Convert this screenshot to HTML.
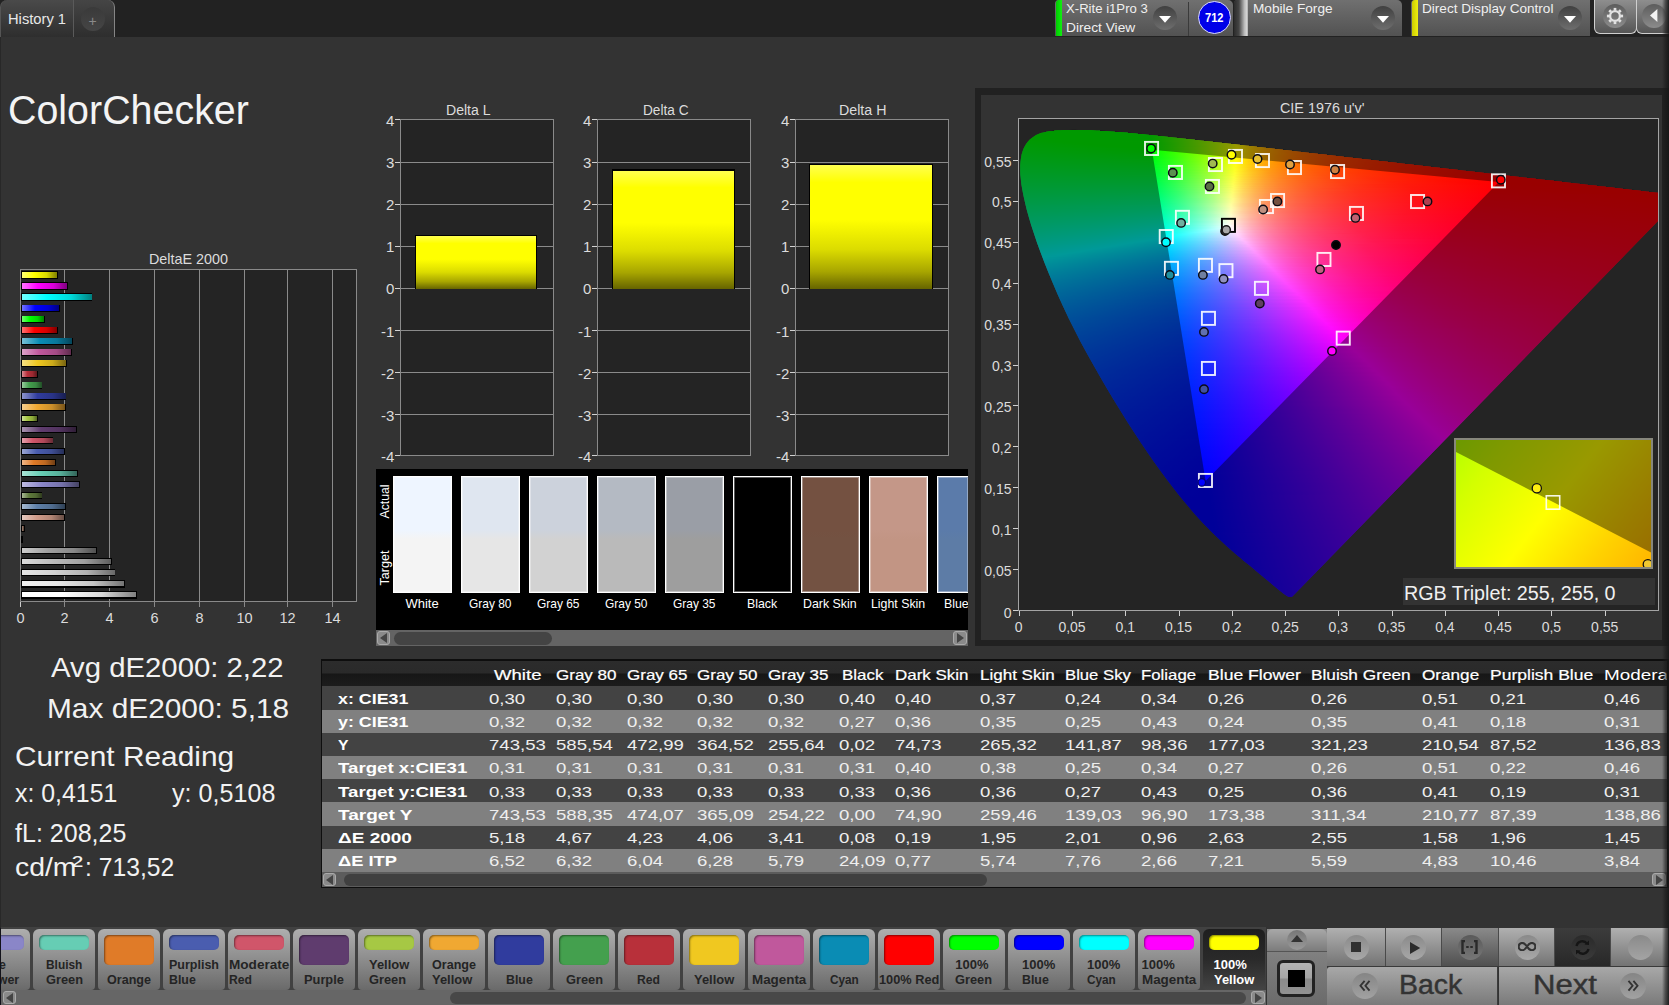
<!DOCTYPE html><html><head><meta charset="utf-8"><title>ColorChecker</title><style>
*{margin:0;padding:0;box-sizing:border-box}
html,body{width:1669px;height:1005px;overflow:hidden;background:#333;font-family:"Liberation Sans",sans-serif}
#r{position:absolute;left:0;top:0;width:1669px;height:1005px;overflow:hidden;background:#333}
.a,.t,i{position:absolute;display:block}
.t{white-space:nowrap;line-height:1;transform-origin:0 50%}
.ciebg{position:absolute;left:0;top:0;width:639px;height:491px}
.ciebg i{position:absolute}
.cieov{position:absolute;left:0;top:0}
</style></head><body><div id="r"><div class="a" style="left:0px;top:0px;width:1669px;height:37px;background:#222"></div>
<div class="a" style="left:0px;top:0px;width:74px;height:37px;background:linear-gradient(#4a4a4a,#2e2e2e);border-radius:7px 0 0 0;border-left:1px solid #555;border-right:1px solid #5a5a5a"></div>
<div class="a" style="left:74px;top:0px;width:41px;height:37px;background:linear-gradient(#454545,#2e2e2e);border-radius:0 7px 0 0;border-right:1.5px solid #858585"></div>
<div class="a" style="left:81px;top:7px;width:24px;height:24px;border-radius:50%;background:linear-gradient(#3a3a3a,#454545)"></div>
<span class="t" style="left:8.0px;top:10.5px;font-size:15px;color:#e8e8e8;transform:scaleX(0.980);">History 1</span>
<span class="t" style="left:88.5px;top:14.1px;font-size:14px;color:#8a8a8a;">+</span>
<div class="a" style="left:1055px;top:0px;width:178px;height:36px;background:linear-gradient(#707070,#525252);border-radius:4px 5px 0 0"></div>
<div class="a" style="left:1056px;top:0px;width:6px;height:36px;background:linear-gradient(90deg,#0c0,#1e1);border-radius:3px 0 0 0"></div>
<span class="t" style="left:1066.0px;top:2.2px;font-size:13.5px;color:#f0f0f0;transform:scaleX(0.973);">X-Rite i1Pro 3</span>
<span class="t" style="left:1066.0px;top:21.4px;font-size:13.5px;color:#f0f0f0;transform:scaleX(1.017);">Direct View</span>
<div class="a" style="left:1152.5px;top:5.5px;width:24px;height:24px;border-radius:50%;background:linear-gradient(#404040,#6e6e6e)"></div>
<svg class="a" style="left:1158.5px;top:15.5px" width="12" height="8"><path d="M0 0H12L6 6.8Z" fill="#fff"/></svg>
<div class="a" style="left:1188px;top:2px;width:1px;height:34px;background:#3a3a3a"></div>
<div class="a" style="left:1197.5px;top:1px;width:33px;height:33px;border-radius:50%;background:#0000e8;border:1.3px solid #dcdcff"></div>
<span class="t" style="left:1204.8px;top:11.7px;font-size:12.5px;color:#fff;font-weight:bold;transform:scaleX(0.887);">712</span>
<div class="a" style="left:1234px;top:0px;width:168.2px;height:36px;background:linear-gradient(#707070,#525252);border-radius:4px 5px 0 0"></div>
<div class="a" style="left:1234px;top:0px;width:14px;height:36px;background:linear-gradient(90deg,#2c2c2c,#444 35%,#bbb 75%,#d4d4d4 90%,#aaa);border-radius:3px 0 0 0"></div>
<span class="t" style="left:1252.5px;top:2.2px;font-size:13.5px;color:#f0f0f0;transform:scaleX(1.010);">Mobile Forge</span>
<div class="a" style="left:1371.4px;top:5.5px;width:24px;height:24px;border-radius:50%;background:linear-gradient(#404040,#6e6e6e)"></div>
<svg class="a" style="left:1377.4px;top:15.5px" width="12" height="8"><path d="M0 0H12L6 6.8Z" fill="#fff"/></svg>
<div class="a" style="left:1411px;top:0px;width:179px;height:36px;background:linear-gradient(#707070,#525252);border-radius:4px 0 0 0"></div>
<div class="a" style="left:1412px;top:0px;width:6px;height:36px;background:linear-gradient(90deg,#cc0,#ee1);border-radius:3px 0 0 0"></div>
<span class="t" style="left:1422.0px;top:2.2px;font-size:13.5px;color:#f0f0f0;transform:scaleX(1.007);">Direct Display Control</span>
<div class="a" style="left:1557.6px;top:5.5px;width:24px;height:24px;border-radius:50%;background:linear-gradient(#404040,#6e6e6e)"></div>
<svg class="a" style="left:1563.6px;top:15.5px" width="12" height="8"><path d="M0 0H12L6 6.8Z" fill="#fff"/></svg>
<div class="a" style="left:1594px;top:0px;width:42.6px;height:34px;background:linear-gradient(#8e8e8e,#555);border:1.3px solid #cfcfcf;border-top:none;border-radius:0 0 6px 6px"></div>
<div class="a" style="left:1636.4px;top:0px;width:42px;height:34px;background:linear-gradient(#8e8e8e,#555);border:1.3px solid #cfcfcf;border-top:none;border-radius:0 0 6px 6px"></div>
<div class="a" style="left:1603px;top:4.4px;width:24px;height:24px;border-radius:50%;background:linear-gradient(#5c5c5c,#8c8c8c)"></div>
<div class="a" style="left:1641.7px;top:4.4px;width:24px;height:24px;border-radius:50%;background:linear-gradient(#5c5c5c,#8c8c8c)"></div>
<svg class="a" style="left:1605px;top:6.4px" width="20" height="20" viewBox="-10 -10 20 20"><g fill="none" stroke="#e2e2e2"><circle r="4.9" stroke-width="2.3"/><g stroke-width="2.7"><path d="M0 -5.6V-8.1" transform="rotate(0)"/><path d="M0 -5.6V-8.1" transform="rotate(45)"/><path d="M0 -5.6V-8.1" transform="rotate(90)"/><path d="M0 -5.6V-8.1" transform="rotate(135)"/><path d="M0 -5.6V-8.1" transform="rotate(180)"/><path d="M0 -5.6V-8.1" transform="rotate(225)"/><path d="M0 -5.6V-8.1" transform="rotate(270)"/><path d="M0 -5.6V-8.1" transform="rotate(315)"/></g></g></svg>
<svg class="a" style="left:1650px;top:9px" width="8" height="13"><path d="M7.4 0V13L0 6.5Z" fill="#f4f4f4"/></svg>
<span class="t" style="left:8.3px;top:89.8px;font-size:41px;color:#f4f4f4;transform:scaleX(0.961);">ColorChecker</span>
<div class="a" style="left:20px;top:269px;width:337px;height:333px;background:#242424;border:1px solid #8a8a8a"></div>
<div class="a" style="left:64px;top:270px;width:1px;height:337px;background:#8a8a8a"></div>
<div class="a" style="left:109px;top:270px;width:1px;height:337px;background:#8a8a8a"></div>
<div class="a" style="left:154px;top:270px;width:1px;height:337px;background:#8a8a8a"></div>
<div class="a" style="left:199px;top:270px;width:1px;height:337px;background:#8a8a8a"></div>
<div class="a" style="left:244px;top:270px;width:1px;height:337px;background:#8a8a8a"></div>
<div class="a" style="left:287px;top:270px;width:1px;height:337px;background:#8a8a8a"></div>
<div class="a" style="left:332px;top:270px;width:1px;height:337px;background:#8a8a8a"></div>
<div class="a" style="left:20px;top:602px;width:1px;height:5px;background:#ccc"></div>
<span class="t" style="left:149.0px;top:251.9px;font-size:14.5px;color:#dcdcdc;transform:scaleX(0.990);">DeltaE 2000</span>
<span class="t" style="left:16.5px;top:611.2px;font-size:14.5px;color:#dcdcdc;">0</span>
<span class="t" style="left:60.5px;top:611.2px;font-size:14.5px;color:#dcdcdc;">2</span>
<span class="t" style="left:105.5px;top:611.2px;font-size:14.5px;color:#dcdcdc;">4</span>
<span class="t" style="left:150.5px;top:611.2px;font-size:14.5px;color:#dcdcdc;">6</span>
<span class="t" style="left:195.5px;top:611.2px;font-size:14.5px;color:#dcdcdc;">8</span>
<span class="t" style="left:236.4px;top:611.2px;font-size:14.5px;color:#dcdcdc;">10</span>
<span class="t" style="left:279.4px;top:611.2px;font-size:14.5px;color:#dcdcdc;">12</span>
<span class="t" style="left:324.4px;top:611.2px;font-size:14.5px;color:#dcdcdc;">14</span>
<div class="a" style="left:21px;top:271.4px;width:36.8px;height:7.5px;background:#000"><div class="a" style="left:1px;right:0.8px;top:0.9px;bottom:1.2px;background:linear-gradient(90deg,#ffff73,#ffff00 35%,#d9d900 70%,#808000)"></div></div>
<div class="a" style="left:21px;top:282.4px;width:47.1px;height:7.5px;background:#000"><div class="a" style="left:1px;right:0.8px;top:0.9px;bottom:1.2px;background:linear-gradient(90deg,#ff73ff,#ff00ff 35%,#d900d9 70%,#800080)"></div></div>
<div class="a" style="left:21px;top:293.4px;width:71.4px;height:7.5px;background:#000"><div class="a" style="left:1px;right:0.8px;top:0.9px;bottom:1.2px;background:linear-gradient(90deg,#73ffff,#00ffff 35%,#00d9d9 70%,#008080)"></div></div>
<div class="a" style="left:21px;top:304.5px;width:39.0px;height:7.5px;background:#000"><div class="a" style="left:1px;right:0.8px;top:0.9px;bottom:1.2px;background:linear-gradient(90deg,#7373ff,#0000ff 35%,#0000d9 70%,#000080)"></div></div>
<div class="a" style="left:21px;top:315.5px;width:23.9px;height:7.5px;background:#000"><div class="a" style="left:1px;right:0.8px;top:0.9px;bottom:1.2px;background:linear-gradient(90deg,#73ff73,#00ff00 35%,#00d900 70%,#008000)"></div></div>
<div class="a" style="left:21px;top:326.5px;width:37.0px;height:7.5px;background:#000"><div class="a" style="left:1px;right:0.8px;top:0.9px;bottom:1.2px;background:linear-gradient(90deg,#ff7373,#ff0000 35%,#d90000 70%,#800000)"></div></div>
<div class="a" style="left:21px;top:337.5px;width:52.2px;height:7.5px;background:#000"><div class="a" style="left:1px;right:0.8px;top:0.9px;bottom:1.2px;background:linear-gradient(90deg,#78c0d6,#0a8cb4 35%,#087799 70%,#05465a)"></div></div>
<div class="a" style="left:21px;top:348.5px;width:51.1px;height:7.5px;background:#000"><div class="a" style="left:1px;right:0.8px;top:0.9px;bottom:1.2px;background:linear-gradient(90deg,#dca3c9,#c0589c 35%,#a34b85 70%,#602c4e)"></div></div>
<div class="a" style="left:21px;top:359.6px;width:45.9px;height:7.5px;background:#000"><div class="a" style="left:1px;right:0.8px;top:0.9px;bottom:1.2px;background:linear-gradient(90deg,#f7e184,#f0c820 35%,#ccaa1b 70%,#786410)"></div></div>
<div class="a" style="left:21px;top:370.6px;width:16.7px;height:7.5px;background:#000"><div class="a" style="left:1px;right:0.8px;top:0.9px;bottom:1.2px;background:linear-gradient(90deg,#d88d93,#b8303a 35%,#9c2931 70%,#5c181d)"></div></div>
<div class="a" style="left:21px;top:381.6px;width:21.4px;height:7.5px;background:#000"><div class="a" style="left:1px;right:0.8px;top:0.9px;bottom:1.2px;background:linear-gradient(90deg,#98cb9e,#44a04e 35%,#3a8842 70%,#225027)"></div></div>
<div class="a" style="left:21px;top:392.6px;width:45.3px;height:7.5px;background:#000"><div class="a" style="left:1px;right:0.8px;top:0.9px;bottom:1.2px;background:linear-gradient(90deg,#8d94ca,#303c9e 35%,#293386 70%,#181e4f)"></div></div>
<div class="a" style="left:21px;top:403.6px;width:45.0px;height:7.5px;background:#000"><div class="a" style="left:1px;right:0.8px;top:0.9px;bottom:1.2px;background:linear-gradient(90deg,#f7cf8e,#f0a832 35%,#cc8f2a 70%,#785419)"></div></div>
<div class="a" style="left:21px;top:414.7px;width:17.2px;height:7.5px;background:#000"><div class="a" style="left:1px;right:0.8px;top:0.9px;bottom:1.2px;background:linear-gradient(90deg,#cee198,#a6c844 35%,#8daa3a 70%,#536422)"></div></div>
<div class="a" style="left:21px;top:425.7px;width:55.5px;height:7.5px;background:#000"><div class="a" style="left:1px;right:0.8px;top:0.9px;bottom:1.2px;background:linear-gradient(90deg,#a794af,#5f3c6e 35%,#51335e 70%,#301e37)"></div></div>
<div class="a" style="left:21px;top:436.7px;width:32.3px;height:7.5px;background:#000"><div class="a" style="left:1px;right:0.8px;top:0.9px;bottom:1.2px;background:linear-gradient(90deg,#e5a2ad,#d0566a 35%,#b1495a 70%,#682b35)"></div></div>
<div class="a" style="left:21px;top:447.7px;width:43.7px;height:7.5px;background:#000"><div class="a" style="left:1px;right:0.8px;top:0.9px;bottom:1.2px;background:linear-gradient(90deg,#9ba6d3,#4a5daf 35%,#3f4f95 70%,#252e58)"></div></div>
<div class="a" style="left:21px;top:458.7px;width:35.2px;height:7.5px;background:#000"><div class="a" style="left:1px;right:0.8px;top:0.9px;bottom:1.2px;background:linear-gradient(90deg,#eeb689,#e07b28 35%,#be6922 70%,#703e14)"></div></div>
<div class="a" style="left:21px;top:469.8px;width:56.9px;height:7.5px;background:#000"><div class="a" style="left:1px;right:0.8px;top:0.9px;bottom:1.2px;background:linear-gradient(90deg,#abe4d6,#66cdb4 35%,#57ae99 70%,#33665a)"></div></div>
<div class="a" style="left:21px;top:480.8px;width:58.6px;height:7.5px;background:#000"><div class="a" style="left:1px;right:0.8px;top:0.9px;bottom:1.2px;background:linear-gradient(90deg,#bfbce1,#8a86c8 35%,#7572aa 70%,#454364)"></div></div>
<div class="a" style="left:21px;top:491.8px;width:21.4px;height:7.5px;background:#000"><div class="a" style="left:1px;right:0.8px;top:0.9px;bottom:1.2px;background:linear-gradient(90deg,#a7b694,#5f7a3c 35%,#516833 70%,#303d1e)"></div></div>
<div class="a" style="left:21px;top:502.8px;width:44.8px;height:7.5px;background:#000"><div class="a" style="left:1px;right:0.8px;top:0.9px;bottom:1.2px;background:linear-gradient(90deg,#a6b9cf,#5e7fa8 35%,#506c8f 70%,#2f4054)"></div></div>
<div class="a" style="left:21px;top:513.8px;width:43.5px;height:7.5px;background:#000"><div class="a" style="left:1px;right:0.8px;top:0.9px;bottom:1.2px;background:linear-gradient(90deg,#e5c9bf,#d09c8a 35%,#b18575 70%,#684e45)"></div></div>
<div class="a" style="left:21px;top:524.9px;width:4.2px;height:7.5px;background:#000"><div class="a" style="left:1px;right:0.8px;top:0.9px;bottom:1.2px;background:linear-gradient(90deg,#b9a89f,#806050 35%,#6d5244 70%,#403028)"></div></div>
<div class="a" style="left:21px;top:535.9px;width:2.0px;height:7.5px;background:#000"><div class="a" style="left:1px;right:0.8px;top:0.9px;bottom:1.2px;background:linear-gradient(90deg,#737373,#000000 35%,#000000 70%,#000000)"></div></div>
<div class="a" style="left:21px;top:546.9px;width:76.0px;height:7.5px;background:#000"><div class="a" style="left:1px;right:0.8px;top:0.9px;bottom:1.2px;background:linear-gradient(90deg,#cbcbcb,#a0a0a0 35%,#888888 70%,#505050)"></div></div>
<div class="a" style="left:21px;top:557.9px;width:90.5px;height:7.5px;background:#000"><div class="a" style="left:1px;right:0.8px;top:0.9px;bottom:1.2px;background:linear-gradient(90deg,#dadada,#bcbcbc 35%,#a0a0a0 70%,#5e5e5e)"></div></div>
<div class="a" style="left:21px;top:568.9px;width:94.3px;height:7.5px;background:#000"><div class="a" style="left:1px;right:0.8px;top:0.9px;bottom:1.2px;background:linear-gradient(90deg,#e6e6e6,#d2d2d2 35%,#b2b2b2 70%,#696969)"></div></div>
<div class="a" style="left:21px;top:580.0px;width:104.1px;height:7.5px;background:#000"><div class="a" style="left:1px;right:0.8px;top:0.9px;bottom:1.2px;background:linear-gradient(90deg,#f1f1f1,#e6e6e6 35%,#c4c4c4 70%,#737373)"></div></div>
<div class="a" style="left:21px;top:591.0px;width:115.5px;height:7.5px;background:#000"><div class="a" style="left:1px;right:0.8px;top:0.9px;bottom:1.2px;background:linear-gradient(90deg,#ffffff,#ffffff 35%,#d9d9d9 70%,#808080)"></div></div>
<div class="a" style="left:400.6px;top:119.6px;width:152.8px;height:336px;background:#242424"></div>
<div class="a" style="left:399.975px;top:118.975px;width:154.05px;height:1.25px;background:#8a8a8a"></div>
<div class="a" style="left:395.2px;top:118.9px;width:5.4px;height:1.4px;background:#d2d2d2"></div>
<span class="t" style="left:385.9px;top:112.5px;font-size:15px;color:#dcdcdc;">4</span>
<div class="a" style="left:399.975px;top:161.775px;width:154.05px;height:1.25px;background:#8a8a8a"></div>
<div class="a" style="left:395.2px;top:161.7px;width:5.4px;height:1.4px;background:#d2d2d2"></div>
<span class="t" style="left:385.9px;top:155.3px;font-size:15px;color:#dcdcdc;">3</span>
<div class="a" style="left:399.975px;top:203.775px;width:154.05px;height:1.25px;background:#8a8a8a"></div>
<div class="a" style="left:395.2px;top:203.7px;width:5.4px;height:1.4px;background:#d2d2d2"></div>
<span class="t" style="left:385.9px;top:197.3px;font-size:15px;color:#dcdcdc;">2</span>
<div class="a" style="left:399.975px;top:245.775px;width:154.05px;height:1.25px;background:#8a8a8a"></div>
<div class="a" style="left:395.2px;top:245.7px;width:5.4px;height:1.4px;background:#d2d2d2"></div>
<span class="t" style="left:385.9px;top:239.3px;font-size:15px;color:#dcdcdc;">1</span>
<div class="a" style="left:399.975px;top:287.875px;width:154.05px;height:1.25px;background:#8a8a8a"></div>
<div class="a" style="left:395.2px;top:287.8px;width:5.4px;height:1.4px;background:#d2d2d2"></div>
<span class="t" style="left:385.9px;top:281.4px;font-size:15px;color:#dcdcdc;">0</span>
<div class="a" style="left:399.975px;top:329.975px;width:154.05px;height:1.25px;background:#8a8a8a"></div>
<div class="a" style="left:395.2px;top:329.9px;width:5.4px;height:1.4px;background:#d2d2d2"></div>
<span class="t" style="left:380.9px;top:323.5px;font-size:15px;color:#dcdcdc;">-1</span>
<div class="a" style="left:399.975px;top:371.975px;width:154.05px;height:1.25px;background:#8a8a8a"></div>
<div class="a" style="left:395.2px;top:371.9px;width:5.4px;height:1.4px;background:#d2d2d2"></div>
<span class="t" style="left:380.9px;top:365.5px;font-size:15px;color:#dcdcdc;">-2</span>
<div class="a" style="left:399.975px;top:413.975px;width:154.05px;height:1.25px;background:#8a8a8a"></div>
<div class="a" style="left:395.2px;top:413.9px;width:5.4px;height:1.4px;background:#d2d2d2"></div>
<span class="t" style="left:380.9px;top:407.5px;font-size:15px;color:#dcdcdc;">-3</span>
<div class="a" style="left:399.975px;top:454.975px;width:154.05px;height:1.25px;background:#8a8a8a"></div>
<div class="a" style="left:395.2px;top:454.9px;width:5.4px;height:1.4px;background:#d2d2d2"></div>
<span class="t" style="left:380.9px;top:448.5px;font-size:15px;color:#dcdcdc;">-4</span>
<div class="a" style="left:399.975px;top:118.975px;width:1.25px;height:337.25px;background:#8a8a8a"></div>
<div class="a" style="left:552.775px;top:118.975px;width:1.25px;height:337.25px;background:#8a8a8a"></div>
<span class="t" style="left:445.7px;top:103.0px;font-size:14px;color:#dcdcdc;transform:scaleX(1.005);">Delta L</span>
<div class="a" style="left:415px;top:234.8px;width:122px;height:54.4px;background:#000"><div class="a" style="left:1px;right:1px;top:1.5px;bottom:0.6px;background:linear-gradient(#ffff50,#ffff00 14%,#ffff00 44%,#dcdc00 68%,#a8a600 86%,#666400)"></div></div>
<div class="a" style="left:597.8px;top:119.6px;width:152.8px;height:336px;background:#242424"></div>
<div class="a" style="left:597.175px;top:118.975px;width:154.05px;height:1.25px;background:#8a8a8a"></div>
<div class="a" style="left:592.4px;top:118.9px;width:5.4px;height:1.4px;background:#d2d2d2"></div>
<span class="t" style="left:583.1px;top:112.5px;font-size:15px;color:#dcdcdc;">4</span>
<div class="a" style="left:597.175px;top:161.775px;width:154.05px;height:1.25px;background:#8a8a8a"></div>
<div class="a" style="left:592.4px;top:161.7px;width:5.4px;height:1.4px;background:#d2d2d2"></div>
<span class="t" style="left:583.1px;top:155.3px;font-size:15px;color:#dcdcdc;">3</span>
<div class="a" style="left:597.175px;top:203.775px;width:154.05px;height:1.25px;background:#8a8a8a"></div>
<div class="a" style="left:592.4px;top:203.7px;width:5.4px;height:1.4px;background:#d2d2d2"></div>
<span class="t" style="left:583.1px;top:197.3px;font-size:15px;color:#dcdcdc;">2</span>
<div class="a" style="left:597.175px;top:245.775px;width:154.05px;height:1.25px;background:#8a8a8a"></div>
<div class="a" style="left:592.4px;top:245.7px;width:5.4px;height:1.4px;background:#d2d2d2"></div>
<span class="t" style="left:583.1px;top:239.3px;font-size:15px;color:#dcdcdc;">1</span>
<div class="a" style="left:597.175px;top:287.875px;width:154.05px;height:1.25px;background:#8a8a8a"></div>
<div class="a" style="left:592.4px;top:287.8px;width:5.4px;height:1.4px;background:#d2d2d2"></div>
<span class="t" style="left:583.1px;top:281.4px;font-size:15px;color:#dcdcdc;">0</span>
<div class="a" style="left:597.175px;top:329.975px;width:154.05px;height:1.25px;background:#8a8a8a"></div>
<div class="a" style="left:592.4px;top:329.9px;width:5.4px;height:1.4px;background:#d2d2d2"></div>
<span class="t" style="left:578.1px;top:323.5px;font-size:15px;color:#dcdcdc;">-1</span>
<div class="a" style="left:597.175px;top:371.975px;width:154.05px;height:1.25px;background:#8a8a8a"></div>
<div class="a" style="left:592.4px;top:371.9px;width:5.4px;height:1.4px;background:#d2d2d2"></div>
<span class="t" style="left:578.1px;top:365.5px;font-size:15px;color:#dcdcdc;">-2</span>
<div class="a" style="left:597.175px;top:413.975px;width:154.05px;height:1.25px;background:#8a8a8a"></div>
<div class="a" style="left:592.4px;top:413.9px;width:5.4px;height:1.4px;background:#d2d2d2"></div>
<span class="t" style="left:578.1px;top:407.5px;font-size:15px;color:#dcdcdc;">-3</span>
<div class="a" style="left:597.175px;top:454.975px;width:154.05px;height:1.25px;background:#8a8a8a"></div>
<div class="a" style="left:592.4px;top:454.9px;width:5.4px;height:1.4px;background:#d2d2d2"></div>
<span class="t" style="left:578.1px;top:448.5px;font-size:15px;color:#dcdcdc;">-4</span>
<div class="a" style="left:597.175px;top:118.975px;width:1.25px;height:337.25px;background:#8a8a8a"></div>
<div class="a" style="left:749.975px;top:118.975px;width:1.25px;height:337.25px;background:#8a8a8a"></div>
<span class="t" style="left:642.5px;top:103.0px;font-size:14px;color:#dcdcdc;transform:scaleX(0.975);">Delta C</span>
<div class="a" style="left:612px;top:169.0px;width:123px;height:120.2px;background:#000"><div class="a" style="left:1px;right:1px;top:1.5px;bottom:0.6px;background:linear-gradient(#ffff50,#ffff00 14%,#ffff00 44%,#dcdc00 68%,#a8a600 86%,#666400)"></div></div>
<div class="a" style="left:795.8px;top:119.6px;width:152.7px;height:336px;background:#242424"></div>
<div class="a" style="left:795.175px;top:118.975px;width:153.95px;height:1.25px;background:#8a8a8a"></div>
<div class="a" style="left:790.4px;top:118.9px;width:5.4px;height:1.4px;background:#d2d2d2"></div>
<span class="t" style="left:781.1px;top:112.5px;font-size:15px;color:#dcdcdc;">4</span>
<div class="a" style="left:795.175px;top:161.775px;width:153.95px;height:1.25px;background:#8a8a8a"></div>
<div class="a" style="left:790.4px;top:161.7px;width:5.4px;height:1.4px;background:#d2d2d2"></div>
<span class="t" style="left:781.1px;top:155.3px;font-size:15px;color:#dcdcdc;">3</span>
<div class="a" style="left:795.175px;top:203.775px;width:153.95px;height:1.25px;background:#8a8a8a"></div>
<div class="a" style="left:790.4px;top:203.7px;width:5.4px;height:1.4px;background:#d2d2d2"></div>
<span class="t" style="left:781.1px;top:197.3px;font-size:15px;color:#dcdcdc;">2</span>
<div class="a" style="left:795.175px;top:245.775px;width:153.95px;height:1.25px;background:#8a8a8a"></div>
<div class="a" style="left:790.4px;top:245.7px;width:5.4px;height:1.4px;background:#d2d2d2"></div>
<span class="t" style="left:781.1px;top:239.3px;font-size:15px;color:#dcdcdc;">1</span>
<div class="a" style="left:795.175px;top:287.875px;width:153.95px;height:1.25px;background:#8a8a8a"></div>
<div class="a" style="left:790.4px;top:287.8px;width:5.4px;height:1.4px;background:#d2d2d2"></div>
<span class="t" style="left:781.1px;top:281.4px;font-size:15px;color:#dcdcdc;">0</span>
<div class="a" style="left:795.175px;top:329.975px;width:153.95px;height:1.25px;background:#8a8a8a"></div>
<div class="a" style="left:790.4px;top:329.9px;width:5.4px;height:1.4px;background:#d2d2d2"></div>
<span class="t" style="left:776.1px;top:323.5px;font-size:15px;color:#dcdcdc;">-1</span>
<div class="a" style="left:795.175px;top:371.975px;width:153.95px;height:1.25px;background:#8a8a8a"></div>
<div class="a" style="left:790.4px;top:371.9px;width:5.4px;height:1.4px;background:#d2d2d2"></div>
<span class="t" style="left:776.1px;top:365.5px;font-size:15px;color:#dcdcdc;">-2</span>
<div class="a" style="left:795.175px;top:413.975px;width:153.95px;height:1.25px;background:#8a8a8a"></div>
<div class="a" style="left:790.4px;top:413.9px;width:5.4px;height:1.4px;background:#d2d2d2"></div>
<span class="t" style="left:776.1px;top:407.5px;font-size:15px;color:#dcdcdc;">-3</span>
<div class="a" style="left:795.175px;top:454.975px;width:153.95px;height:1.25px;background:#8a8a8a"></div>
<div class="a" style="left:790.4px;top:454.9px;width:5.4px;height:1.4px;background:#d2d2d2"></div>
<span class="t" style="left:776.1px;top:448.5px;font-size:15px;color:#dcdcdc;">-4</span>
<div class="a" style="left:795.175px;top:118.975px;width:1.25px;height:337.25px;background:#8a8a8a"></div>
<div class="a" style="left:947.875px;top:118.975px;width:1.25px;height:337.25px;background:#8a8a8a"></div>
<span class="t" style="left:839.4px;top:103.0px;font-size:14px;color:#dcdcdc;transform:scaleX(1.017);">Delta H</span>
<div class="a" style="left:809px;top:163.5px;width:123.5px;height:125.7px;background:#000"><div class="a" style="left:1px;right:1px;top:1.5px;bottom:0.6px;background:linear-gradient(#ffff50,#ffff00 14%,#ffff00 44%,#dcdc00 68%,#a8a600 86%,#666400)"></div></div>
<div class="a" style="left:376px;top:469px;width:592px;height:161px;background:#000;overflow:hidden"></div>
<div class="a" style="left:393px;top:476px;width:58.7px;height:117px;border:1.2px solid #fff;background:linear-gradient(#eef5ff 46%,#f4f4f4 54%);box-shadow:inset 0 0 0 1px rgba(255,255,255,.35)"></div>
<span class="t" style="left:405.4px;top:596.6px;font-size:13px;color:#fff;">White</span>
<div class="a" style="left:461px;top:476px;width:58.7px;height:117px;border:1.2px solid #fff;background:linear-gradient(#dfe6f0 46%,#e6e6e6 54%);box-shadow:inset 0 0 0 1px rgba(255,255,255,.35)"></div>
<span class="t" style="left:468.8px;top:596.6px;font-size:13px;color:#fff;transform:scaleX(0.919);">Gray 80</span>
<div class="a" style="left:529px;top:476px;width:58.7px;height:117px;border:1.2px solid #fff;background:linear-gradient(#ccd2dc 46%,#d2d2d2 54%);box-shadow:inset 0 0 0 1px rgba(255,255,255,.35)"></div>
<span class="t" style="left:536.8px;top:596.6px;font-size:13px;color:#fff;transform:scaleX(0.919);">Gray 65</span>
<div class="a" style="left:597px;top:476px;width:58.7px;height:117px;border:1.2px solid #fff;background:linear-gradient(#b4bac3 46%,#bababa 54%);box-shadow:inset 0 0 0 1px rgba(255,255,255,.35)"></div>
<span class="t" style="left:604.8px;top:596.6px;font-size:13px;color:#fff;transform:scaleX(0.919);">Gray 50</span>
<div class="a" style="left:665px;top:476px;width:58.7px;height:117px;border:1.2px solid #fff;background:linear-gradient(#9a9ea6 46%,#9e9e9e 54%);box-shadow:inset 0 0 0 1px rgba(255,255,255,.35)"></div>
<span class="t" style="left:672.8px;top:596.6px;font-size:13px;color:#fff;transform:scaleX(0.919);">Gray 35</span>
<div class="a" style="left:733px;top:476px;width:58.7px;height:117px;border:1.2px solid #fff;background:linear-gradient(#000 46%,#000 54%);box-shadow:inset 0 0 0 1px rgba(255,255,255,.35)"></div>
<span class="t" style="left:746.9px;top:596.6px;font-size:13px;color:#fff;transform:scaleX(0.950);">Black</span>
<div class="a" style="left:801px;top:476px;width:58.7px;height:117px;border:1.2px solid #fff;background:linear-gradient(#745141 46%,#735242 54%);box-shadow:inset 0 0 0 1px rgba(255,255,255,.35)"></div>
<span class="t" style="left:803.2px;top:596.6px;font-size:13px;color:#fff;transform:scaleX(0.950);">Dark Skin</span>
<div class="a" style="left:869px;top:476px;width:58.7px;height:117px;border:1.2px solid #fff;background:linear-gradient(#c49788 46%,#c29584 54%);box-shadow:inset 0 0 0 1px rgba(255,255,255,.35)"></div>
<span class="t" style="left:870.9px;top:596.6px;font-size:13px;color:#fff;transform:scaleX(0.950);">Light Skin</span>
<div class="a" style="left:937px;top:476px;width:31px;height:117px;border:1.2px solid #fff;border-right:none;background:linear-gradient(#5b7baa 46%,#5d7ca6 54%);box-shadow:inset 0 0 0 1px rgba(255,255,255,.35)"></div>
<div class="a" style="left:937px;top:590px;width:31px;height:30px;overflow:hidden">
<span class="t" style="left:7.0px;top:6.6px;font-size:13px;color:#fff;transform:scaleX(0.950);">Blue Sky</span>
</div>
<span class="t" style="left:388.8px;top:507.1px;font-size:13.5px;color:#fff;transform-origin:0 84.67%;transform:rotate(-90deg) scaleX(0.906)">Actual</span>
<span class="t" style="left:388.8px;top:573.8px;font-size:13.5px;color:#fff;transform-origin:0 84.67%;transform:rotate(-90deg) scaleX(0.933)">Target</span>
<div class="a" style="left:376px;top:630px;width:592px;height:16px;background:#646464"></div>
<div class="a" style="left:393.5px;top:631.5px;width:158px;height:13px;background:#444;border-radius:6.5px"></div>
<div class="a" style="left:377px;top:631px;width:13px;height:14px;background:#8a8a8a;border:1px solid #aaa;border-radius:3px"></div>
<svg class="a" style="left:380px;top:633px" width="7" height="10"><path d="M7 0V10L0 5Z" fill="#444"/></svg>
<div class="a" style="left:953px;top:631px;width:14px;height:14px;background:#8a8a8a;border:1px solid #aaa;border-radius:3px"></div>
<svg class="a" style="left:957px;top:633px" width="7" height="10"><path d="M0 0V10L7 5Z" fill="#444"/></svg>
<div class="a" style="left:975px;top:88px;width:694px;height:558px;background:#212121"></div>
<div class="a" style="left:981px;top:95px;width:681px;height:545px;background:#333"></div>
<div class="a" style="left:1018px;top:118px;width:641px;height:493px;background:#242424;border:1px solid #a4a4a4"></div>
<div class="a" style="left:1019px;top:119px;width:639px;height:491px;overflow:hidden">
<div class="ciebg" style="clip-path:polygon(273.4px 477.6px, 273.3px 477.6px, 273.3px 477.6px, 273.3px 477.6px, 273.2px 477.6px, 273.2px 477.6px, 273.1px 477.6px, 273.1px 477.7px, 273.0px 477.7px, 273.0px 477.7px, 272.9px 477.7px, 272.8px 477.7px, 272.7px 477.7px, 272.6px 477.7px, 272.5px 477.7px, 272.5px 477.7px, 272.4px 477.8px, 272.4px 477.9px, 272.3px 478.0px, 272.3px 478.0px, 272.2px 478.1px, 272.1px 478.1px, 272.1px 478.1px, 272.0px 478.1px, 271.8px 478.1px, 271.7px 478.1px, 271.5px 478.1px, 271.3px 478.1px, 271.2px 478.1px, 271.0px 478.1px, 270.9px 478.1px, 270.7px 478.1px, 270.5px 478.1px, 270.4px 478.1px, 270.2px 478.0px, 270.0px 478.0px, 269.7px 477.9px, 269.5px 477.8px, 269.2px 477.7px, 268.9px 477.5px, 268.4px 477.3px, 268.0px 477.0px, 267.4px 476.7px, 266.9px 476.3px, 266.3px 475.9px, 265.7px 475.5px, 265.0px 475.0px, 264.3px 474.5px, 263.6px 473.9px, 262.8px 473.3px, 261.9px 472.6px, 261.0px 471.9px, 260.0px 471.1px, 258.9px 470.2px, 257.8px 469.3px, 256.6px 468.3px, 255.4px 467.3px, 254.1px 466.2px, 252.7px 465.0px, 251.3px 463.8px, 249.8px 462.5px, 248.3px 461.2px, 246.6px 459.9px, 244.9px 458.5px, 243.1px 457.0px, 241.2px 455.4px, 239.2px 453.7px, 237.0px 451.9px, 234.8px 450.1px, 232.4px 448.1px, 230.0px 446.1px, 227.4px 444.0px, 224.8px 441.9px, 222.1px 439.6px, 219.3px 437.2px, 216.3px 434.7px, 213.2px 432.1px, 210.0px 429.2px, 206.7px 426.3px, 203.2px 423.1px, 199.7px 419.8px, 196.0px 416.3px, 192.2px 412.6px, 188.3px 408.6px, 184.1px 404.3px, 179.7px 399.5px, 175.0px 394.2px, 170.0px 388.3px, 164.7px 381.9px, 159.0px 374.9px, 153.2px 367.5px, 147.3px 359.7px, 141.2px 351.4px, 134.9px 342.7px, 128.5px 333.4px, 121.9px 323.8px, 115.2px 313.6px, 108.4px 303.0px, 101.6px 292.1px, 94.8px 280.9px, 87.9px 269.4px, 81.1px 257.8px, 74.4px 246.1px, 67.8px 234.3px, 61.4px 222.4px, 55.3px 210.6px, 49.5px 198.9px, 44.0px 187.3px, 38.9px 176.0px, 34.2px 164.9px, 29.7px 154.2px, 25.5px 143.7px, 21.7px 133.7px, 18.2px 124.2px, 15.1px 115.1px, 12.3px 106.5px, 9.9px 98.5px, 7.8px 91.0px, 6.1px 83.9px, 4.6px 77.3px, 3.4px 71.2px, 2.4px 65.4px, 1.8px 60.1px, 1.3px 55.2px, 1.2px 50.7px, 1.2px 46.5px, 1.5px 42.6px, 2.0px 39.0px, 2.6px 35.6px, 3.5px 32.5px, 4.6px 29.6px, 5.9px 27.0px, 7.4px 24.6px, 9.0px 22.4px, 10.8px 20.5px, 12.8px 18.9px, 14.9px 17.4px, 17.1px 16.1px, 19.4px 15.0px, 21.8px 14.1px, 24.3px 13.4px, 26.9px 12.8px, 29.6px 12.3px, 32.4px 11.9px, 35.2px 11.6px, 38.1px 11.3px, 41.0px 11.2px, 44.0px 11.0px, 47.0px 10.9px, 50.0px 10.9px, 53.0px 10.8px, 56.1px 10.8px, 59.1px 10.9px, 62.1px 10.9px, 65.2px 10.9px, 68.2px 11.0px, 71.3px 11.1px, 74.5px 11.3px, 77.6px 11.4px, 80.9px 11.6px, 84.1px 11.8px, 87.4px 12.0px, 90.8px 12.2px, 94.2px 12.5px, 97.7px 12.7px, 101.2px 13.0px, 104.8px 13.3px, 108.4px 13.6px, 112.1px 14.0px, 115.9px 14.3px, 119.8px 14.7px, 123.7px 15.1px, 127.7px 15.5px, 131.8px 15.9px, 136.0px 16.3px, 140.2px 16.7px, 144.6px 17.2px, 149.0px 17.7px, 153.5px 18.2px, 158.1px 18.7px, 162.8px 19.2px, 167.6px 19.7px, 172.5px 20.2px, 177.6px 20.8px, 182.7px 21.4px, 187.9px 21.9px, 193.2px 22.5px, 198.6px 23.2px, 204.1px 23.8px, 209.8px 24.4px, 215.5px 25.1px, 221.4px 25.7px, 227.4px 26.4px, 233.5px 27.1px, 239.7px 27.8px, 246.0px 28.6px, 252.4px 29.3px, 259.0px 30.1px, 265.6px 30.8px, 272.4px 31.6px, 279.2px 32.4px, 286.2px 33.2px, 293.2px 34.0px, 300.4px 34.8px, 307.7px 35.6px, 315.0px 36.5px, 322.4px 37.3px, 329.9px 38.2px, 337.5px 39.1px, 345.2px 39.9px, 352.9px 40.8px, 360.7px 41.7px, 368.5px 42.6px, 376.3px 43.5px, 384.1px 44.4px, 391.9px 45.3px, 399.6px 46.2px, 407.1px 47.1px, 414.7px 47.9px, 422.2px 48.8px, 429.6px 49.7px, 437.1px 50.5px, 444.6px 51.4px, 452.0px 52.2px, 459.2px 53.0px, 466.4px 53.9px, 473.3px 54.7px, 480.1px 55.4px, 486.7px 56.2px, 493.2px 56.9px, 499.6px 57.7px, 505.8px 58.4px, 511.8px 59.1px, 517.7px 59.7px, 523.4px 60.4px, 528.9px 61.0px, 534.3px 61.6px, 539.5px 62.2px, 544.5px 62.8px, 549.3px 63.4px, 554.0px 63.9px, 558.5px 64.4px, 562.8px 64.9px, 567.0px 65.4px, 571.1px 65.9px, 575.0px 66.3px, 578.8px 66.7px, 582.4px 67.2px, 585.9px 67.6px, 589.3px 68.0px, 592.6px 68.3px, 595.9px 68.7px, 599.0px 69.1px, 602.1px 69.4px, 605.1px 69.8px, 608.0px 70.1px, 610.7px 70.4px, 613.4px 70.7px, 616.0px 71.0px, 618.5px 71.3px, 620.9px 71.6px, 623.2px 71.9px, 625.4px 72.1px, 627.6px 72.4px, 629.6px 72.6px, 631.5px 72.8px, 633.3px 73.0px, 635.0px 73.2px, 636.6px 73.4px, 638.1px 73.6px, 639.5px 73.7px, 640.9px 73.9px, 642.2px 74.0px, 643.5px 74.2px, 644.7px 74.3px, 645.8px 74.4px, 646.8px 74.6px, 647.9px 74.7px, 648.8px 74.8px, 649.7px 74.9px, 650.5px 75.0px, 651.2px 75.1px, 651.9px 75.2px, 652.5px 75.2px, 653.1px 75.3px, 653.6px 75.4px, 654.2px 75.4px, 654.7px 75.5px, 655.2px 75.5px, 655.7px 75.6px, 656.2px 75.6px, 656.6px 75.7px, 657.1px 75.7px, 657.5px 75.8px, 657.9px 75.8px, 658.3px 75.9px, 658.7px 75.9px, 659.1px 76.0px, 659.5px 76.0px, 659.9px 76.1px, 660.2px 76.1px, 660.6px 76.2px, 661.0px 76.2px, 661.4px 76.2px, 661.7px 76.3px, 662.1px 76.3px, 662.3px 76.4px, 662.6px 76.4px, 662.7px 76.4px, 662.9px 76.4px, 663.0px 76.4px, 663.2px 76.5px, 663.3px 76.5px, 663.4px 76.5px, 663.5px 76.5px, 663.6px 76.5px, 663.7px 76.5px, 663.8px 76.5px, 663.8px 76.5px, 663.9px 76.5px, 663.9px 76.5px)"><i style="top:11px;left:35px;width:46px;height:1px;background:linear-gradient(90deg,#00ff00 0px,#00ff00 46px)"></i><i style="top:12px;left:27px;width:69px;height:1px;background:linear-gradient(90deg,#00ff00 0px,#00ff00 69px)"></i><i style="top:13px;left:22px;width:87px;height:1px;background:linear-gradient(90deg,#00ff00 0px,#00ff00 87px)"></i><i style="top:14px;left:19px;width:100px;height:1px;background:linear-gradient(90deg,#00ff00 0px,#00ff00 100px)"></i><i style="top:15px;left:17px;width:113px;height:1px;background:linear-gradient(90deg,#00ff00 0px,#00ff00 113px)"></i><i style="top:16px;left:15px;width:124px;height:1px;background:linear-gradient(90deg,#00ff00 0px,#00ff00 114px,#01ff00 116px,#13ff00 124px)"></i><i style="top:17px;left:13px;width:136px;height:1px;background:linear-gradient(90deg,#00ff00 0px,#00ff00 116px,#01ff00 118px,#2bff00 136px)"></i><i style="top:18px;left:12px;width:146px;height:1px;background:linear-gradient(90deg,#00ff00 0px,#00ff00 118px,#41ff00 146px)"></i><i style="top:19px;left:11px;width:156px;height:1px;background:linear-gradient(90deg,#00ff00 0px,#01ff00 120px,#2bff00 138px,#59ff00 156px)"></i><i style="top:20px;left:9px;width:167px;height:1px;background:linear-gradient(90deg,#00ff02 0px,#00ff00 121px,#02ff00 123px,#2dff00 141px,#72ff00 167px)"></i><i style="top:21px;left:8px;width:177px;height:1px;background:linear-gradient(90deg,#00ff04 0px,#00ff00 28px,#00ff00 123px,#44ff00 151px,#8dff00 177px)"></i><i style="top:22px;left:7px;width:187px;height:1px;background:linear-gradient(90deg,#00ff06 0px,#00ff00 38px,#02ff00 125px,#51ff00 157px,#a9ff00 187px)"></i><i style="top:23px;left:7px;width:196px;height:1px;background:linear-gradient(90deg,#00ff07 0px,#00ff00 49px,#00ff00 125px,#30ff00 145px,#5fff00 162px,#94ff00 180px,#c7ff00 196px)"></i><i style="top:24px;left:6px;width:206px;height:1px;background:linear-gradient(90deg,#00ff09 0px,#00ff00 61px,#02ff00 127px,#37ff00 149px,#6dff00 168px,#aaff00 188px,#e7ff00 206px)"></i><i style="top:25px;left:5px;width:216px;height:1px;background:linear-gradient(90deg,#00ff0b 0px,#00ff00 71px,#00ff00 127px,#2fff00 147px,#65ff00 166px,#aeff00 190px,#faff00 212px,#fffc00 214px,#fff500 216px)"></i><i style="top:26px;left:5px;width:225px;height:1px;background:linear-gradient(90deg,#00ff0d 0px,#00ff00 84px,#01ff00 127px,#3bff00 151px,#78ff00 173px,#b7ff00 193px,#ffff00 213px,#ffd700 225px)"></i><i style="top:27px;left:4px;width:234px;height:1px;background:linear-gradient(90deg,#00ff0e 0px,#00ff00 95px,#01ff00 129px,#3cff00 153px,#79ff00 175px,#b8ff00 194px,#fffe00 214px,#ffdd00 224px,#ffc100 234px)"></i><i style="top:28px;left:4px;width:243px;height:1px;background:linear-gradient(90deg,#00ff10 0px,#00ff00 106px,#00ff00 127px,#02ff00 129px,#29ff00 145px,#70ff00 171px,#b4ff00 193px,#fcff00 213px,#fffb00 215px,#ffce00 229px,#ffac00 243px)"></i><i style="top:29px;left:3px;width:253px;height:1px;background:linear-gradient(90deg,#00ff12 0px,#00ff00 129px,#35ff00 151px,#73ff00 173px,#b1ff00 193px,#fffe00 215px,#ffe200 223px,#ffc500 233px,#ff9900 253px)"></i><i style="top:30px;left:3px;width:261px;height:1px;background:linear-gradient(90deg,#00ff13 0px,#00ff00 130px,#35ff00 151px,#72ff00 173px,#b1ff00 193px,#fffd00 215px,#ffdb00 225px,#ffbf00 235px,#ffa400 247px,#ff8b00 261px)"></i><i style="top:31px;left:2px;width:271px;height:1px;background:linear-gradient(90deg,#00ff15 0px,#01ff02 132px,#38ff00 153px,#75ff00 175px,#b5ff00 195px,#fdff00 215px,#ffd200 229px,#ffb300 241px,#ff9700 255px,#ff7d00 271px)"></i><i style="top:32px;left:2px;width:280px;height:1px;background:linear-gradient(90deg,#00ff17 0px,#00ff04 131px,#36ff00 153px,#74ff00 175px,#b3ff00 195px,#fbff00 214px,#fffc00 216px,#ffce00 230px,#ffac00 244px,#ff8d00 260px,#ff7100 280px)"></i><i style="top:33px;left:2px;width:288px;height:1px;background:linear-gradient(90deg,#00ff18 0px,#00ff06 131px,#31ff02 151px,#6eff00 173px,#b3ff00 195px,#fbff00 215px,#fffb00 216px,#ffcd00 230px,#ffa700 246px,#ff8300 266px,#ff6700 288px)"></i><i style="top:34px;left:1px;width:298px;height:1px;background:linear-gradient(90deg,#00ff1a 0px,#01ff08 133px,#38ff04 155px,#77ff00 177px,#b7ff00 197px,#fffe00 217px,#ffe200 224px,#ffca00 232px,#ffa000 250px,#ff7c00 272px,#ff5d00 298px)"></i><i style="top:35px;left:1px;width:307px;height:1px;background:linear-gradient(90deg,#00ff1c 0px,#00ff0b 132px,#02ff0a 134px,#3aff06 155px,#78ff01 177px,#b9ff00 197px,#fbff00 215px,#fffb00 217px,#ffdf00 225px,#ffc200 235px,#ff9a00 253px,#ff7500 277px,#ff5400 307px)"></i><i style="top:36px;left:1px;width:316px;height:1px;background:linear-gradient(90deg,#00ff1e 0px,#01ff0d 133px,#38ff09 155px,#77ff04 177px,#b7ff00 197px,#f9ff00 215px,#fffd00 217px,#ffdb00 227px,#ffbf00 237px,#ff9400 256px,#ff7e00 270px,#ff6b00 284px,#ff4c00 316px)"></i><i style="top:37px;left:1px;width:324px;height:1px;background:linear-gradient(90deg,#00ff1f 0px,#00ff0f 133px,#38ff0b 155px,#77ff07 177px,#b7ff02 197px,#f9ff00 215px,#fffd00 217px,#ffda00 227px,#ffb900 239px,#ffa300 248px,#ff8d00 260px,#ff6600 288px,#ff4500 324px)"></i><i style="top:38px;left:1px;width:333px;height:1px;background:linear-gradient(90deg,#00ff21 0px,#01ff11 134px,#39ff0d 156px,#78ff09 177px,#baff05 197px,#fcff00 215px,#fffa00 217px,#ffd800 227px,#ffbc00 237px,#ffa100 249px,#ff8b00 261px,#ff7300 277px,#ff6100 293px,#ff3f00 333px)"></i><i style="top:39px;left:0px;width:343px;height:1px;background:linear-gradient(90deg,#00ff23 0px,#00ff13 134px,#2bff11 152px,#6fff0c 175px,#b0ff08 195px,#f9ff03 215px,#fffd03 217px,#ffd400 229px,#ffb400 241px,#ff9b00 253px,#ff8300 267px,#ff6d00 283px,#ff5900 301px,#ff3800 343px)"></i><i style="top:40px;left:0px;width:352px;height:1px;background:linear-gradient(90deg,#00ff24 0px,#02ff16 135px,#3aff12 157px,#7aff0e 179px,#bcff0a 199px,#ffff06 217px,#ffdc03 227px,#ffba00 239px,#ff9c00 253px,#ff8000 268px,#ff6b00 284px,#ff5600 304px,#ff4400 326px,#ff3300 352px)"></i><i style="top:41px;left:0px;width:360px;height:1px;background:linear-gradient(90deg,#00ff26 0px,#01ff18 135px,#3aff14 157px,#7aff11 179px,#bcff0d 199px,#ffff09 217px,#ffd505 229px,#ffb502 241px,#ff9700 255px,#ff7d00 270px,#ff6600 288px,#ff5000 310px,#ff3e00 334px,#ff2e00 360px)"></i><i style="top:42px;left:0px;width:369px;height:1px;background:linear-gradient(90deg,#00ff28 0px,#02ff1a 136px,#3bff17 158px,#75ff13 178px,#b7ff10 197px,#faff0c 215px,#fffc0b 217px,#ffd307 229px,#ffae03 243px,#ff9200 257px,#ff7900 273px,#ff6000 293px,#ff4b00 315px,#ff3900 341px,#ff2900 369px)"></i><i style="top:43px;left:0px;width:378px;height:1px;background:linear-gradient(90deg,#00ff2a 0px,#01ff1c 135px,#39ff19 157px,#73ff16 177px,#b5ff13 197px,#f8ff0f 215px,#fffe0e 217px,#ffd40a 229px,#ffab05 245px,#ff8f02 259px,#ff7400 277px,#ff5c00 296px,#ff4700 320px,#ff3400 348px,#ff2500 378px)"></i><i style="top:44px;left:0px;width:386px;height:1px;background:linear-gradient(90deg,#00ff2b 0px,#00ff1f 135px,#39ff1c 157px,#73ff19 177px,#b5ff15 197px,#f9ff12 215px,#fffd11 217px,#ffd40c 229px,#ffaa07 245px,#ff8b04 261px,#ff7100 279px,#ff5800 300px,#ff4400 324px,#ff3200 352px,#ff2100 386px)"></i><i style="top:45px;left:0px;width:395px;height:1px;background:linear-gradient(90deg,#00ff2d 0px,#01ff21 136px,#3aff1e 158px,#75ff1b 178px,#b7ff18 198px,#fbff15 215px,#fffb14 217px,#ffcb0e 231px,#ffa809 245px,#ff8a05 261px,#ff6d02 281px,#ff5500 303px,#ff4000 329px,#ff2d00 359px,#ff1d00 395px)"></i><i style="top:46px;left:0px;width:404px;height:1px;background:linear-gradient(90deg,#00ff2f 0px,#00ff24 135px,#39ff21 157px,#73ff1e 177px,#b6ff1b 197px,#faff18 215px,#fffc17 217px,#ffd311 229px,#ffa90c 245px,#ff8707 263px,#ff6b03 283px,#ff5200 306px,#ff3c00 334px,#ff2900 366px,#ff1900 404px)"></i><i style="top:47px;left:0px;width:412px;height:1px;background:linear-gradient(90deg,#00ff31 0px,#00ff26 135px,#33ff24 155px,#73ff21 177px,#b6ff1e 197px,#faff1b 215px,#fffc1a 217px,#ffdf16 225px,#ffc712 233px,#ffa40d 247px,#ff8308 265px,#ff6804 285px,#ff4f01 309px,#ff3900 338px,#ff2600 372px,#ff1600 412px)"></i><i style="top:48px;left:0px;width:421px;height:1px;background:linear-gradient(90deg,#00ff32 0px,#00ff28 136px,#34ff26 156px,#6eff24 176px,#b1ff21 196px,#fdff1e 215px,#fff91d 217px,#ffca15 231px,#ffa30f 247px,#ff7f09 267px,#ff6205 289px,#ff4901 315px,#ff3400 345px,#ff2200 381px,#ff1300 421px)"></i><i style="top:49px;left:0px;width:430px;height:1px;background:linear-gradient(90deg,#00ff34 0px,#00ff2b 135px,#2dff29 153px,#6dff26 175px,#afff24 195px,#fbff21 215px,#fffb20 217px,#ffcb18 231px,#ff9f11 249px,#ff7c0b 269px,#ff6006 291px,#ff4802 317px,#ff3200 348px,#ff1f00 386px,#ff1000 430px)"></i><i style="top:50px;left:0px;width:439px;height:1px;background:linear-gradient(90deg,#00ff36 0px,#00ff2d 136px,#2eff2b 154px,#68ff29 174px,#b1ff27 196px,#fdff24 216px,#fff823 218px,#ffc91a 231px,#ff9e13 249px,#ff7b0d 269px,#ff5d07 293px,#ff4403 321px,#ff2e00 355px,#ff1c00 393px,#ff0d00 439px)"></i><i style="top:51px;left:0px;width:447px;height:1px;background:linear-gradient(90deg,#00ff38 0px,#00ff30 136px,#33ff2e 156px,#74ff2c 178px,#b8ff29 198px,#feff27 216px,#ffc91d 231px,#ffa116 247px,#ff7b0e 269px,#ff5d09 293px,#ff4204 323px,#ff2d00 357px,#ff1a00 399px,#ff0a00 447px)"></i><i style="top:52px;left:0px;width:456px;height:1px;background:linear-gradient(90deg,#00ff39 0px,#00ff32 135px,#02ff32 137px,#27ff31 151px,#67ff2f 173px,#b0ff2d 195px,#fcff2a 215px,#fff929 217px,#ffdc23 225px,#ffc41f 233px,#ff9a16 251px,#ff750f 273px,#ff590a 297px,#ff3f05 327px,#ff2a00 362px,#ff1800 404px,#ff0800 456px)"></i><i style="top:53px;left:0px;width:465px;height:1px;background:linear-gradient(90deg,#00ff3b 0px,#00ff35 136px,#03ff34 138px,#2dff33 154px,#74ff31 178px,#b9ff2f 198px,#ffff2d 216px,#ffe127 224px,#ffc822 232px,#ff9c19 249px,#ff7711 271px,#ff580b 297px,#ff3d05 329px,#ff2701 367px,#ff1500 411px,#ff0500 465px)"></i><i style="top:54px;left:0px;width:473px;height:1px;background:linear-gradient(90deg,#00ff3d 0px,#00ff37 136px,#02ff37 138px,#27ff36 152px,#6eff34 176px,#b2ff33 196px,#ffff31 216px,#ffe12a 224px,#ffc725 232px,#ff9c1b 249px,#ff7713 271px,#ff560c 299px,#ff3b06 331px,#ff2502 371px,#ff1300 417px,#ff0300 473px)"></i><i style="top:55px;left:0px;width:482px;height:1px;background:linear-gradient(90deg,#00ff3f 0px,#01ff39 137px,#37ff38 157px,#6dff37 175px,#b0ff36 195px,#feff34 215px,#fff832 217px,#ffdb2c 225px,#ffc326 233px,#ffaa21 243px,#ff951c 253px,#ff7114 275px,#ff520d 303px,#ff3807 337px,#ff2202 376px,#ff1000 424px,#ff0100 482px)"></i><i style="top:56px;left:0px;width:491px;height:1px;background:linear-gradient(90deg,#00ff41 0px,#02ff3c 138px,#37ff3b 158px,#74ff3a 178px,#b2ff39 196px,#fffe37 216px,#ffe030 224px,#ffc72a 232px,#ffad24 242px,#ff971f 251px,#ff7015 275px,#ff510e 303px,#ff3608 339px,#ff2003 381px,#ff0d00 435px,#ff0000 491px)"></i><i style="top:57px;left:0px;width:500px;height:1px;background:linear-gradient(90deg,#00ff43 0px,#01ff3e 137px,#3cff3d 159px,#79ff3c 179px,#b8ff3b 197px,#ffff3a 215px,#ffe133 223px,#ffc22b 233px,#ffa925 243px,#ff9420 253px,#ff6e17 277px,#ff4e0f 307px,#ff3208 345px,#ff1c03 390px,#ff0700 456px,#ff0000 484px,#ff0000 500px)"></i><i style="top:58px;left:0px;width:508px;height:1px;background:linear-gradient(90deg,#00ff44 0px,#00ff41 137px,#3cff40 159px,#79ff3f 179px,#b8ff3f 197px,#ffff3e 215px,#ffe036 223px,#ffc12e 233px,#ffa827 243px,#ff9322 253px,#ff7f1d 265px,#ff6b18 279px,#ff4b10 309px,#ff2f09 349px,#ff1903 396px,#ff0200 474px,#ff0000 508px)"></i><i style="top:59px;left:0px;width:517px;height:1px;background:linear-gradient(90deg,#00ff46 0px,#00ff44 138px,#37ff43 158px,#74ff42 178px,#b2ff42 196px,#f9ff41 214px,#fffd40 216px,#ffde38 224px,#ffc030 234px,#ffa729 244px,#ff9224 254px,#ff7d1f 265px,#ff6a19 279px,#ff4911 311px,#ff2c09 353px,#ff1603 405px,#ff0000 483px,#ff0000 517px)"></i><i style="top:60px;left:0px;width:526px;height:1px;background:linear-gradient(90deg,#00ff48 0px,#00ff46 137px,#35ff46 157px,#73ff45 177px,#b1ff45 195px,#fffe44 215px,#ffdf3b 223px,#ffc033 233px,#ffa72c 243px,#ff8f25 255px,#ff681b 281px,#ff4611 315px,#ff2909 359px,#ff1203 414px,#ff0000 482px,#ff0000 526px)"></i><i style="top:61px;left:0px;width:535px;height:1px;background:linear-gradient(90deg,#00ff4a 0px,#00ff49 138px,#36ff48 158px,#74ff48 178px,#abff48 194px,#faff48 214px,#fffc47 216px,#ffdd3e 224px,#ffbf35 234px,#ffa62e 244px,#ff8d27 256px,#ff7721 269px,#ff641b 283px,#ff4312 317px,#ff270a 363px,#ff0f03 423px,#ff0000 481px,#ff0000 535px)"></i><i style="top:62px;left:1px;width:542px;height:1px;background:linear-gradient(90deg,#00ff4c 0px,#01ff4b 137px,#38ff4b 157px,#6fff4b 175px,#b5ff4b 195px,#fdff4b 213px,#fff949 215px,#ffdb40 223px,#ffbd37 233px,#ffa02f 245px,#ff8828 257px,#ff7321 271px,#ff611c 285px,#ff4113 319px,#ff230a 369px,#ff0c03 430px,#ff0000 480px,#ff0000 542px)"></i><i style="top:63px;left:1px;width:551px;height:1px;background:linear-gradient(90deg,#00ff4e 0px,#01ff4e 138px,#38ff4e 158px,#77ff4e 178px,#b7ff4e 196px,#ffff4e 214px,#ffe045 222px,#ffc13b 232px,#ffa332 244px,#ff8b2b 256px,#ff7424 270px,#ff621e 283px,#ff4014 319px,#ff220b 371px,#ff0a03 437px,#ff0000 479px,#ff0000 551px)"></i><i style="top:64px;left:1px;width:560px;height:1px;background:linear-gradient(90deg,#00ff50 0px,#00ff51 138px,#37ff51 157px,#6fff51 175px,#b5ff51 195px,#feff52 213px,#fff84f 215px,#ffd344 225px,#ffb63b 235px,#ff9b32 247px,#ff842b 259px,#ff6f24 273px,#ff5c1e 289px,#ff3c14 325px,#ff1e0b 379px,#ff0603 450px,#ff0001 478px,#ff0000 560px)"></i><i style="top:65px;left:1px;width:568px;height:1px;background:linear-gradient(90deg,#00ff51 0px,#00ff53 138px,#37ff54 157px,#6fff54 175px,#b6ff55 195px,#feff55 213px,#fff853 215px,#ffd347 225px,#ffb63d 235px,#ff9a34 247px,#ff842d 259px,#ff6f26 273px,#ff5b20 289px,#ff3a15 327px,#ff290f 355px,#ff1b0b 385px,#ff0403 458px,#ff0002 476px,#ff0000 568px)"></i><i style="top:66px;left:1px;width:577px;height:1px;background:linear-gradient(90deg,#00ff53 0px,#00ff56 138px,#38ff57 158px,#77ff57 178px,#b7ff58 196px,#fffe58 214px,#ffd84b 224px,#ffba41 234px,#ff9d38 246px,#ff8630 258px,#ff7028 272px,#ff5c22 288px,#ff3b16 325px,#ff2a11 353px,#ff1b0c 385px,#ff0304 463px,#ff0002 477px,#ff0000 577px)"></i><i style="top:67px;left:1px;width:586px;height:1px;background:linear-gradient(90deg,#00ff55 0px,#00ff59 138px,#37ff59 157px,#76ff5a 177px,#b6ff5b 195px,#ffff5c 213px,#ffd94f 223px,#ffba44 233px,#ff9d3a 245px,#ff8632 257px,#ff6e2a 273px,#ff5a23 289px,#ff3817 329px,#ff2811 357px,#ff180c 391px,#ff0003 474px,#ff0000 586px)"></i><i style="top:68px;left:1px;width:595px;height:1px;background:linear-gradient(90deg,#00ff57 0px,#00ff5b 138px,#31ff5c 156px,#70ff5d 176px,#b0ff5e 194px,#fffd5f 214px,#ffd751 224px,#ffb946 234px,#ff9c3c 246px,#ff8233 260px,#ff6a2a 276px,#ff5723 292px,#ff3618 331px,#ff2612 359px,#ff170c 393px,#ff0004 473px,#ff0000 595px)"></i><i style="top:69px;left:2px;width:602px;height:1px;background:linear-gradient(90deg,#00ff59 0px,#01ff5e 138px,#39ff5f 157px,#72ff60 175px,#b2ff62 193px,#fcff63 211px,#fffa61 213px,#ffd453 223px,#ffb748 233px,#ff9a3e 245px,#ff8034 259px,#ff692c 275px,#ff5625 291px,#ff441e 311px,#ff3418 333px,#ff170d 393px,#ff0005 470px,#ff0000 546px,#ff0000 602px)"></i><i style="top:70px;left:2px;width:611px;height:1px;background:linear-gradient(90deg,#00ff5b 0px,#01ff61 138px,#34ff62 156px,#6cff63 174px,#b4ff65 194px,#fdff67 212px,#fff864 214px,#ffd356 224px,#ffb54b 234px,#ff9940 246px,#ff7f36 260px,#ff682d 276px,#ff5325 294px,#ff3219 335px,#ff160e 393px,#ff0006 469px,#ff0000 557px,#ff0000 611px)"></i><i style="top:71px;left:2px;width:620px;height:1px;background:linear-gradient(90deg,#00ff5d 0px,#00ff64 138px,#33ff65 155px,#6bff66 173px,#b3ff68 193px,#fcff6a 211px,#fff968 213px,#ffd359 223px,#ffb14c 235px,#ff9541 247px,#ff7c37 261px,#ff662e 277px,#ff5226 295px,#ff311a 337px,#ff150f 395px,#ff0007 468px,#ff0000 566px,#ff0000 620px)"></i><i style="top:72px;left:2px;width:628px;height:1px;background:linear-gradient(90deg,#00ff5f 0px,#00ff66 138px,#32ff68 156px,#6bff6a 173px,#b3ff6c 193px,#fdff6e 211px,#fff86b 213px,#ffd35c 223px,#ffb04e 235px,#ff9543 247px,#ff7c39 261px,#ff6530 277px,#ff5128 295px,#ff4021 315px,#ff2f1a 339px,#ff1510 395px,#ff0007 469px,#ff0000 578px,#ff0000 628px)"></i><i style="top:73px;left:2px;width:637px;height:1px;background:linear-gradient(90deg,#00ff61 0px,#00ff69 138px,#39ff6b 158px,#7aff6d 178px,#bcff6f 196px,#ffff71 212px,#ffd861 222px,#ffb452 234px,#ff9847 246px,#ff7e3c 260px,#ff6733 276px,#ff522a 294px,#ff3f22 316px,#ff2f1b 339px,#ff1511 395px,#ff0008 467px,#ff0000 589px,#ff0000 637px)"></i><i style="top:74px;left:3px;width:636px;height:1px;background:linear-gradient(90deg,#00ff63 0px,#02ff6c 138px,#3bff6e 158px,#75ff70 175px,#afff72 191px,#f9ff75 209px,#fffc74 211px,#ffd563 221px,#ffb254 233px,#ff9649 245px,#ff7c3e 259px,#ff6634 275px,#ff4f2b 295px,#ff3e23 315px,#ff2e1d 339px,#ff1412 395px,#ff0009 465px,#ff0001 576px,#ff0000 636px)"></i><i style="top:75px;left:3px;width:636px;height:1px;background:linear-gradient(90deg,#00ff65 0px,#01ff6f 138px,#3bff71 158px,#75ff73 175px,#b7ff76 193px,#faff79 209px,#fffb77 211px,#ffd566 221px,#ffb157 233px,#ff954b 245px,#ff7c40 259px,#ff6536 275px,#ff4f2c 295px,#ff3e25 315px,#ff2e1e 339px,#ff1413 395px,#ff000a 465px,#ff0000 636px)"></i><i style="top:76px;left:3px;width:636px;height:1px;background:linear-gradient(90deg,#00ff67 0px,#01ff72 138px,#3aff74 158px,#75ff77 175px,#b7ff79 193px,#faff7c 209px,#fffb7b 211px,#ffd46a 221px,#ffb15a 233px,#ff954d 245px,#ff7c42 259px,#ff6538 275px,#ff512f 293px,#ff3e26 315px,#ff2e1f 339px,#ff1414 393px,#ff000b 463px,#ff0000 636px)"></i><i style="top:77px;left:3px;width:636px;height:1px;background:linear-gradient(90deg,#00ff69 0px,#00ff75 138px,#34ff77 156px,#6eff7a 173px,#b0ff7d 191px,#fbff80 209px,#fffb7e 211px,#ffd46d 221px,#ffb05c 233px,#ff9550 245px,#ff7b44 259px,#ff6439 275px,#ff5030 293px,#ff3d28 315px,#ff2d20 339px,#ff1415 393px,#ff000c 463px,#ff0000 636px)"></i><i style="top:78px;left:3px;width:636px;height:1px;background:linear-gradient(90deg,#00ff6b 0px,#00ff78 138px,#34ff7a 156px,#6eff7d 173px,#b0ff80 191px,#fbff84 209px,#fffa82 211px,#ffd470 221px,#ffb05f 233px,#ff9452 245px,#ff7b46 259px,#ff643b 275px,#ff5032 293px,#ff3d29 315px,#ff2d21 339px,#ff1416 393px,#ff000c 461px,#ff0000 636px)"></i><i style="top:79px;left:4px;width:635px;height:1px;background:linear-gradient(90deg,#00ff6d 0px,#00ff7a 136px,#03ff7b 138px,#25ff7c 150px,#6bff80 172px,#adff84 190px,#f8ff87 208px,#fffd87 210px,#ffd574 220px,#ffb665 230px,#ff9555 244px,#ff7b48 258px,#ff643d 274px,#ff5034 292px,#ff3d2a 314px,#ff2d23 337px,#ff1417 391px,#ff000d 459px,#ff0001 635px)"></i><i style="top:80px;left:4px;width:635px;height:1px;background:linear-gradient(90deg,#00ff6f 0px,#00ff7d 136px,#02ff7e 138px,#37ff81 156px,#72ff84 174px,#adff87 190px,#f9ff8b 208px,#fffc8a 210px,#ffd577 220px,#ffb668 230px,#ff9557 244px,#ff7b4a 258px,#ff643f 274px,#ff5035 292px,#ff3d2c 314px,#ff2d24 337px,#ff1418 391px,#ff000e 459px,#ff0001 635px)"></i><i style="top:81px;left:4px;width:635px;height:1px;background:linear-gradient(90deg,#00ff71 0px,#02ff81 138px,#36ff84 156px,#72ff87 174px,#adff8b 190px,#f9ff8f 208px,#fffc8e 210px,#ffd47a 220px,#ffb66a 230px,#ff945a 244px,#ff7a4d 258px,#ff6341 274px,#ff4f37 292px,#ff3c2d 314px,#ff2c25 337px,#ff1319 391px,#ff000f 457px,#ff0002 635px)"></i><i style="top:82px;left:4px;width:635px;height:1px;background:linear-gradient(90deg,#00ff73 0px,#01ff84 138px,#36ff87 156px,#72ff8b 174px,#b5ff8f 192px,#faff93 208px,#fffb91 210px,#ffd47d 220px,#ffb56d 230px,#ff945c 244px,#ff7a4f 258px,#ff6343 274px,#ff4f38 292px,#ff3c2f 314px,#ff2c26 337px,#ff131a 391px,#ff0010 457px,#ff0002 635px)"></i><i style="top:83px;left:4px;width:635px;height:1px;background:linear-gradient(90deg,#00ff75 0px,#01ff87 138px,#36ff8a 156px,#72ff8e 174px,#b5ff92 192px,#faff97 208px,#fffb95 210px,#ffd480 220px,#ffb570 230px,#ff935e 244px,#ff7951 258px,#ff6345 274px,#ff4f3a 292px,#ff3c30 314px,#ff2c28 337px,#ff131b 389px,#ff0011 455px,#ff0003 635px)"></i><i style="top:84px;left:5px;width:634px;height:1px;background:linear-gradient(90deg,#00ff77 0px,#00ff89 136px,#03ff8a 138px,#25ff8c 150px,#66ff91 169px,#b0ff96 189px,#fdff9b 207px,#fff897 209px,#ffd182 219px,#ffb272 229px,#ff9160 243px,#ff7852 257px,#ff6146 273px,#ff4e3b 291px,#ff3b31 313px,#ff2b29 337px,#ff131c 389px,#ff0011 455px,#ff0003 634px)"></i><i style="top:85px;left:5px;width:634px;height:1px;background:linear-gradient(90deg,#00ff79 0px,#00ff8c 136px,#02ff8d 138px,#38ff91 156px,#6dff94 171px,#b0ff99 189px,#feff9f 207px,#fff79b 209px,#ffd085 219px,#ffb275 229px,#ff9162 243px,#ff7854 257px,#ff6148 273px,#ff4d3d 291px,#ff3a33 313px,#ff2b2a 337px,#ff131d 389px,#ff0012 453px,#ff0004 634px)"></i><i style="top:86px;left:5px;width:634px;height:1px;background:linear-gradient(90deg,#00ff7c 0px,#02ff90 138px,#3eff94 158px,#7bff99 175px,#b9ff9e 191px,#feffa3 207px,#ffd78c 217px,#ffb177 229px,#ff9567 241px,#ff7a58 255px,#ff634b 271px,#ff4f40 289px,#ff3d36 309px,#ff2d2c 333px,#ff131e 387px,#ff0013 453px,#ff0004 634px)"></i><i style="top:87px;left:5px;width:634px;height:1px;background:linear-gradient(90deg,#00ff7e 0px,#01ff93 138px,#3dff98 158px,#7bff9d 175px,#b9ffa1 191px,#ffffa7 207px,#ffd690 217px,#ffb77d 227px,#ff946a 241px,#ff7a5a 255px,#ff634d 271px,#ff4e41 289px,#ff3d37 309px,#ff2c2e 333px,#ff141f 385px,#ff0014 451px,#ff0005 634px)"></i><i style="top:88px;left:6px;width:633px;height:1px;background:linear-gradient(90deg,#00ff80 0px,#00ff96 136px,#2eff9a 152px,#6aff9f 170px,#aeffa4 188px,#fcffab 206px,#fff9a7 208px,#ffd190 218px,#ffb27e 228px,#ff916a 242px,#ff775b 256px,#ff614e 272px,#ff4d42 290px,#ff3a37 312px,#ff2a2e 335px,#ff1320 385px,#ff0015 449px,#ff0005 633px)"></i><i style="top:89px;left:6px;width:633px;height:1px;background:linear-gradient(90deg,#00ff82 0px,#00ff8c 74px,#00ff99 136px,#27ff9d 150px,#6affa2 170px,#aeffa8 188px,#fcffaf 206px,#fff8ab 208px,#ffd193 218px,#ffb281 228px,#ff906d 242px,#ff775d 256px,#ff6050 272px,#ff4c44 290px,#ff3938 312px,#ff2a2f 335px,#ff1321 385px,#ff0016 447px,#ff0006 633px)"></i><i style="top:90px;left:6px;width:633px;height:1px;background:linear-gradient(90deg,#00ff84 0px,#00ff8f 74px,#00ff9c 136px,#03ff9d 138px,#27ffa0 150px,#6affa6 170px,#aeffac 188px,#fdffb3 206px,#fff8af 208px,#ffd097 218px,#ffb184 228px,#ff906f 242px,#ff765f 256px,#ff6052 272px,#ff4c45 290px,#ff393a 312px,#ff2930 335px,#ff1222 385px,#ff0017 447px,#ff0006 633px)"></i><i style="top:91px;left:6px;width:633px;height:1px;background:linear-gradient(90deg,#00ff86 0px,#00ff92 74px,#00ff9f 136px,#03ffa0 138px,#21ffa3 148px,#62ffa9 168px,#aeffb0 188px,#fdffb7 206px,#fff7b3 208px,#ffd09a 218px,#ffb186 228px,#ff8f72 242px,#ff7662 256px,#ff5f53 272px,#ff4b47 290px,#ff393b 312px,#ff2931 335px,#ff1324 383px,#ff0018 445px,#ff000e 527px,#ff0006 633px)"></i><i style="top:92px;left:7px;width:632px;height:1px;background:linear-gradient(90deg,#00ff88 0px,#00ff94 74px,#00ffa3 136px,#36ffa8 154px,#73ffae 171px,#b1ffb4 187px,#fffdba 205px,#ffd4a0 215px,#ffb48c 225px,#ff9276 239px,#ff7865 253px,#ff6156 269px,#ff4c4a 287px,#ff3b3e 307px,#ff2b34 331px,#ff1325 381px,#ff0019 445px,#ff000f 526px,#ff0007 632px)"></i><i style="top:93px;left:7px;width:632px;height:1px;background:linear-gradient(90deg,#00ff8b 0px,#00ff97 74px,#00ffa6 136px,#2fffab 152px,#73ffb2 171px,#b1ffb8 187px,#f8ffbf 203px,#fffdbe 205px,#ffd4a3 215px,#ffb48f 225px,#ff9178 239px,#ff7767 253px,#ff6058 269px,#ff4c4b 287px,#ff3b40 307px,#ff2a35 331px,#ff1326 381px,#ff001a 443px,#ff000f 526px,#ff0007 632px)"></i><i style="top:94px;left:7px;width:632px;height:1px;background:linear-gradient(90deg,#00ff8d 0px,#00ff9a 74px,#00ffa9 136px,#28ffad 150px,#6cffb5 169px,#a9ffbb 185px,#f8ffc3 203px,#fffcc2 205px,#ffd3a7 215px,#ffb392 225px,#ff917b 239px,#ff776a 253px,#ff605a 269px,#ff4c4d 287px,#ff3a41 307px,#ff2a37 331px,#ff1227 381px,#ff001b 443px,#ff0010 526px,#ff0008 632px)"></i><i style="top:95px;left:8px;width:631px;height:1px;background:linear-gradient(90deg,#00ff8f 0px,#00ff9d 74px,#01ffad 136px,#39ffb3 154px,#78ffb9 172px,#b7ffc0 188px,#ffffc8 204px,#ffd5ac 214px,#ffb596 224px,#ff9681 236px,#ff7b6f 250px,#ff635e 266px,#ff4e50 284px,#ff3a43 306px,#ff2a38 329px,#ff1328 377px,#ff001c 439px,#ff0011 523px,#ff0008 631px)"></i><i style="top:96px;left:8px;width:631px;height:1px;background:linear-gradient(90deg,#00ff91 0px,#00ff9f 74px,#01ffb0 136px,#38ffb6 154px,#77ffbd 172px,#b7ffc4 188px,#fffecc 204px,#ffd4af 214px,#ffb499 224px,#ff9684 236px,#ff7a71 250px,#ff6260 266px,#ff4d52 284px,#ff3a44 306px,#ff2a39 329px,#ff132a 377px,#ff001d 439px,#ff0012 523px,#ff0009 631px)"></i><i style="top:97px;left:8px;width:631px;height:1px;background:linear-gradient(90deg,#00ff94 0px,#00ffa2 74px,#00ffb3 136px,#38ffba 154px,#77ffc1 172px,#b7ffc8 188px,#fffed0 204px,#ffd4b3 214px,#ffb49c 224px,#ff9586 236px,#ff7a73 250px,#ff6262 266px,#ff4d54 284px,#ff3946 306px,#ff293b 329px,#ff132b 377px,#ff001e 437px,#ff0012 523px,#ff0009 631px)"></i><i style="top:98px;left:8px;width:631px;height:1px;background:linear-gradient(90deg,#00ff96 0px,#00ffa5 74px,#00ffb7 136px,#38ffbd 154px,#77ffc5 172px,#b8ffcd 188px,#fffed4 204px,#ffd4b6 214px,#ffb39f 224px,#ff9589 236px,#ff7975 250px,#ff6164 266px,#ff4d55 284px,#ff3947 306px,#ff293c 329px,#ff122c 377px,#ff001e 437px,#ff0013 523px,#ff000a 631px)"></i><i style="top:99px;left:9px;width:630px;height:1px;background:linear-gradient(90deg,#00ff98 0px,#00ffa8 74px,#02ffba 136px,#3affc1 154px,#72ffc8 169px,#b2ffd0 185px,#fbffd9 201px,#fffad6 203px,#ffd1b8 213px,#ffb1a0 223px,#ff938b 235px,#ff7877 249px,#ff6066 265px,#ff4c57 283px,#ff3849 305px,#ff283d 329px,#ff122c 377px,#ff0020 435px,#ff0014 520px,#ff000a 630px)"></i><i style="top:100px;left:9px;width:630px;height:1px;background:linear-gradient(90deg,#00ff9a 0px,#00ffaa 74px,#01ffbe 136px,#3affc5 154px,#72ffcc 169px,#b2ffd4 185px,#fbffdd 201px,#fff9da 203px,#ffd0bb 213px,#ffb0a3 223px,#ff928d 235px,#ff7779 249px,#ff6068 265px,#ff4b58 283px,#ff384a 305px,#ff283e 329px,#ff112d 377px,#ff0020 435px,#ff0014 520px,#ff000b 630px)"></i><i style="top:101px;left:9px;width:630px;height:1px;background:linear-gradient(90deg,#00ff9d 0px,#00ffad 74px,#01ffc1 136px,#33ffc8 152px,#6bffcf 167px,#b2ffd8 185px,#fbffe2 201px,#fff9de 203px,#ffd0bf 213px,#ffb0a6 223px,#ff9290 235px,#ff777b 249px,#ff5f6a 265px,#ff4b5a 283px,#ff384c 305px,#ff283f 329px,#ff122f 375px,#ff0022 433px,#ff0015 518px,#ff000b 630px)"></i><i style="top:102px;left:10px;width:629px;height:1px;background:linear-gradient(90deg,#00ff9f 0px,#00ffb0 74px,#00ffc4 134px,#04ffc5 136px,#29ffca 148px,#6fffd3 168px,#a7ffdb 182px,#f9ffe6 200px,#fffce4 202px,#ffd2c4 212px,#ffb1ab 222px,#ff9393 234px,#ff787e 248px,#ff606c 264px,#ff4b5c 282px,#ff384d 304px,#ff2841 327px,#ff1230 373px,#ff0022 431px,#ff0016 517px,#ff000c 629px)"></i><i style="top:103px;left:10px;width:629px;height:1px;background:linear-gradient(90deg,#00ffa1 0px,#00ffb3 74px,#00ffc7 134px,#03ffc8 136px,#22ffcd 146px,#68ffd6 166px,#a7ffdf 182px,#f9ffea 200px,#fffbe8 202px,#ffd1c7 212px,#ffb1ae 222px,#ff9296 234px,#ff7781 248px,#ff5f6e 264px,#ff4b5e 282px,#ff374f 304px,#ff2742 327px,#ff1231 373px,#ff0024 429px,#ff0016 517px,#ff000c 629px)"></i><i style="top:104px;left:10px;width:628px;height:1px;background:linear-gradient(90deg,#00ffa4 0px,#00ffb6 74px,#00ffcb 134px,#02ffcc 136px,#3cffd4 154px,#76ffdc 169px,#aeffe4 183px,#f8ffef 199px,#fffcee 201px,#ffd2cc 211px,#ffb1b2 221px,#ff9399 233px,#ff7784 247px,#ff5f70 263px,#ff4b60 281px,#ff3751 303px,#ff2744 327px,#ff1132 373px,#ff0025 429px,#ff0017 516px,#ff000d 628px)"></i><i style="top:105px;left:11px;width:626px;height:1px;background:linear-gradient(90deg,#00ffa6 0px,#00ffb9 74px,#00ffcf 134px,#2bffd5 148px,#6affdf 165px,#b3ffe9 183px,#fdfff4 199px,#fff7ee 201px,#ffcecc 211px,#ffaeb3 221px,#ff909a 233px,#ff7585 247px,#ff5e71 263px,#ff4961 281px,#ff3651 303px,#ff2645 327px,#ff1234 371px,#ff0026 427px,#ff0018 514px,#ff000d 626px)"></i><i style="top:106px;left:11px;width:625px;height:1px;background:linear-gradient(90deg,#00ffa9 0px,#00ffbc 74px,#00ffd2 134px,#32ffda 150px,#73ffe4 168px,#b4ffee 184px,#fffff9 200px,#ffd3d5 210px,#ffb2b9 220px,#ff93a0 232px,#ff7789 246px,#ff5f75 262px,#ff4a64 280px,#ff3855 300px,#ff2848 323px,#ff1235 369px,#ff0027 425px,#ff0019 513px,#ff000e 625px)"></i><i style="top:107px;left:11px;width:624px;height:1px;background:linear-gradient(90deg,#00ffab 0px,#00ffbf 74px,#00ffd6 134px,#04ffd7 136px,#23ffdc 146px,#62ffe5 163px,#aafff1 181px,#fefffe 199px,#fff6f6 201px,#ffcdd3 211px,#ffadb9 221px,#ff8fa0 233px,#ff7489 247px,#ff5d75 263px,#ff4864 281px,#ff3554 303px,#ff2647 327px,#ff1136 371px,#ff0028 425px,#ff0019 512px,#ff000f 624px)"></i><i style="top:108px;left:11px;width:623px;height:1px;background:linear-gradient(90deg,#00ffad 0px,#00ffc1 74px,#00ffd9 134px,#04ffda 136px,#24ffdf 146px,#63ffea 164px,#a3fff4 180px,#ecffff 196px,#fdfbff 200px,#fff4f9 202px,#ffcbd6 212px,#ffabbb 222px,#ff8ea2 234px,#ff738b 248px,#ff5c77 264px,#ff4766 282px,#ff3657 302px,#ff2649 325px,#ff1037 371px,#ff0028 425px,#ff001a 511px,#ff000f 623px)"></i><i style="top:109px;left:12px;width:621px;height:1px;background:linear-gradient(90deg,#00ffb0 0px,#00ffc5 74px,#00ffde 134px,#2dffe5 148px,#5fffed 162px,#97fff6 176px,#cbffff 188px,#fdf6ff 200px,#ffeff9 202px,#ffc7d6 212px,#ffa8bc 222px,#ff8ba2 234px,#ff718c 248px,#ff5a78 264px,#ff4667 282px,#ff3456 304px,#ff2449 327px,#ff1037 371px,#ff0029 423px,#ff001b 509px,#ff0010 621px)"></i><i style="top:110px;left:12px;width:620px;height:1px;background:linear-gradient(90deg,#00ffb2 0px,#00ffc8 74px,#00ffe1 134px,#2cffe9 148px,#5efff1 161px,#afffff 181px,#fff0ff 201px,#ffc8db 211px,#ffa8bf 221px,#ff8ba6 233px,#ff718f 247px,#ff5a7a 263px,#ff4669 281px,#ff3358 303px,#ff244b 327px,#ff1039 369px,#ff002b 421px,#ff001c 506px,#ff0010 620px)"></i><i style="top:111px;left:12px;width:619px;height:1px;background:linear-gradient(90deg,#00ffb4 0px,#00ffcb 74px,#00ffe5 134px,#49fff1 156px,#97ffff 176px,#fdecff 202px,#ffe5f9 204px,#ffbfd7 214px,#ffa2bd 224px,#ff82a0 238px,#ff6a8b 252px,#ff5477 268px,#ff4267 286px,#ff224b 329px,#ff0f39 371px,#ff002c 421px,#ff001c 507px,#ff0011 619px)"></i><i style="top:112px;left:13px;width:617px;height:1px;background:linear-gradient(90deg,#00ffb7 0px,#00ffce 74px,#02ffe9 134px,#3efff4 152px,#82feff 170px,#fde7ff 202px,#ffe0f9 204px,#ffbbd8 214px,#ff9ebe 224px,#ff7fa1 238px,#ff688c 252px,#ff5378 268px,#ff4068 286px,#ff214b 329px,#ff0f3a 371px,#ff002d 419px,#ff001d 505px,#ff0011 617px)"></i><i style="top:113px;left:13px;width:616px;height:1px;background:linear-gradient(90deg,#00ffba 0px,#00ffd1 74px,#01ffed 134px,#35fff6 150px,#69ffff 163px,#ffe1ff 203px,#ffbcdc 213px,#ff9fc1 223px,#ff80a4 237px,#ff688e 251px,#ff537b 267px,#ff406a 285px,#ff214d 329px,#ff0f3c 369px,#ff002e 417px,#ff001e 502px,#ff0012 616px)"></i><i style="top:114px;left:13px;width:615px;height:1px;background:linear-gradient(90deg,#00ffbc 0px,#00ffd4 74px,#01fff0 134px,#53feff 158px,#a9edff 182px,#fdddff 204px,#ffd7fa 206px,#ffb4d9 216px,#ff98bf 226px,#ff7ba3 240px,#ff648d 254px,#ff4f7a 270px,#ff3e69 288px,#ff2d59 309px,#ff1f4c 333px,#ff0d3c 373px,#ff002f 417px,#ff001f 503px,#ff0013 615px)"></i><i style="top:115px;left:14px;width:613px;height:1px;background:linear-gradient(90deg,#00ffbf 0px,#00ffd6 72px,#00fff4 132px,#04fff5 134px,#39ffff 150px,#9becff 178px,#fdd8ff 204px,#ffd2fa 206px,#ffb0d9 216px,#ff95bf 226px,#ff78a3 240px,#ff628e 254px,#ff4e7b 270px,#ff3c6a 288px,#ff1e4d 333px,#ff0d3d 371px,#ff0030 415px,#ff0020 501px,#ff0013 613px)"></i><i style="top:116px;left:14px;width:612px;height:1px;background:linear-gradient(90deg,#00ffc1 0px,#00ffda 74px,#00fff7 132px,#02fff8 134px,#2afeff 146px,#91e9ff 175px,#ffd3ff 205px,#ffb1dd 215px,#ff96c3 225px,#ff79a7 239px,#ff6291 253px,#ff4e7d 269px,#ff3c6c 287px,#ff1e4e 333px,#ff0d3e 371px,#ff0031 415px,#ff0020 500px,#ff0014 612px)"></i><i style="top:117px;left:14px;width:612px;height:1px;background:linear-gradient(90deg,#00ffc4 0px,#00ffdd 74px,#02fffc 134px,#15feff 140px,#87e7ff 173px,#fbd0ff 205px,#ffcbfb 207px,#ffaadb 217px,#ff8cbd 229px,#ff74a6 241px,#ff5f90 255px,#ff4b7d 271px,#ff396a 291px,#ff1c4e 335px,#ff0d3f 371px,#ff0032 413px,#ff0021 498px,#ff0014 612px)"></i><i style="top:118px;left:15px;width:610px;height:1px;background:linear-gradient(90deg,#00ffc6 0px,#00ffdf 70px,#00feff 132px,#60ebff 161px,#fbcbff 205px,#ffc7fb 207px,#ffa7db 217px,#ff89be 229px,#ff72a6 241px,#ff5d91 255px,#ff4a7e 271px,#ff376b 291px,#ff1b4f 335px,#ff0c40 371px,#ff0034 411px,#ff0022 496px,#ff0015 610px)"></i><i style="top:119px;left:15px;width:609px;height:1px;background:linear-gradient(90deg,#00ffc9 0px,#00ffe1 68px,#00fffe 124px,#00fbff 132px,#6ce4ff 166px,#ffc5fe 208px,#ffa5dd 218px,#ff88bf 230px,#ff71a8 242px,#ff5c92 256px,#ff497f 272px,#ff376c 292px,#ff1b50 335px,#ff0c41 369px,#ff0035 409px,#ff0023 495px,#ff0015 609px)"></i><i style="top:120px;left:15px;width:608px;height:1px;background:linear-gradient(90deg,#00ffcb 0px,#00ffe3 64px,#00fffe 118px,#00f7ff 132px,#03f6ff 134px,#56e5ff 159px,#a6d4ff 183px,#fbc3ff 207px,#ffbffb 209px,#ffa0dc 219px,#ff84bf 231px,#ff6ba4 245px,#ff5790 259px,#ff457d 275px,#ff336b 295px,#ff1950 339px,#ff0036 409px,#ff0024 494px,#ff0016 608px)"></i><i style="top:121px;left:16px;width:606px;height:1px;background:linear-gradient(90deg,#00ffce 0px,#00ffe4 60px,#00ffff 112px,#00f3ff 132px,#6bddff 165px,#fbbfff 207px,#ffbbfb 209px,#ff9ddc 219px,#ff82bf 231px,#ff69a5 245px,#ff5591 259px,#ff437e 275px,#ff326c 295px,#ff1850 339px,#ff0037 407px,#ff0025 492px,#ff0017 606px)"></i><i style="top:122px;left:16px;width:605px;height:1px;background:linear-gradient(90deg,#00ffd1 0px,#00ffe6 56px,#00ffff 106px,#00efff 132px,#77d6ff 170px,#ffb9fe 210px,#ff9cde 220px,#ff80c1 232px,#ff67a7 246px,#ff5492 260px,#ff437f 276px,#ff316d 296px,#ff1751 339px,#ff0038 405px,#ff0026 491px,#ff0017 605px)"></i><i style="top:123px;left:17px;width:603px;height:1px;background:linear-gradient(90deg,#00ffd4 0px,#00ffe7 52px,#00ffff 98px,#00ecff 130px,#02ebff 132px,#5fd8ff 162px,#ffb5fe 210px,#ff99df 220px,#ff7ec2 232px,#ff65a7 246px,#ff5293 260px,#ff4180 276px,#ff306e 296px,#ff1752 339px,#ff003a 403px,#ff0026 489px,#ff0018 603px)"></i><i style="top:124px;left:17px;width:602px;height:1px;background:linear-gradient(90deg,#00ffd6 0px,#00ffe9 48px,#00ffff 92px,#01e8ff 132px,#69d2ff 165px,#fbb3ff 209px,#ffb0fc 211px,#ff94dd 221px,#ff7ac1 233px,#ff63a7 247px,#ff5093 261px,#ff3f80 277px,#ff2f6e 297px,#ff1552 343px,#ff003b 403px,#ff0027 488px,#ff0018 602px)"></i><i style="top:125px;left:17px;width:601px;height:1px;background:linear-gradient(90deg,#00ffd9 0px,#00ffeb 46px,#00ffff 86px,#01e4ff 132px,#75ccff 170px,#ffaefe 212px,#ff93df 222px,#ff7dc7 232px,#ff68af 244px,#ff569c 256px,#ff4488 272px,#ff3678 288px,#ff1d5c 325px,#ff0e4b 359px,#ff003c 401px,#ff0028 487px,#ff0019 601px)"></i><i style="top:126px;left:18px;width:599px;height:1px;background:linear-gradient(90deg,#00ffdc 0px,#00ffff 80px,#00e2ff 130px,#1bdbff 140px,#6acbff 166px,#ffaafe 212px,#ff90e0 222px,#ff7ac8 232px,#ff66b0 244px,#ff559d 256px,#ff4389 272px,#ff3579 288px,#ff1c5d 325px,#ff0d4c 359px,#ff003d 399px,#ff0029 485px,#ff001a 599px)"></i><i style="top:127px;left:18px;width:598px;height:1px;background:linear-gradient(90deg,#00ffde 0px,#00ffff 74px,#00dfff 130px,#03ddff 132px,#5bcbff 161px,#acb9ff 187px,#fba8ff 211px,#ffa5fc 213px,#ff8bde 223px,#ff77c7 233px,#ff63b0 245px,#ff529d 257px,#ff4189 273px,#ff3379 289px,#ff1b5d 327px,#ff0c4c 361px,#ff003e 399px,#ff002a 484px,#ff001a 598px)"></i><i style="top:128px;left:18px;width:597px;height:1px;background:linear-gradient(90deg,#00ffe1 0px,#00ffff 68px,#00dbff 130px,#09d9ff 134px,#67c5ff 166px,#ffa3fe 214px,#ff8ae0 224px,#ff75c8 234px,#ff62b1 246px,#ff519e 258px,#ff408a 274px,#ff327a 290px,#ff1a5e 327px,#ff0c4e 359px,#ff0040 397px,#ff002b 483px,#ff001b 597px)"></i><i style="top:129px;left:19px;width:595px;height:1px;background:linear-gradient(90deg,#00ffe4 0px,#00ffff 60px,#00d8ff 130px,#74bfff 170px,#ffa0fe 214px,#ff87e1 224px,#ff73c9 234px,#ff60b2 246px,#ff509f 258px,#ff3f8b 274px,#ff317b 290px,#ff195f 327px,#ff0c4f 359px,#ff0041 395px,#ff002c 481px,#ff001c 595px)"></i><i style="top:130px;left:19px;width:594px;height:1px;background:linear-gradient(90deg,#00ffe7 0px,#00ffff 54px,#00d5ff 130px,#66bfff 165px,#fb9eff 213px,#ff9bfc 215px,#ff83df 225px,#ff70c8 235px,#ff5db1 247px,#ff4b9c 261px,#ff2f7b 291px,#ff185f 329px,#ff0c50 359px,#ff0042 395px,#ff002d 480px,#ff001c 594px)"></i><i style="top:131px;left:19px;width:593px;height:1px;background:linear-gradient(90deg,#00ffe9 0px,#00ffff 48px,#00d2ff 130px,#71b9ff 170px,#ff9afe 216px,#ff82e1 226px,#ff6eca 236px,#ff5cb3 248px,#ff4a9e 262px,#ff2f7c 292px,#ff1860 329px,#ff0044 393px,#ff002d 479px,#ff001d 593px)"></i><i style="top:132px;left:20px;width:591px;height:1px;background:linear-gradient(90deg,#00ffec 0px,#00ffff 42px,#01ceff 130px,#78b4ff 172px,#ff96fe 216px,#ff7fe2 226px,#ff6cca 236px,#ff5ab4 248px,#ff499e 262px,#ff2e7d 292px,#ff1761 329px,#ff0045 391px,#ff002e 477px,#ff001d 591px)"></i><i style="top:133px;left:20px;width:590px;height:1px;background:linear-gradient(90deg,#00ffef 0px,#00ffff 36px,#00ccff 130px,#70b3ff 169px,#fb95ff 215px,#ff92fc 217px,#ff7be0 227px,#ff69c9 237px,#ff57b3 249px,#ff469e 263px,#ff2c7d 293px,#ff1661 331px,#ff0046 391px,#ff002f 476px,#ff001e 590px)"></i><i style="top:134px;left:21px;width:588px;height:1px;background:linear-gradient(90deg,#00fff2 0px,#00ffff 28px,#00c9ff 128px,#02c8ff 130px,#71b0ff 169px,#fb92ff 215px,#ff8ffc 217px,#ff79e1 227px,#ff67ca 237px,#ff55b4 249px,#ff459f 263px,#ff2b7e 293px,#ff1562 331px,#ff0047 389px,#ff0030 474px,#ff001f 588px)"></i><i style="top:135px;left:21px;width:587px;height:1px;background:linear-gradient(90deg,#00fff5 0px,#00ffff 22px,#00c7ff 128px,#08c4ff 132px,#65b0ff 166px,#ff8dfe 218px,#ff77e2 228px,#ff66cc 238px,#ff54b5 250px,#ff44a0 264px,#ff2a7f 294px,#ff1563 331px,#ff0049 387px,#ff0031 473px,#ff001f 587px)"></i><i style="top:136px;left:21px;width:586px;height:1px;background:linear-gradient(90deg,#00fff8 0px,#00feff 18px,#01c3ff 130px,#6eabff 169px,#fb8cff 217px,#ff89fc 219px,#ff74e1 229px,#ff63cb 239px,#ff52b5 251px,#ff42a0 265px,#ff297f 295px,#ff1463 333px,#ff004a 387px,#ff0032 472px,#ff0020 586px)"></i><i style="top:137px;left:22px;width:584px;height:1px;background:linear-gradient(90deg,#00fffb 0px,#00ffff 10px,#00f7ff 26px,#00c1ff 128px,#64aaff 165px,#fb89ff 217px,#ff86fd 219px,#ff71e1 229px,#ff61cb 239px,#ff50b5 251px,#ff40a1 265px,#ff2880 295px,#ff1364 333px,#ff004b 385px,#ff0033 470px,#ff0021 584px)"></i><i style="top:138px;left:22px;width:583px;height:1px;background:linear-gradient(90deg,#00fffe 0px,#00e7ff 52px,#00beff 128px,#6ea5ff 170px,#ff85fe 220px,#ff70e3 230px,#ff60cd 240px,#ff42a5 264px,#ff2883 293px,#ff1366 331px,#ff004c 385px,#ff0034 469px,#ff0021 583px)"></i><i style="top:139px;left:22px;width:582px;height:1px;background:linear-gradient(90deg,#00feff 0px,#00bcff 128px,#08baff 132px,#61a6ff 165px,#fb83ff 219px,#ff80fd 221px,#ff6de2 231px,#ff5dcc 241px,#ff4db6 253px,#ff3ea2 267px,#ff2681 297px,#ff1266 333px,#ff004e 383px,#ff0035 468px,#ff0022 582px)"></i><i style="top:140px;left:23px;width:580px;height:1px;background:linear-gradient(90deg,#00faff 0px,#00b9ff 128px,#6da0ff 169px,#fb80ff 219px,#ff7efd 221px,#ff6ae2 231px,#ff5bcc 241px,#ff4bb7 253px,#ff3ca2 267px,#ff2582 297px,#ff1167 333px,#ff004f 381px,#ff0036 466px,#ff0023 580px)"></i><i style="top:141px;left:23px;width:579px;height:1px;background:linear-gradient(90deg,#00f8ff 0px,#00b6ff 128px,#789bff 174px,#ff7cff 222px,#ff69e4 232px,#ff5ace 242px,#ff4ab8 254px,#ff3ba4 268px,#ff2483 297px,#ff1168 333px,#ff0050 381px,#ff0037 465px,#ff0023 579px)"></i><i style="top:142px;left:24px;width:577px;height:1px;background:linear-gradient(90deg,#00f5ff 0px,#02b3ff 128px,#7e97ff 176px,#ff7aff 222px,#ff67e4 232px,#ff58ce 242px,#ff48b9 254px,#ff3aa4 268px,#ff2383 297px,#ff1069 333px,#ff0052 377px,#ff0040 431px,#ff0031 497px,#ff0024 577px)"></i><i style="top:143px;left:24px;width:576px;height:1px;background:linear-gradient(90deg,#00f2ff 0px,#01b1ff 128px,#7198ff 171px,#fb78ff 221px,#ff76fd 223px,#ff64e3 233px,#ff55ce 243px,#ff46b8 255px,#ff38a4 269px,#ff2184 299px,#ff0f69 335px,#ff0054 377px,#ff0040 432px,#ff0031 498px,#ff0025 576px)"></i><i style="top:144px;left:24px;width:575px;height:1px;background:linear-gradient(90deg,#00efff 0px,#01afff 128px,#7b93ff 176px,#ff75ff 224px,#ff63e5 234px,#ff54cf 244px,#ff45ba 256px,#ff37a5 270px,#ff2185 299px,#ff0e6a 335px,#ff0055 375px,#ff0041 433px,#ff0032 497px,#ff0025 575px)"></i><i style="top:145px;left:25px;width:573px;height:1px;background:linear-gradient(90deg,#00ecff 0px,#00adff 126px,#20a5ff 140px,#7293ff 172px,#ff72ff 224px,#ff61e5 234px,#ff52cf 244px,#ff44ba 256px,#ff36a6 270px,#ff2085 299px,#ff0e6a 335px,#ff0057 373px,#ff0042 431px,#ff0033 495px,#ff0026 573px)"></i><i style="top:146px;left:25px;width:572px;height:1px;background:linear-gradient(90deg,#00eaff 0px,#00abff 126px,#02aaff 128px,#7490ff 173px,#ff6efd 225px,#ff5ee4 235px,#ff4fcf 245px,#ff41ba 257px,#ff34a6 271px,#ff1e85 301px,#ff0d6b 337px,#ff0058 373px,#ff0042 432px,#ff0033 496px,#ff0027 572px)"></i><i style="top:147px;left:26px;width:570px;height:1px;background:linear-gradient(90deg,#00e7ff 0px,#00a8ff 126px,#6b8fff 169px,#ff6cfd 225px,#ff5be4 235px,#ff4ecf 245px,#ff40ba 257px,#ff33a6 271px,#ff1d86 301px,#ff0c6b 337px,#ff0059 371px,#ff0043 432px,#ff0034 494px,#ff0027 570px)"></i><i style="top:148px;left:26px;width:569px;height:1px;background:linear-gradient(90deg,#00e5ff 0px,#00a6ff 126px,#7a8aff 176px,#ff6bff 226px,#ff5ae6 236px,#ff4dd1 246px,#ff34aa 270px,#ff1e89 299px,#ff0c6e 335px,#ff005b 369px,#ff0044 431px,#ff0035 493px,#ff0028 569px)"></i><i style="top:149px;left:26px;width:568px;height:1px;background:linear-gradient(90deg,#00e2ff 0px,#00a4ff 126px,#698cff 169px,#ff67fd 227px,#ff57e4 237px,#ff4ad0 247px,#ff30a7 273px,#ff1c87 303px,#ff0b6e 337px,#ff005c 369px,#ff0045 430px,#ff0036 492px,#ff0029 568px)"></i><i style="top:150px;left:27px;width:566px;height:1px;background:linear-gradient(90deg,#00dfff 0px,#01a2ff 126px,#7487ff 173px,#ff65fd 227px,#ff56e5 237px,#ff49d0 247px,#ff2fa8 273px,#ff1b88 303px,#ff0b6e 337px,#ff005e 367px,#ff0046 430px,#ff0036 492px,#ff0029 566px)"></i><i style="top:151px;left:27px;width:565px;height:1px;background:linear-gradient(90deg,#00ddff 0px,#019fff 126px,#7d82ff 178px,#ff64ff 228px,#ff54e6 238px,#ff47d2 248px,#ff2ea9 274px,#ff1a89 303px,#ff0a6f 337px,#ff005f 367px,#ff0046 431px,#ff0037 491px,#ff002a 565px)"></i><i style="top:152px;left:28px;width:563px;height:1px;background:linear-gradient(90deg,#00daff 0px,#009eff 124px,#1a98ff 136px,#6f83ff 172px,#ff62ff 228px,#ff46d2 248px,#ff2da9 274px,#ff1989 303px,#ff0970 337px,#ff0060 365px,#ff0047 429px,#ff0038 489px,#ff002b 563px)"></i><i style="top:153px;left:28px;width:562px;height:1px;background:linear-gradient(90deg,#00d8ff 0px,#029bff 126px,#7281ff 173px,#ff5efd 229px,#ff44d1 249px,#ff2ba9 275px,#ff1889 305px,#ff0870 339px,#ff0063 363px,#ff0048 430px,#ff0038 490px,#ff002c 562px)"></i><i style="top:154px;left:28px;width:561px;height:1px;background:linear-gradient(90deg,#00d6ff 0px,#0299ff 126px,#7b7cff 178px,#ff5dff 230px,#ff43d3 250px,#ff2aaa 276px,#ff178a 305px,#ff0871 339px,#ff0063 363px,#ff0048 431px,#ff0039 491px,#ff002c 561px)"></i><i style="top:155px;left:29px;width:560px;height:1px;background:linear-gradient(90deg,#00d3ff 0px,#0098ff 124px,#5f81ff 165px,#ac6fff 197px,#fe5bff 229px,#ff59fb 231px,#ff3fd0 251px,#ff28a9 277px,#ff158a 307px,#ff0771 341px,#ff0065 361px,#ff0049 430px,#ff003a 490px,#ff002d 560px)"></i><i style="top:156px;left:29px;width:559px;height:1px;background:linear-gradient(90deg,#00d1ff 0px,#0096ff 124px,#687dff 170px,#fc5aff 230px,#ff58fc 232px,#ff3ed1 252px,#ff29ad 276px,#ff168c 305px,#ff0773 339px,#ff0067 359px,#ff004a 429px,#ff003b 489px,#ff002e 559px)"></i><i style="top:157px;left:30px;width:557px;height:1px;background:linear-gradient(90deg,#00cfff 0px,#0194ff 124px,#6e7aff 172px,#fc58ff 230px,#ff56fc 232px,#ff3dd2 252px,#ff28ad 276px,#ff158d 305px,#ff0673 339px,#ff0069 357px,#ff004b 429px,#ff003b 487px,#ff002e 557px)"></i><i style="top:158px;left:30px;width:556px;height:1px;background:linear-gradient(90deg,#00cdff 0px,#0092ff 124px,#7a75ff 177px,#fe55ff 231px,#ff53fb 233px,#ff3bd1 253px,#ff26ad 277px,#ff148d 307px,#ff0574 341px,#ff006a 357px,#ff005a 391px,#ff004b 430px,#ff003c 488px,#ff002f 556px)"></i><i style="top:159px;left:30px;width:555px;height:1px;background:linear-gradient(90deg,#00cbff 0px,#0090ff 124px,#7075ff 174px,#fc54ff 232px,#ff52fd 234px,#ff3ad2 254px,#ff25ae 278px,#ff138e 307px,#ff0574 341px,#ff006c 355px,#ff005b 389px,#ff004d 429px,#ff003d 487px,#ff0030 555px)"></i><i style="top:160px;left:31px;width:553px;height:1px;background:linear-gradient(90deg,#00c8ff 0px,#028eff 124px,#7173ff 174px,#fc52ff 232px,#ff50fd 234px,#ff38d3 254px,#ff24ae 277px,#ff128f 307px,#ff0475 341px,#ff006e 353px,#ff005c 389px,#ff004d 429px,#ff003e 485px,#ff0030 553px)"></i><i style="top:161px;left:31px;width:552px;height:1px;background:linear-gradient(90deg,#00c6ff 0px,#018cff 124px,#7c6eff 179px,#fe4fff 233px,#ff4dfb 235px,#ff36d2 255px,#ff23ae 279px,#ff118f 309px,#ff0375 343px,#ff006f 353px,#ff0060 383px,#ff004d 430px,#ff003e 486px,#ff0031 552px)"></i><i style="top:162px;left:32px;width:550px;height:1px;background:linear-gradient(90deg,#00c4ff 0px,#008bff 122px,#5e74ff 165px,#ac61ff 199px,#fe4dff 233px,#ff4bfb 235px,#ff33cf 257px,#ff20ac 281px,#ff108f 309px,#ff0376 343px,#ff0071 351px,#ff0060 383px,#ff004f 428px,#ff003f 484px,#ff0032 550px)"></i><i style="top:163px;left:32px;width:549px;height:1px;background:linear-gradient(90deg,#00c2ff 0px,#0089ff 122px,#6670ff 170px,#fc4cff 234px,#ff4afd 236px,#ff34d3 256px,#ff21b0 279px,#ff1192 307px,#ff0378 341px,#ff0073 349px,#ff0062 381px,#ff0050 427px,#ff0040 483px,#ff0033 549px)"></i><i style="top:164px;left:32px;width:548px;height:1px;background:linear-gradient(90deg,#00c0ff 0px,#0287ff 124px,#696eff 171px,#fe4aff 235px,#ff47fb 237px,#ff32d3 257px,#ff1fb0 281px,#ff1092 309px,#ff0278 343px,#ff0062 383px,#ff0050 428px,#ff0040 484px,#ff0033 548px)"></i><i style="top:165px;left:33px;width:546px;height:1px;background:linear-gradient(90deg,#00beff 0px,#0086ff 122px,#656dff 169px,#fe48ff 235px,#ff46fb 237px,#ff31d3 257px,#ff1eb0 281px,#ff0f92 309px,#ff0179 343px,#ff0063 383px,#ff0051 428px,#ff0041 482px,#ff0034 546px)"></i><i style="top:166px;left:33px;width:545px;height:1px;background:linear-gradient(90deg,#00bcff 0px,#0084ff 122px,#6e69ff 174px,#fc46ff 236px,#ff45fd 238px,#ff30d4 258px,#ff1db1 281px,#ff0e93 309px,#ff0179 343px,#ff0064 381px,#ff0052 427px,#ff0042 481px,#ff0035 545px)"></i><i style="top:167px;left:34px;width:543px;height:1px;background:linear-gradient(90deg,#00baff 0px,#0182ff 122px,#7366ff 176px,#fc45ff 236px,#ff43fd 238px,#ff2ed5 258px,#ff1cb2 281px,#ff0d94 309px,#ff007a 343px,#ff0065 381px,#ff0052 427px,#ff0043 481px,#ff0036 543px)"></i><i style="top:168px;left:34px;width:542px;height:1px;background:linear-gradient(90deg,#00b8ff 0px,#0180ff 122px,#6967ff 171px,#fe43ff 237px,#ff41fc 239px,#ff2dd4 259px,#ff1bb1 283px,#ff0c94 311px,#ff007a 345px,#ff0065 383px,#ff0053 428px,#ff0044 480px,#ff0036 542px)"></i><i style="top:169px;left:35px;width:540px;height:1px;background:linear-gradient(90deg,#00b6ff 0px,#007fff 120px,#6167ff 167px,#fe41ff 237px,#ff3ffc 239px,#ff2bd4 259px,#ff1ab2 283px,#ff0b94 311px,#ff007c 343px,#ff0067 381px,#ff0054 426px,#ff0045 478px,#ff0037 540px)"></i><i style="top:170px;left:35px;width:539px;height:1px;background:linear-gradient(90deg,#00b4ff 0px,#007eff 120px,#6964ff 172px,#fc3fff 238px,#ff3efd 240px,#ff2ad5 260px,#ff19b3 283px,#ff0b95 311px,#ff007d 343px,#ff0067 381px,#ff0055 425px,#ff0046 477px,#ff0038 539px)"></i><i style="top:171px;left:35px;width:538px;height:1px;background:linear-gradient(90deg,#00b2ff 0px,#027cff 122px,#6c61ff 173px,#fe3dff 239px,#ff3cfc 241px,#ff29d5 261px,#ff18b3 285px,#ff0a95 313px,#ff007d 345px,#ff0068 383px,#ff0056 426px,#ff0046 478px,#ff0039 538px)"></i><i style="top:172px;left:36px;width:536px;height:1px;background:linear-gradient(90deg,#00b0ff 0px,#007bff 120px,#6861ff 171px,#fe3cff 239px,#ff3afc 241px,#ff27d5 261px,#ff17b3 285px,#ff0996 313px,#ff0083 337px,#ff007d 345px,#ff0068 383px,#ff0056 426px,#ff0047 476px,#ff003a 536px)"></i><i style="top:173px;left:36px;width:535px;height:1px;background:linear-gradient(90deg,#00aeff 0px,#0079ff 120px,#705dff 176px,#ff39fd 242px,#ff27d6 262px,#ff16b4 285px,#ff0897 313px,#ff0085 335px,#ff007e 345px,#ff006a 381px,#ff0057 425px,#ff0048 475px,#ff003a 535px)"></i><i style="top:174px;left:37px;width:533px;height:1px;background:linear-gradient(90deg,#00acff 0px,#0177ff 120px,#715bff 176px,#ff37fd 242px,#ff25d6 262px,#ff15b4 285px,#ff0899 311px,#ff0087 333px,#ff0080 343px,#ff006b 379px,#ff0059 423px,#ff0049 473px,#ff003b 533px)"></i><i style="top:175px;left:37px;width:532px;height:1px;background:linear-gradient(90deg,#00abff 0px,#0076ff 120px,#6b5bff 173px,#fe37ff 241px,#ff35fc 243px,#ff24d6 263px,#ff14b4 287px,#ff0a9f 307px,#ff018a 331px,#ff0080 345px,#ff006c 381px,#ff0059 424px,#ff0049 474px,#ff003c 532px)"></i><i style="top:176px;left:38px;width:530px;height:1px;background:linear-gradient(90deg,#00a9ff 0px,#0274ff 120px,#6c5aff 173px,#fe35ff 241px,#ff34fc 243px,#ff22d6 263px,#ff13b5 287px,#ff099f 307px,#ff018c 329px,#ff0081 345px,#ff006c 381px,#ff0059 424px,#ff004a 474px,#ff003d 530px)"></i><i style="top:177px;left:38px;width:529px;height:1px;background:linear-gradient(90deg,#00a7ff 0px,#0273ff 120px,#7456ff 178px,#ff33fd 244px,#ff22d7 264px,#ff12b6 287px,#ff09a0 307px,#ff008d 329px,#ff0081 345px,#ff006d 381px,#ff005b 423px,#ff004b 473px,#ff003e 529px)"></i><i style="top:178px;left:39px;width:527px;height:1px;background:linear-gradient(90deg,#00a5ff 0px,#0072ff 118px,#7156ff 176px,#ff31fd 244px,#ff20d7 264px,#ff11b6 287px,#ff09a2 305px,#ff008f 327px,#ff0082 345px,#ff006d 381px,#ff005b 423px,#ff004c 471px,#ff003e 527px)"></i><i style="top:179px;left:39px;width:526px;height:1px;background:linear-gradient(90deg,#00a4ff 0px,#0071ff 118px,#6757ff 171px,#fe31ff 243px,#ff2ffc 245px,#ff1fd7 265px,#ff10b6 289px,#ff0091 327px,#ff0082 347px,#ff006e 383px,#ff005c 424px,#ff004c 472px,#ff003f 526px)"></i><i style="top:180px;left:39px;width:525px;height:1px;background:linear-gradient(90deg,#00a2ff 0px,#006fff 118px,#6f53ff 176px,#ff2efd 246px,#ff1ed8 265px,#ff11b9 287px,#ff0093 325px,#ff0084 345px,#ff006f 381px,#ff005e 421px,#ff004e 469px,#ff0040 525px)"></i><i style="top:181px;left:40px;width:523px;height:1px;background:linear-gradient(90deg,#00a0ff 0px,#016dff 118px,#7351ff 178px,#ff2dfd 246px,#ff1dd8 265px,#ff10b9 287px,#ff0095 323px,#ff0085 345px,#ff0070 381px,#ff005e 421px,#ff004e 469px,#ff0041 523px)"></i><i style="top:182px;left:40px;width:522px;height:1px;background:linear-gradient(90deg,#009fff 0px,#006cff 118px,#6e51ff 175px,#fe2dff 245px,#ff2bfc 247px,#ff1bd8 267px,#ff0fb9 289px,#ff0097 323px,#ff0085 347px,#ff0070 383px,#ff005e 422px,#ff004f 468px,#ff0042 522px)"></i><i style="top:183px;left:41px;width:520px;height:1px;background:linear-gradient(90deg,#009dff 0px,#026bff 118px,#6f4fff 175px,#fd2bff 245px,#ff2afc 247px,#ff1ad8 267px,#ff0eba 289px,#ff0099 321px,#ff0085 347px,#ff0071 381px,#ff0060 420px,#ff0050 466px,#ff0043 520px)"></i><i style="top:184px;left:41px;width:519px;height:1px;background:linear-gradient(90deg,#009bff 0px,#0269ff 118px,#764cff 180px,#ff29fd 248px,#ff1ad9 267px,#ff0dba 289px,#ff009c 319px,#ff0087 345px,#ff0073 379px,#ff0061 419px,#ff0051 465px,#ff0043 519px)"></i><i style="top:185px;left:42px;width:517px;height:1px;background:linear-gradient(90deg,#009aff 0px,#0069ff 116px,#734bff 178px,#ff27fd 248px,#ff18d9 267px,#ff0cbb 289px,#ff009e 317px,#ff0088 345px,#ff0073 379px,#ff0061 419px,#ff0052 465px,#ff0044 517px)"></i><i style="top:186px;left:42px;width:516px;height:1px;background:linear-gradient(90deg,#0098ff 0px,#0067ff 116px,#664dff 171px,#fd27ff 247px,#ff26fc 249px,#ff17d9 269px,#ff0bbb 291px,#ff00a0 317px,#ff0088 347px,#ff0074 381px,#ff0062 420px,#ff0045 516px)"></i><i style="top:187px;left:43px;width:514px;height:1px;background:linear-gradient(90deg,#0096ff 0px,#0066ff 116px,#6e4aff 175px,#fd26ff 247px,#ff24fc 249px,#ff16d9 269px,#ff0abb 291px,#ff00a2 315px,#ff0089 347px,#ff0074 381px,#ff0063 418px,#ff0046 514px)"></i><i style="top:188px;left:43px;width:513px;height:1px;background:linear-gradient(90deg,#0095ff 0px,#0065ff 116px,#7547ff 180px,#ff23fe 250px,#ff15da 269px,#ff09bc 291px,#ff00a5 313px,#ff008b 345px,#ff0076 379px,#ff0064 417px,#ff0055 461px,#ff0047 513px)"></i><i style="top:189px;left:44px;width:511px;height:1px;background:linear-gradient(90deg,#0093ff 0px,#0263ff 116px,#7645ff 180px,#ff22fe 250px,#ff14da 269px,#ff09bc 291px,#ff00a7 311px,#ff008b 345px,#ff0076 379px,#ff0065 417px,#ff0048 511px)"></i><i style="top:190px;left:44px;width:510px;height:1px;background:linear-gradient(90deg,#0092ff 0px,#0162ff 116px,#7146ff 177px,#fd22ff 249px,#ff20fd 251px,#ff13d9 271px,#ff07bc 293px,#ff00a9 311px,#ff008b 347px,#ff0077 381px,#ff0065 418px,#ff0048 510px)"></i><i style="top:191px;left:44px;width:509px;height:1px;background:linear-gradient(90deg,#0091ff 0px,#0161ff 116px,#7443ff 180px,#ff1ffe 252px,#ff12da 271px,#ff07bd 293px,#ff00ab 309px,#ff008c 347px,#ff0078 379px,#ff0066 417px,#ff0049 509px)"></i><i style="top:192px;left:45px;width:507px;height:1px;background:linear-gradient(90deg,#008fff 0px,#0060ff 114px,#7143ff 178px,#ff1efe 252px,#ff11db 271px,#ff06bd 293px,#ff00ae 307px,#ff008c 347px,#ff0079 379px,#ff0067 417px,#ff004a 507px)"></i><i style="top:193px;left:45px;width:507px;height:1px;background:linear-gradient(90deg,#008eff 0px,#005fff 114px,#7840ff 182px,#fe1eff 252px,#ff11dc 271px,#ff06bf 293px,#ff00af 307px,#ff008d 347px,#ff007a 379px,#ff0068 417px,#ff004b 507px)"></i><i style="top:194px;left:46px;width:505px;height:1px;background:linear-gradient(90deg,#008cff 0px,#015eff 114px,#7c3eff 184px,#fe1cff 252px,#ff10dd 271px,#ff05bf 293px,#ff00b2 305px,#ff008e 347px,#ff007a 379px,#ff0069 415px,#ff004c 505px)"></i><i style="top:195px;left:46px;width:504px;height:1px;background:linear-gradient(90deg,#008bff 0px,#005dff 114px,#7a3dff 183px,#ff1bff 253px,#ff0fdf 271px,#ff05c1 293px,#ff00b4 305px,#ff008f 347px,#ff007b 378px,#ff006a 414px,#ff004d 504px)"></i><i style="top:196px;left:47px;width:502px;height:1px;background:linear-gradient(90deg,#0089ff 0px,#015bff 114px,#7b3cff 183px,#ff1aff 253px,#ff0ddc 273px,#ff03bf 295px,#ff00a6 319px,#ff0090 347px,#ff007c 378px,#ff006b 414px,#ff004e 502px)"></i><i style="top:197px;left:47px;width:501px;height:1px;background:linear-gradient(90deg,#0088ff 0px,#015aff 114px,#7e3aff 186px,#fe19ff 253px,#ff0ddd 273px,#ff02c0 295px,#ff00a7 319px,#ff0090 347px,#ff007c 379px,#ff006b 415px,#ff004e 501px)"></i><i style="top:198px;left:48px;width:499px;height:1px;background:linear-gradient(90deg,#0086ff 0px,#0059ff 112px,#783aff 182px,#fe18ff 253px,#ff0cdd 273px,#ff01c0 295px,#ff00a7 319px,#ff0091 347px,#ff007e 377px,#ff006c 413px,#ff004f 499px)"></i><i style="top:199px;left:48px;width:498px;height:1px;background:linear-gradient(90deg,#0085ff 0px,#0058ff 112px,#733bff 179px,#ff16ff 255px,#ff0ce0 273px,#ff01c2 295px,#ff00a9 319px,#ff0092 347px,#ff007f 376px,#ff006e 412px,#ff0050 498px)"></i><i style="top:200px;left:49px;width:496px;height:1px;background:linear-gradient(90deg,#0084ff 0px,#0057ff 112px,#7a37ff 183px,#ff15ff 255px,#ff0be0 273px,#ff00c3 295px,#ff00aa 319px,#ff0093 347px,#ff0080 376px,#ff006e 412px,#ff0051 496px)"></i><i style="top:201px;left:49px;width:495px;height:1px;background:linear-gradient(90deg,#0082ff 0px,#0056ff 112px,#7d36ff 186px,#fe14ff 255px,#ff09de 275px,#ff00c1 297px,#ff00a8 321px,#ff0093 347px,#ff0080 377px,#ff006e 413px,#ff0052 495px)"></i><i style="top:202px;left:50px;width:493px;height:1px;background:linear-gradient(90deg,#0081ff 0px,#0255ff 112px,#7e34ff 186px,#fe13ff 255px,#ff08de 275px,#ff00c1 297px,#ff00a9 321px,#ff0094 347px,#ff0081 377px,#ff0070 411px,#ff0053 493px)"></i><i style="top:203px;left:50px;width:492px;height:1px;background:linear-gradient(90deg,#0080ff 0px,#0154ff 112px,#7d34ff 185px,#ff12ff 257px,#ff08e1 275px,#ff00c3 297px,#ff00ab 321px,#ff0095 347px,#ff0082 376px,#ff0071 410px,#ff0054 492px)"></i><i style="top:204px;left:51px;width:490px;height:1px;background:linear-gradient(90deg,#007eff 0px,#0053ff 110px,#7634ff 181px,#ff11ff 257px,#ff07e1 275px,#ff00c4 297px,#ff00ab 321px,#ff0096 347px,#ff0083 376px,#ff0071 410px,#ff0055 490px)"></i><i style="top:205px;left:51px;width:489px;height:1px;background:linear-gradient(90deg,#007dff 0px,#0052ff 110px,#7633ff 182px,#fe10ff 257px,#ff01d1 287px,#ff00c5 297px,#ff00ac 321px,#ff0096 347px,#ff0083 377px,#ff0073 409px,#ff0056 489px)"></i><i style="top:206px;left:52px;width:487px;height:1px;background:linear-gradient(90deg,#007cff 0px,#0151ff 110px,#7e30ff 186px,#fe0fff 257px,#ff01d4 285px,#ff00c5 297px,#ff00ac 321px,#ff0097 347px,#ff0084 377px,#ff0073 409px,#ff0057 487px)"></i><i style="top:207px;left:52px;width:486px;height:1px;background:linear-gradient(90deg,#007bff 0px,#0050ff 110px,#7c30ff 185px,#ff0dff 259px,#ff01d6 285px,#ff00c7 297px,#ff00ae 321px,#ff0098 347px,#ff0085 376px,#ff0074 408px,#ff0058 486px)"></i><i style="top:208px;left:53px;width:484px;height:1px;background:linear-gradient(90deg,#0079ff 0px,#014fff 110px,#7d2fff 185px,#ff0cff 259px,#ff01d9 283px,#ff00c7 297px,#ff00ae 321px,#ff0099 347px,#ff0085 376px,#ff0075 408px,#ff0059 484px)"></i><i style="top:209px;left:53px;width:483px;height:1px;background:linear-gradient(90deg,#0078ff 0px,#014eff 110px,#7c2eff 186px,#fe0cff 259px,#ff00da 283px,#ff00c6 299px,#ff00af 321px,#ff0099 347px,#ff0076 407px,#ff005a 483px)"></i><i style="top:210px;left:54px;width:481px;height:1px;background:linear-gradient(90deg,#0077ff 0px,#004dff 108px,#7a2dff 184px,#fe0bff 259px,#ff00dd 281px,#ff00c6 299px,#ff00af 321px,#ff009a 347px,#ff0077 407px,#ff005b 481px)"></i><i style="top:211px;left:54px;width:480px;height:1px;background:linear-gradient(90deg,#0076ff 0px,#004dff 108px,#752eff 181px,#ff09ff 261px,#ff00df 281px,#ff00c8 299px,#ff00b1 321px,#ff009b 347px,#ff0078 406px,#ff005c 480px)"></i><i style="top:212px;left:55px;width:478px;height:1px;background:linear-gradient(90deg,#0074ff 0px,#004bff 108px,#7c2bff 185px,#ff08ff 261px,#ff00e2 279px,#ff00c8 299px,#ff00b1 321px,#ff009c 347px,#ff0079 404px,#ff005d 478px)"></i><i style="top:213px;left:55px;width:477px;height:1px;background:linear-gradient(90deg,#0073ff 0px,#004aff 108px,#7c2aff 186px,#fe08ff 261px,#ff00e6 277px,#ff00c7 301px,#ff00b0 323px,#ff009c 347px,#ff007a 405px,#ff005e 477px)"></i><i style="top:214px;left:56px;width:475px;height:1px;background:linear-gradient(90deg,#0072ff 0px,#0249ff 108px,#7c29ff 186px,#fe07ff 261px,#ff00e9 275px,#ff00c9 299px,#ff00b2 321px,#ff009e 345px,#ff007b 403px,#ff005f 475px)"></i><i style="top:215px;left:56px;width:474px;height:1px;background:linear-gradient(90deg,#0071ff 0px,#0148ff 108px,#7e27ff 187px,#ff05ff 263px,#ff00eb 275px,#ff00c9 301px,#ff00b2 323px,#ff009e 347px,#ff007b 404px,#ff0060 474px)"></i><i style="top:216px;left:57px;width:472px;height:1px;background:linear-gradient(90deg,#006fff 0px,#0048ff 106px,#7828ff 183px,#ff04ff 263px,#ff00ef 273px,#ff00c9 301px,#ff00b3 323px,#ff009f 347px,#ff007d 402px,#ff0061 472px)"></i><i style="top:217px;left:57px;width:471px;height:1px;background:linear-gradient(90deg,#006eff 0px,#0047ff 106px,#7827ff 184px,#fe04ff 263px,#ff00f3 271px,#ff00ca 301px,#ff00b3 323px,#ff009f 347px,#ff007d 403px,#ff0062 471px)"></i><i style="top:218px;left:58px;width:469px;height:1px;background:linear-gradient(90deg,#006dff 0px,#0146ff 106px,#7c25ff 186px,#fe03ff 263px,#ff00e1 283px,#ff00ca 301px,#ff00b5 321px,#ff00a1 345px,#ff007e 401px,#ff0063 469px)"></i><i style="top:219px;left:58px;width:468px;height:1px;background:linear-gradient(90deg,#006cff 0px,#0045ff 106px,#7d24ff 187px,#ff02ff 265px,#ff00e3 283px,#ff00ca 303px,#ff00b5 323px,#ff00a1 347px,#ff0080 400px,#ff0064 468px)"></i><i style="top:220px;left:59px;width:466px;height:1px;background:linear-gradient(90deg,#006bff 0px,#0144ff 106px,#7e23ff 187px,#ff01ff 265px,#ff00e3 283px,#ff00cd 301px,#ff00b8 321px,#ff00a3 345px,#ff0081 398px,#ff0065 466px)"></i><i style="top:221px;left:59px;width:465px;height:1px;background:linear-gradient(90deg,#006aff 0px,#0143ff 106px,#7e22ff 188px,#fe00ff 265px,#ff00e1 285px,#ff00cb 303px,#ff00a4 345px,#ff0082 399px,#ff0066 465px)"></i><i style="top:222px;left:60px;width:463px;height:1px;background:linear-gradient(90deg,#0069ff 0px,#0043ff 104px,#7b22ff 186px,#fe00ff 265px,#ff00e1 285px,#ff00cb 303px,#ff00a4 345px,#ff0082 399px,#ff0067 463px)"></i><i style="top:223px;left:60px;width:462px;height:1px;background:linear-gradient(90deg,#0068ff 0px,#0042ff 104px,#7622ff 183px,#ff00ff 267px,#ff00e4 285px,#ff00cd 303px,#ff00b8 323px,#ff00a4 346px,#ff0083 398px,#ff0068 462px)"></i><i style="top:224px;left:61px;width:460px;height:1px;background:linear-gradient(90deg,#0067ff 0px,#0041ff 104px,#7d20ff 187px,#f101ff 259px,#ff00ff 267px,#ff00e4 285px,#ff00cd 303px,#ff00a6 345px,#ff0085 396px,#ff0069 460px)"></i><i style="top:225px;left:62px;width:458px;height:1px;background:linear-gradient(90deg,#0065ff 0px,#0140ff 104px,#7e1fff 187px,#ee01ff 257px,#ff00ff 267px,#ff00e4 285px,#ff00ce 303px,#ff00a6 344px,#ff0085 396px,#ff006a 458px)"></i><i style="top:226px;left:62px;width:457px;height:1px;background:linear-gradient(90deg,#0064ff 0px,#023fff 104px,#7e1eff 188px,#ed00ff 257px,#fe00ff 267px,#ff00ce 303px,#ff00a7 345px,#ff0087 395px,#ff006b 457px)"></i><i style="top:227px;left:63px;width:455px;height:1px;background:linear-gradient(90deg,#0063ff 0px,#003fff 102px,#7b1eff 186px,#ea00ff 255px,#fe00ff 267px,#ff00ce 303px,#ff00a7 345px,#ff0087 395px,#ff006c 455px)"></i><i style="top:228px;left:63px;width:454px;height:1px;background:linear-gradient(90deg,#0062ff 0px,#003eff 102px,#7a1dff 185px,#e800ff 255px,#ff00ff 269px,#ff00d1 303px,#ff00a9 344px,#ff0088 394px,#ff006d 454px)"></i><i style="top:229px;left:64px;width:452px;height:1px;background:linear-gradient(90deg,#0061ff 0px,#013dff 102px,#711fff 179px,#e400ff 253px,#ff00ff 269px,#ff00e5 287px,#ff00cf 305px,#ff00a9 344px,#ff0089 394px,#ff006e 452px)"></i><i style="top:230px;left:64px;width:451px;height:1px;background:linear-gradient(90deg,#0060ff 0px,#013cff 102px,#6e1fff 178px,#e100ff 251px,#fe00ff 269px,#ff00cf 305px,#ff00aa 345px,#ff008a 393px,#ff0070 451px)"></i><i style="top:231px;left:65px;width:450px;height:1px;background:linear-gradient(90deg,#005fff 0px,#013bff 102px,#6e1eff 177px,#dd00ff 249px,#ff00fe 271px,#ff00e6 287px,#ff00d0 305px,#ff00ab 344px,#ff008b 392px,#ff0070 450px)"></i><i style="top:232px;left:65px;width:449px;height:1px;background:linear-gradient(90deg,#005eff 0px,#023aff 102px,#6b1eff 176px,#d901ff 247px,#ff00ff 271px,#ff00e7 287px,#ff00d1 305px,#ff00ab 345px,#ff008b 393px,#ff0071 449px)"></i><i style="top:233px;left:66px;width:447px;height:1px;background:linear-gradient(90deg,#005dff 0px,#003aff 100px,#691eff 174px,#d601ff 245px,#ff00ff 271px,#ff00d3 303px,#ff00ad 343px,#ff008d 391px,#ff0073 447px)"></i><i style="top:234px;left:66px;width:446px;height:1px;background:linear-gradient(90deg,#005cff 0px,#0039ff 100px,#641eff 171px,#d400ff 245px,#ff00fe 273px,#ff00d3 305px,#ff00ad 344px,#ff008e 390px,#ff0074 446px)"></i><i style="top:235px;left:67px;width:444px;height:1px;background:linear-gradient(90deg,#005bff 0px,#0138ff 100px,#681dff 173px,#d100ff 243px,#ff00fe 273px,#ff00d3 305px,#ff00ad 344px,#ff008f 390px,#ff0075 444px)"></i><i style="top:236px;left:68px;width:442px;height:1px;background:linear-gradient(90deg,#005aff 0px,#0237ff 100px,#661cff 171px,#ce00ff 241px,#ff00fe 273px,#ff00d3 305px,#ff00af 342px,#ff0090 388px,#ff0076 442px)"></i><i style="top:237px;left:68px;width:441px;height:1px;background:linear-gradient(90deg,#0059ff 0px,#0237ff 100px,#661cff 172px,#ca01ff 239px,#ff00ff 273px,#ff00d4 305px,#ff00b0 343px,#ff0092 387px,#ff0077 441px)"></i><i style="top:238px;left:69px;width:439px;height:1px;background:linear-gradient(90deg,#0058ff 0px,#0036ff 98px,#631cff 170px,#c801ff 237px,#ff00ff 273px,#ff00d4 305px,#ff00b0 343px,#ff0092 387px,#ff0078 439px)"></i><i style="top:239px;left:69px;width:438px;height:1px;background:linear-gradient(90deg,#0057ff 0px,#0036ff 98px,#5f1cff 167px,#c600ff 237px,#ff00fe 275px,#ff00d4 307px,#ff00b2 342px,#ff0093 386px,#ff0079 438px)"></i><i style="top:240px;left:70px;width:436px;height:1px;background:linear-gradient(90deg,#0056ff 0px,#0135ff 98px,#601bff 167px,#c300ff 235px,#ff00fe 275px,#ff00d4 307px,#ff00b2 342px,#ff0094 386px,#ff007b 436px)"></i><i style="top:241px;left:70px;width:435px;height:1px;background:linear-gradient(90deg,#0056ff 0px,#0134ff 98px,#601aff 168px,#bf01ff 233px,#ff00ff 275px,#ff00d5 307px,#ff00b2 343px,#ff0095 385px,#ff007c 435px)"></i><i style="top:242px;left:71px;width:433px;height:1px;background:linear-gradient(90deg,#0054ff 0px,#0034ff 96px,#581cff 162px,#bd01ff 231px,#ff00ff 275px,#ff00d7 305px,#ff00b4 341px,#ff0097 383px,#ff007d 433px)"></i><i style="top:243px;left:71px;width:432px;height:1px;background:linear-gradient(90deg,#0054ff 0px,#0133ff 98px,#5d1aff 165px,#bb00ff 231px,#ff00fe 277px,#ff00d7 307px,#ff00b4 342px,#ff0097 384px,#ff007e 432px)"></i><i style="top:244px;left:72px;width:430px;height:1px;background:linear-gradient(90deg,#0053ff 0px,#0032ff 96px,#5b1aff 163px,#b800ff 229px,#ff00fe 277px,#ff00d7 307px,#ff00b5 342px,#ff0098 382px,#ff007f 430px)"></i><i style="top:245px;left:73px;width:428px;height:1px;background:linear-gradient(90deg,#0052ff 0px,#0131ff 96px,#591aff 161px,#b500ff 227px,#ff00fe 277px,#ff00d7 307px,#ff00b7 340px,#ff009a 380px,#ff0081 428px)"></i><i style="top:246px;left:73px;width:427px;height:1px;background:linear-gradient(90deg,#0051ff 0px,#0131ff 96px,#5819ff 162px,#b500ff 227px,#ff00ff 277px,#ff00d8 307px,#ff00b7 341px,#ff009a 381px,#ff0082 427px)"></i><i style="top:247px;left:74px;width:425px;height:1px;background:linear-gradient(90deg,#0050ff 0px,#0030ff 94px,#541aff 158px,#b300ff 225px,#ff00ff 277px,#ff00d8 307px,#ff00b7 341px,#ff009c 379px,#ff0083 425px)"></i><i style="top:248px;left:74px;width:424px;height:1px;background:linear-gradient(90deg,#004fff 0px,#022fff 96px,#5518ff 159px,#ae00ff 223px,#ff00fe 279px,#ff00da 307px,#ff00b9 340px,#ff009d 378px,#ff0084 424px)"></i><i style="top:249px;left:75px;width:422px;height:1px;background:linear-gradient(90deg,#004eff 0px,#002fff 94px,#5318ff 157px,#ab00ff 221px,#ff00fe 279px,#ff00da 307px,#ff00b9 340px,#ff009e 378px,#ff0086 422px)"></i><i style="top:250px;left:75px;width:421px;height:1px;background:linear-gradient(90deg,#004dff 0px,#002eff 94px,#5318ff 158px,#ab00ff 221px,#ff00ff 279px,#ff00db 307px,#ff00ba 341px,#ff009e 379px,#ff0087 421px)"></i><i style="top:251px;left:76px;width:419px;height:1px;background:linear-gradient(90deg,#004cff 0px,#012dff 94px,#5417ff 158px,#a900ff 219px,#ff00ff 279px,#ff00db 307px,#ff00bc 339px,#ff00a0 377px,#ff0088 419px)"></i><i style="top:252px;left:77px;width:417px;height:1px;background:linear-gradient(90deg,#004bff 0px,#002dff 92px,#4f18ff 154px,#a600ff 217px,#ff00ff 279px,#ff00db 307px,#ff00bc 339px,#ff00a1 375px,#ff008a 417px)"></i><i style="top:253px;left:77px;width:416px;height:1px;background:linear-gradient(90deg,#004bff 0px,#002dff 92px,#4919ff 149px,#a200ff 215px,#ff00fe 281px,#ff00db 309px,#ff00be 338px,#ff00a3 374px,#ff008b 416px)"></i><i style="top:254px;left:78px;width:414px;height:1px;background:linear-gradient(90deg,#004aff 0px,#002cff 92px,#4f16ff 153px,#9f00ff 213px,#ff00fe 281px,#ff00db 309px,#ff00be 338px,#ff00a3 374px,#ff008c 414px)"></i><i style="top:255px;left:78px;width:413px;height:1px;background:linear-gradient(90deg,#0049ff 0px,#012bff 92px,#4f16ff 154px,#9f00ff 213px,#ff00ff 281px,#ff00db 309px,#ff00be 339px,#ff00a5 373px,#ff008d 413px)"></i><i style="top:256px;left:79px;width:411px;height:1px;background:linear-gradient(90deg,#0048ff 0px,#022aff 92px,#4d16ff 152px,#9d00ff 211px,#ff00ff 281px,#ff00de 307px,#ff00c0 337px,#ff00a6 371px,#ff008f 411px)"></i><i style="top:257px;left:79px;width:410px;height:1px;background:linear-gradient(90deg,#0048ff 0px,#012aff 92px,#9800ff 209px,#ff00ff 283px,#ff00de 308px,#ff00c0 338px,#ff00a6 372px,#ff0090 410px)"></i><i style="top:258px;left:80px;width:408px;height:1px;background:linear-gradient(90deg,#0047ff 0px,#002aff 90px,#4517ff 145px,#9600ff 207px,#ff00ff 283px,#ff00de 308px,#ff00c0 338px,#ff00a8 370px,#ff0091 408px)"></i><i style="top:259px;left:81px;width:406px;height:1px;background:linear-gradient(90deg,#0046ff 0px,#0129ff 90px,#9400ff 205px,#ff00ff 283px,#ff00de 308px,#ff00c2 336px,#ff00aa 368px,#ff0093 406px)"></i><i style="top:260px;left:81px;width:405px;height:1px;background:linear-gradient(90deg,#0045ff 0px,#0128ff 90px,#9400ff 205px,#ff00ff 283px,#ff00de 309px,#ff00c3 337px,#ff00aa 369px,#ff0094 405px)"></i><i style="top:261px;left:82px;width:403px;height:1px;background:linear-gradient(90deg,#0044ff 0px,#0227ff 90px,#9100ff 203px,#ff00ff 283px,#ff00e1 307px,#ff00c5 335px,#ff00ac 367px,#ff0096 403px)"></i><i style="top:262px;left:82px;width:402px;height:1px;background:linear-gradient(90deg,#0043ff 0px,#0127ff 90px,#9000ff 203px,#ff00ff 285px,#ff00e1 308px,#ff00c5 336px,#ff00ac 368px,#ff0097 402px)"></i><i style="top:263px;left:83px;width:400px;height:1px;background:linear-gradient(90deg,#0043ff 0px,#0027ff 88px,#8e00ff 201px,#ff00ff 285px,#ff00e1 308px,#ff00c5 336px,#ff00ae 366px,#ff0098 400px)"></i><i style="top:264px;left:84px;width:398px;height:1px;background:linear-gradient(90deg,#0042ff 0px,#0126ff 88px,#8c00ff 199px,#ff00ff 285px,#ff00e1 308px,#ff00c7 334px,#ff00af 364px,#ff009a 398px)"></i><i style="top:265px;left:84px;width:397px;height:1px;background:linear-gradient(90deg,#0041ff 0px,#0125ff 88px,#8900ff 198px,#ff00ff 285px,#ff00e1 309px,#ff00c7 335px,#ff00b0 365px,#ff009b 397px)"></i><i style="top:266px;left:85px;width:395px;height:1px;background:linear-gradient(90deg,#0040ff 0px,#0025ff 86px,#8700ff 196px,#ff00ff 285px,#ff00e1 309px,#ff00c8 335px,#ff00b1 363px,#ff009d 395px)"></i><i style="top:267px;left:85px;width:394px;height:1px;background:linear-gradient(90deg,#0040ff 0px,#0124ff 88px,#8500ff 195px,#ff00ff 287px,#ff00e3 308px,#ff00c9 334px,#ff00b3 362px,#ff009e 394px)"></i><i style="top:268px;left:86px;width:392px;height:1px;background:linear-gradient(90deg,#003fff 0px,#0024ff 86px,#8300ff 193px,#ff00ff 287px,#ff00e4 308px,#ff00ca 334px,#ff00b3 362px,#ff009f 392px)"></i><i style="top:269px;left:86px;width:392px;height:1px;background:linear-gradient(90deg,#003eff 0px,#0023ff 86px,#8000ff 191px,#fe00ff 287px,#ff00e0 312px,#ff00cb 334px,#ff00b4 362px,#ff00a0 392px)"></i><i style="top:270px;left:87px;width:390px;height:1px;background:linear-gradient(90deg,#003dff 0px,#0123ff 86px,#7e00ff 189px,#fe00ff 287px,#ff00e1 312px,#ff00cb 334px,#ff00b6 360px,#ff00a2 390px)"></i><i style="top:271px;left:88px;width:388px;height:1px;background:linear-gradient(90deg,#003cff 0px,#0023ff 84px,#7c00ff 187px,#fe00ff 287px,#ff00e1 312px,#ff00cb 334px,#ff00a3 388px)"></i><i style="top:272px;left:88px;width:387px;height:1px;background:linear-gradient(90deg,#003cff 0px,#0022ff 84px,#7900ff 186px,#fd00ff 287px,#ff00e1 313px,#ff00cb 335px,#ff00a5 387px)"></i><i style="top:273px;left:89px;width:385px;height:1px;background:linear-gradient(90deg,#003bff 0px,#0121ff 84px,#7700ff 184px,#fd00ff 287px,#ff00cd 333px,#ff00a6 385px)"></i><i style="top:274px;left:89px;width:384px;height:1px;background:linear-gradient(90deg,#003aff 0px,#0021ff 84px,#7600ff 183px,#fe00ff 288px,#ff00cd 334px,#ff00a8 384px)"></i><i style="top:275px;left:90px;width:382px;height:1px;background:linear-gradient(90deg,#003aff 0px,#0120ff 84px,#7400ff 181px,#fe00ff 288px,#ff00cf 332px,#ff00a9 382px)"></i><i style="top:276px;left:91px;width:380px;height:1px;background:linear-gradient(90deg,#0039ff 0px,#0020ff 82px,#7200ff 179px,#fe00ff 288px,#ff00d0 332px,#ff00ab 380px)"></i><i style="top:277px;left:91px;width:379px;height:1px;background:linear-gradient(90deg,#0038ff 0px,#001fff 82px,#7200ff 180px,#fd00ff 289px,#ff00d0 333px,#ff00ac 379px)"></i><i style="top:278px;left:92px;width:377px;height:1px;background:linear-gradient(90deg,#0037ff 0px,#011fff 82px,#7000ff 178px,#fd00ff 289px,#ff00d2 331px,#ff00ae 377px)"></i><i style="top:279px;left:92px;width:376px;height:1px;background:linear-gradient(90deg,#0037ff 0px,#001eff 82px,#6d00ff 175px,#fe00ff 290px,#ff00d2 332px,#ff00af 376px)"></i><i style="top:280px;left:93px;width:374px;height:1px;background:linear-gradient(90deg,#0036ff 0px,#011eff 82px,#6b00ff 173px,#fe00ff 290px,#ff00d4 330px,#ff00b1 374px)"></i><i style="top:281px;left:94px;width:372px;height:1px;background:linear-gradient(90deg,#0035ff 0px,#001dff 80px,#6900ff 171px,#fe00ff 290px,#ff00d4 330px,#ff00b3 372px)"></i><i style="top:282px;left:94px;width:371px;height:1px;background:linear-gradient(90deg,#0035ff 0px,#001dff 80px,#6900ff 172px,#fd00ff 291px,#ff00d4 331px,#ff00b4 371px)"></i><i style="top:283px;left:95px;width:369px;height:1px;background:linear-gradient(90deg,#0034ff 0px,#011cff 80px,#6700ff 170px,#fd00ff 291px,#ff00d6 329px,#ff00b6 369px)"></i><i style="top:284px;left:95px;width:368px;height:1px;background:linear-gradient(90deg,#0033ff 0px,#011cff 80px,#6400ff 167px,#fe00ff 292px,#ff00d6 330px,#ff00b7 368px)"></i><i style="top:285px;left:96px;width:366px;height:1px;background:linear-gradient(90deg,#0033ff 0px,#011bff 80px,#6200ff 165px,#fe00ff 292px,#ff00d8 328px,#ff00b9 366px)"></i><i style="top:286px;left:97px;width:364px;height:1px;background:linear-gradient(90deg,#0032ff 0px,#001bff 78px,#6000ff 163px,#fe00ff 292px,#ff00d9 328px,#ff00bb 364px)"></i><i style="top:287px;left:97px;width:363px;height:1px;background:linear-gradient(90deg,#0031ff 0px,#001aff 78px,#6000ff 164px,#fd00ff 293px,#ff00d9 329px,#ff00bc 363px)"></i><i style="top:288px;left:98px;width:361px;height:1px;background:linear-gradient(90deg,#0031ff 0px,#011aff 78px,#5e00ff 162px,#ac00ff 227px,#fd00ff 293px,#ff00db 327px,#ff00be 361px)"></i><i style="top:289px;left:99px;width:359px;height:1px;background:linear-gradient(90deg,#0030ff 0px,#001aff 76px,#5d00ff 160px,#ac00ff 227px,#fd00ff 293px,#ff00db 327px,#ff00c0 359px)"></i><i style="top:290px;left:99px;width:358px;height:1px;background:linear-gradient(90deg,#002fff 0px,#0019ff 76px,#5900ff 157px,#aa00ff 227px,#fe00ff 294px,#ff00dd 326px,#ff00c2 358px)"></i><i style="top:291px;left:100px;width:356px;height:1px;background:linear-gradient(90deg,#002fff 0px,#0019ff 76px,#5800ff 155px,#a800ff 225px,#fe00ff 294px,#ff00dd 326px,#ff00c3 356px)"></i><i style="top:292px;left:100px;width:355px;height:1px;background:linear-gradient(90deg,#002eff 0px,#0018ff 76px,#5800ff 156px,#a800ff 225px,#fd00ff 295px,#ff00dd 327px,#ff00c5 355px)"></i><i style="top:293px;left:101px;width:353px;height:1px;background:linear-gradient(90deg,#002dff 0px,#0117ff 76px,#5600ff 154px,#a900ff 225px,#fd00ff 295px,#ff00dd 327px,#ff00c7 353px)"></i><i style="top:294px;left:102px;width:351px;height:1px;background:linear-gradient(90deg,#002dff 0px,#0017ff 74px,#5400ff 152px,#a700ff 223px,#fd00ff 295px,#ff00e0 325px,#ff00c9 351px)"></i><i style="top:295px;left:102px;width:350px;height:1px;background:linear-gradient(90deg,#002cff 0px,#0017ff 74px,#5100ff 149px,#a700ff 225px,#fd00ff 296px,#ff00e0 326px,#ff00ca 350px)"></i><i style="top:296px;left:103px;width:348px;height:1px;background:linear-gradient(90deg,#002bff 0px,#0116ff 74px,#5200ff 149px,#a800ff 225px,#fd00ff 296px,#ff00cc 348px)"></i><i style="top:297px;left:103px;width:347px;height:1px;background:linear-gradient(90deg,#002bff 0px,#0116ff 74px,#5000ff 148px,#a500ff 223px,#fd00ff 297px,#ff00ce 347px)"></i><i style="top:298px;left:104px;width:345px;height:1px;background:linear-gradient(90deg,#002aff 0px,#0016ff 72px,#4e00ff 146px,#a500ff 223px,#fd00ff 297px,#ff00d0 345px)"></i><i style="top:299px;left:105px;width:343px;height:1px;background:linear-gradient(90deg,#002aff 0px,#0015ff 72px,#4c00ff 144px,#a300ff 221px,#fd00ff 297px,#ff00d2 343px)"></i><i style="top:300px;left:105px;width:342px;height:1px;background:linear-gradient(90deg,#0029ff 0px,#0015ff 72px,#4b00ff 143px,#a400ff 223px,#fd00ff 298px,#ff00d3 342px)"></i><i style="top:301px;left:106px;width:340px;height:1px;background:linear-gradient(90deg,#0028ff 0px,#0114ff 72px,#4a00ff 141px,#a200ff 221px,#fd00ff 298px,#ff00d5 340px)"></i><i style="top:302px;left:107px;width:338px;height:1px;background:linear-gradient(90deg,#0028ff 0px,#0014ff 70px,#4800ff 139px,#a300ff 221px,#fd00ff 298px,#ff00d7 338px)"></i><i style="top:303px;left:107px;width:337px;height:1px;background:linear-gradient(90deg,#0027ff 0px,#0014ff 70px,#4600ff 138px,#a000ff 219px,#fd00ff 299px,#ff00d9 337px)"></i><i style="top:304px;left:108px;width:335px;height:1px;background:linear-gradient(90deg,#0027ff 0px,#0013ff 70px,#4500ff 136px,#a000ff 219px,#fd00ff 299px,#ff00db 335px)"></i><i style="top:305px;left:109px;width:333px;height:1px;background:linear-gradient(90deg,#0026ff 0px,#0112ff 70px,#4300ff 134px,#9f00ff 217px,#fd00ff 299px,#ff00dd 333px)"></i><i style="top:306px;left:109px;width:332px;height:1px;background:linear-gradient(90deg,#0025ff 0px,#0112ff 70px,#4200ff 133px,#9f00ff 219px,#fd00ff 300px,#ff00df 332px)"></i><i style="top:307px;left:110px;width:331px;height:1px;background:linear-gradient(90deg,#0025ff 0px,#0012ff 68px,#3f00ff 130px,#9e00ff 217px,#fe00ff 301px,#ff00e0 331px)"></i><i style="top:308px;left:110px;width:330px;height:1px;background:linear-gradient(90deg,#0024ff 0px,#0012ff 68px,#3f00ff 129px,#9d00ff 217px,#fe00ff 302px,#ff00e2 330px)"></i><i style="top:309px;left:111px;width:328px;height:1px;background:linear-gradient(90deg,#0024ff 0px,#0011ff 68px,#3d00ff 127px,#9d00ff 217px,#fe00ff 302px,#ff00e4 328px)"></i><i style="top:310px;left:112px;width:326px;height:1px;background:linear-gradient(90deg,#0023ff 0px,#0110ff 68px,#3c00ff 125px,#9b00ff 215px,#fe00ff 302px,#ff00e6 326px)"></i><i style="top:311px;left:112px;width:325px;height:1px;background:linear-gradient(90deg,#0023ff 0px,#0110ff 68px,#3a00ff 124px,#9b00ff 215px,#fe00ff 303px,#ff00e8 325px)"></i><i style="top:312px;left:113px;width:323px;height:1px;background:linear-gradient(90deg,#0022ff 0px,#0010ff 66px,#3a00ff 124px,#9b00ff 215px,#fe00ff 303px,#ff00ea 323px)"></i><i style="top:313px;left:114px;width:321px;height:1px;background:linear-gradient(90deg,#0021ff 0px,#010fff 66px,#3900ff 122px,#9a00ff 213px,#fe00ff 303px,#ff00ec 321px)"></i><i style="top:314px;left:114px;width:320px;height:1px;background:linear-gradient(90deg,#0021ff 0px,#010fff 66px,#3600ff 119px,#9800ff 213px,#fe00ff 304px,#ff00ee 320px)"></i><i style="top:315px;left:115px;width:318px;height:1px;background:linear-gradient(90deg,#0020ff 0px,#010fff 66px,#3500ff 117px,#9800ff 213px,#fe00ff 304px,#ff00f0 318px)"></i><i style="top:316px;left:116px;width:316px;height:1px;background:linear-gradient(90deg,#0020ff 0px,#000eff 64px,#3300ff 115px,#9700ff 211px,#fe00ff 304px,#ff00f3 316px)"></i><i style="top:317px;left:116px;width:315px;height:1px;background:linear-gradient(90deg,#001fff 0px,#000eff 64px,#3300ff 116px,#9700ff 211px,#fe00ff 305px,#ff00f5 315px)"></i><i style="top:318px;left:117px;width:313px;height:1px;background:linear-gradient(90deg,#001fff 0px,#010dff 64px,#3200ff 114px,#9700ff 211px,#fe00ff 305px,#ff00f7 313px)"></i><i style="top:319px;left:118px;width:311px;height:1px;background:linear-gradient(90deg,#001eff 0px,#000dff 62px,#3100ff 112px,#9500ff 209px,#fe00ff 305px,#ff00f9 311px)"></i><i style="top:320px;left:118px;width:310px;height:1px;background:linear-gradient(90deg,#001eff 0px,#020dff 64px,#2e00ff 109px,#9400ff 209px,#fe00ff 306px,#ff00fb 310px)"></i><i style="top:321px;left:119px;width:308px;height:1px;background:linear-gradient(90deg,#001dff 0px,#000dff 62px,#2d00ff 107px,#8a00ff 199px,#ff00fe 308px)"></i><i style="top:322px;left:120px;width:306px;height:1px;background:linear-gradient(90deg,#001cff 0px,#010cff 62px,#2c00ff 105px,#9200ff 207px,#fe00ff 306px)"></i><i style="top:323px;left:120px;width:305px;height:1px;background:linear-gradient(90deg,#001cff 0px,#010cff 62px,#2c00ff 106px,#9200ff 207px,#fc00ff 305px)"></i><i style="top:324px;left:121px;width:303px;height:1px;background:linear-gradient(90deg,#001bff 0px,#000cff 60px,#2a00ff 104px,#9100ff 205px,#fa00ff 303px)"></i><i style="top:325px;left:122px;width:301px;height:1px;background:linear-gradient(90deg,#001bff 0px,#010bff 60px,#2900ff 102px,#8f00ff 203px,#f800ff 301px)"></i><i style="top:326px;left:122px;width:300px;height:1px;background:linear-gradient(90deg,#001aff 0px,#010bff 60px,#2600ff 99px,#8b00ff 201px,#f500ff 300px)"></i><i style="top:327px;left:123px;width:298px;height:1px;background:linear-gradient(90deg,#001aff 0px,#010aff 60px,#2500ff 97px,#8a00ff 199px,#f300ff 298px)"></i><i style="top:328px;left:124px;width:296px;height:1px;background:linear-gradient(90deg,#0019ff 0px,#000aff 58px,#2400ff 95px,#8800ff 197px,#f100ff 296px)"></i><i style="top:329px;left:124px;width:295px;height:1px;background:linear-gradient(90deg,#0019ff 0px,#000aff 58px,#2400ff 96px,#8800ff 197px,#ef00ff 295px)"></i><i style="top:330px;left:125px;width:293px;height:1px;background:linear-gradient(90deg,#0018ff 0px,#0109ff 58px,#2300ff 94px,#8600ff 195px,#ed00ff 293px)"></i><i style="top:331px;left:126px;width:291px;height:1px;background:linear-gradient(90deg,#0018ff 0px,#0009ff 56px,#2200ff 92px,#8500ff 193px,#eb00ff 291px)"></i><i style="top:332px;left:126px;width:290px;height:1px;background:linear-gradient(90deg,#0017ff 0px,#0009ff 56px,#1f00ff 89px,#8200ff 191px,#e900ff 290px)"></i><i style="top:333px;left:127px;width:288px;height:1px;background:linear-gradient(90deg,#0017ff 0px,#0108ff 56px,#1e00ff 87px,#8000ff 189px,#e600ff 288px)"></i><i style="top:334px;left:128px;width:286px;height:1px;background:linear-gradient(90deg,#0016ff 0px,#0108ff 56px,#1d00ff 85px,#7e00ff 187px,#e400ff 286px)"></i><i style="top:335px;left:128px;width:285px;height:1px;background:linear-gradient(90deg,#0016ff 0px,#0108ff 56px,#1d00ff 86px,#7e00ff 187px,#e200ff 285px)"></i><i style="top:336px;left:129px;width:283px;height:1px;background:linear-gradient(90deg,#0015ff 0px,#0008ff 54px,#1c00ff 84px,#7d00ff 185px,#e000ff 283px)"></i><i style="top:337px;left:130px;width:281px;height:1px;background:linear-gradient(90deg,#0015ff 0px,#0107ff 54px,#1b00ff 82px,#7b00ff 183px,#de00ff 281px)"></i><i style="top:338px;left:130px;width:280px;height:1px;background:linear-gradient(90deg,#0014ff 0px,#0107ff 54px,#1800ff 79px,#7800ff 181px,#dc00ff 280px)"></i><i style="top:339px;left:131px;width:278px;height:1px;background:linear-gradient(90deg,#0014ff 0px,#0106ff 54px,#1700ff 77px,#7700ff 179px,#da00ff 278px)"></i><i style="top:340px;left:132px;width:276px;height:1px;background:linear-gradient(90deg,#0013ff 0px,#0006ff 52px,#1600ff 75px,#7500ff 177px,#d800ff 276px)"></i><i style="top:341px;left:133px;width:274px;height:1px;background:linear-gradient(90deg,#0013ff 0px,#0106ff 52px,#1500ff 73px,#7400ff 175px,#d600ff 274px)"></i><i style="top:342px;left:133px;width:273px;height:1px;background:linear-gradient(90deg,#0012ff 0px,#0105ff 52px,#1500ff 74px,#7400ff 175px,#d500ff 273px)"></i><i style="top:343px;left:134px;width:271px;height:1px;background:linear-gradient(90deg,#0012ff 0px,#0005ff 50px,#1400ff 72px,#7200ff 173px,#d300ff 271px)"></i><i style="top:344px;left:135px;width:269px;height:1px;background:linear-gradient(90deg,#0011ff 0px,#0105ff 50px,#1300ff 70px,#7100ff 171px,#d100ff 269px)"></i><i style="top:345px;left:135px;width:269px;height:1px;background:linear-gradient(90deg,#0011ff 0px,#0105ff 50px,#1100ff 68px,#6e00ff 169px,#d000ff 269px)"></i><i style="top:346px;left:136px;width:267px;height:1px;background:linear-gradient(90deg,#0010ff 0px,#0104ff 50px,#1000ff 66px,#6d00ff 167px,#ce00ff 267px)"></i><i style="top:347px;left:137px;width:265px;height:1px;background:linear-gradient(90deg,#0010ff 0px,#0004ff 48px,#0e00ff 64px,#6b00ff 165px,#cc00ff 265px)"></i><i style="top:348px;left:138px;width:263px;height:1px;background:linear-gradient(90deg,#000fff 0px,#0104ff 48px,#0d00ff 62px,#6400ff 157px,#ca00ff 263px)"></i><i style="top:349px;left:138px;width:262px;height:1px;background:linear-gradient(90deg,#000fff 0px,#0103ff 48px,#0d00ff 62px,#6300ff 157px,#c800ff 262px)"></i><i style="top:350px;left:139px;width:260px;height:1px;background:linear-gradient(90deg,#000fff 0px,#0003ff 46px,#0c00ff 60px,#6000ff 153px,#c700ff 260px)"></i><i style="top:351px;left:140px;width:258px;height:1px;background:linear-gradient(90deg,#000eff 0px,#0103ff 46px,#0b00ff 58px,#6000ff 153px,#c500ff 258px)"></i><i style="top:352px;left:140px;width:257px;height:1px;background:linear-gradient(90deg,#000eff 0px,#0102ff 46px,#0900ff 56px,#6100ff 153px,#c300ff 257px)"></i><i style="top:353px;left:141px;width:255px;height:1px;background:linear-gradient(90deg,#000dff 0px,#0102ff 46px,#5f00ff 151px,#c100ff 255px)"></i><i style="top:354px;left:142px;width:253px;height:1px;background:linear-gradient(90deg,#000dff 0px,#0002ff 44px,#5e00ff 149px,#bf00ff 253px)"></i><i style="top:355px;left:143px;width:251px;height:1px;background:linear-gradient(90deg,#000cff 0px,#0101ff 44px,#5e00ff 149px,#be00ff 251px)"></i><i style="top:356px;left:143px;width:250px;height:1px;background:linear-gradient(90deg,#000cff 0px,#0101ff 44px,#5d00ff 149px,#bc00ff 250px)"></i><i style="top:357px;left:144px;width:248px;height:1px;background:linear-gradient(90deg,#000bff 0px,#0101ff 44px,#5c00ff 147px,#ba00ff 248px)"></i><i style="top:358px;left:145px;width:246px;height:1px;background:linear-gradient(90deg,#000bff 0px,#0001ff 42px,#5b00ff 145px,#b900ff 246px)"></i><i style="top:359px;left:146px;width:244px;height:1px;background:linear-gradient(90deg,#000aff 0px,#0100ff 42px,#5b00ff 145px,#b700ff 244px)"></i><i style="top:360px;left:146px;width:243px;height:1px;background:linear-gradient(90deg,#000aff 0px,#0100ff 42px,#5900ff 143px,#b500ff 243px)"></i><i style="top:361px;left:147px;width:241px;height:1px;background:linear-gradient(90deg,#000aff 0px,#0000ff 40px,#5800ff 141px,#b300ff 241px)"></i><i style="top:362px;left:148px;width:239px;height:1px;background:linear-gradient(90deg,#0009ff 0px,#0100ff 40px,#5900ff 141px,#b200ff 239px)"></i><i style="top:363px;left:149px;width:237px;height:1px;background:linear-gradient(90deg,#0009ff 0px,#0000ff 38px,#5700ff 139px,#b000ff 237px)"></i><i style="top:364px;left:149px;width:236px;height:1px;background:linear-gradient(90deg,#0008ff 0px,#0100ff 40px,#5600ff 139px,#ae00ff 236px)"></i><i style="top:365px;left:150px;width:234px;height:1px;background:linear-gradient(90deg,#0008ff 0px,#0000ff 38px,#5500ff 137px,#ad00ff 234px)"></i><i style="top:366px;left:151px;width:232px;height:1px;background:linear-gradient(90deg,#0007ff 0px,#0100ff 38px,#5500ff 137px,#ab00ff 232px)"></i><i style="top:367px;left:152px;width:230px;height:1px;background:linear-gradient(90deg,#0007ff 0px,#0000ff 36px,#5400ff 135px,#aa00ff 230px)"></i><i style="top:368px;left:153px;width:228px;height:1px;background:linear-gradient(90deg,#0006ff 0px,#0100ff 36px,#5300ff 133px,#a800ff 228px)"></i><i style="top:369px;left:153px;width:227px;height:1px;background:linear-gradient(90deg,#0006ff 0px,#0100ff 36px,#5300ff 133px,#a600ff 227px)"></i><i style="top:370px;left:154px;width:225px;height:1px;background:linear-gradient(90deg,#0006ff 0px,#0000ff 34px,#5000ff 129px,#a500ff 225px)"></i><i style="top:371px;left:155px;width:223px;height:1px;background:linear-gradient(90deg,#0005ff 0px,#0100ff 34px,#5100ff 129px,#a300ff 223px)"></i><i style="top:372px;left:156px;width:221px;height:1px;background:linear-gradient(90deg,#0005ff 0px,#0100ff 34px,#5100ff 129px,#a200ff 221px)"></i><i style="top:373px;left:156px;width:220px;height:1px;background:linear-gradient(90deg,#0004ff 0px,#0100ff 34px,#5000ff 129px,#a000ff 220px)"></i><i style="top:374px;left:157px;width:218px;height:1px;background:linear-gradient(90deg,#0004ff 0px,#0000ff 32px,#4f00ff 127px,#9f00ff 218px)"></i><i style="top:375px;left:158px;width:216px;height:1px;background:linear-gradient(90deg,#0004ff 0px,#0100ff 32px,#4e00ff 125px,#9d00ff 216px)"></i><i style="top:376px;left:159px;width:214px;height:1px;background:linear-gradient(90deg,#0003ff 0px,#0100ff 32px,#9c00ff 214px)"></i><i style="top:377px;left:160px;width:212px;height:1px;background:linear-gradient(90deg,#0003ff 0px,#0000ff 30px,#9a00ff 212px)"></i><i style="top:378px;left:160px;width:211px;height:1px;background:linear-gradient(90deg,#0002ff 0px,#0000ff 30px,#9900ff 211px)"></i><i style="top:379px;left:161px;width:209px;height:1px;background:linear-gradient(90deg,#0002ff 0px,#0100ff 30px,#9700ff 209px)"></i><i style="top:380px;left:162px;width:207px;height:1px;background:linear-gradient(90deg,#0001ff 0px,#0000ff 28px,#9600ff 207px)"></i><i style="top:381px;left:163px;width:205px;height:1px;background:linear-gradient(90deg,#0001ff 0px,#0100ff 28px,#9400ff 205px)"></i><i style="top:382px;left:164px;width:203px;height:1px;background:linear-gradient(90deg,#0001ff 0px,#0000ff 26px,#9300ff 203px)"></i><i style="top:383px;left:165px;width:202px;height:1px;background:linear-gradient(90deg,#0000ff 0px,#0000ff 26px,#9200ff 202px)"></i><i style="top:384px;left:165px;width:201px;height:1px;background:linear-gradient(90deg,#0000ff 0px,#0000ff 26px,#9100ff 201px)"></i><i style="top:385px;left:166px;width:199px;height:1px;background:linear-gradient(90deg,#0000ff 0px,#0100ff 26px,#8f00ff 199px)"></i><i style="top:386px;left:167px;width:197px;height:1px;background:linear-gradient(90deg,#0000ff 0px,#0000ff 24px,#8e00ff 197px)"></i><i style="top:387px;left:168px;width:195px;height:1px;background:linear-gradient(90deg,#0000ff 0px,#0100ff 24px,#8c00ff 195px)"></i><i style="top:388px;left:169px;width:193px;height:1px;background:linear-gradient(90deg,#0000ff 0px,#0000ff 22px,#8b00ff 193px)"></i><i style="top:389px;left:170px;width:191px;height:1px;background:linear-gradient(90deg,#0000ff 0px,#0100ff 22px,#8a00ff 191px)"></i><i style="top:390px;left:170px;width:190px;height:1px;background:linear-gradient(90deg,#0000ff 0px,#0000ff 22px,#8800ff 190px)"></i><i style="top:391px;left:171px;width:188px;height:1px;background:linear-gradient(90deg,#0000ff 0px,#0100ff 22px,#8700ff 188px)"></i><i style="top:392px;left:172px;width:186px;height:1px;background:linear-gradient(90deg,#0000ff 0px,#0000ff 20px,#8600ff 186px)"></i><i style="top:393px;left:173px;width:184px;height:1px;background:linear-gradient(90deg,#0000ff 0px,#0100ff 20px,#8400ff 184px)"></i><i style="top:394px;left:174px;width:182px;height:1px;background:linear-gradient(90deg,#0000ff 0px,#0100ff 20px,#8300ff 182px)"></i><i style="top:395px;left:175px;width:180px;height:1px;background:linear-gradient(90deg,#0000ff 0px,#0100ff 18px,#8100ff 180px)"></i><i style="top:396px;left:176px;width:178px;height:1px;background:linear-gradient(90deg,#0000ff 0px,#0100ff 18px,#8000ff 178px)"></i><i style="top:397px;left:176px;width:177px;height:1px;background:linear-gradient(90deg,#0000ff 0px,#0100ff 18px,#7f00ff 177px)"></i><i style="top:398px;left:177px;width:175px;height:1px;background:linear-gradient(90deg,#0000ff 0px,#0000ff 16px,#7e00ff 175px)"></i><i style="top:399px;left:178px;width:173px;height:1px;background:linear-gradient(90deg,#0000ff 0px,#0100ff 16px,#7c00ff 173px)"></i><i style="top:400px;left:179px;width:171px;height:1px;background:linear-gradient(90deg,#0000ff 0px,#0000ff 14px,#7b00ff 171px)"></i><i style="top:401px;left:180px;width:169px;height:1px;background:linear-gradient(90deg,#0000ff 0px,#0100ff 14px,#7a00ff 169px)"></i><i style="top:402px;left:181px;width:167px;height:1px;background:linear-gradient(90deg,#0000ff 0px,#0100ff 14px,#7800ff 167px)"></i><i style="top:403px;left:182px;width:165px;height:1px;background:linear-gradient(90deg,#0000ff 0px,#0000ff 12px,#7700ff 165px)"></i><i style="top:404px;left:183px;width:163px;height:1px;background:linear-gradient(90deg,#0000ff 0px,#0100ff 12px,#7600ff 163px)"></i><i style="top:405px;left:184px;width:161px;height:1px;background:linear-gradient(90deg,#0000ff 0px,#0000ff 10px,#7500ff 161px)"></i><i style="top:406px;left:185px;width:159px;height:1px;background:linear-gradient(90deg,#0000ff 0px,#0100ff 10px,#7300ff 159px)"></i><i style="top:407px;left:186px;width:157px;height:1px;background:linear-gradient(90deg,#0000ff 0px,#0100ff 10px,#7200ff 157px)"></i><i style="top:408px;left:187px;width:155px;height:1px;background:linear-gradient(90deg,#0000ff 0px,#0100ff 8px,#7100ff 155px)"></i><i style="top:409px;left:188px;width:153px;height:1px;background:linear-gradient(90deg,#0000ff 0px,#0100ff 8px,#7000ff 153px)"></i><i style="top:410px;left:189px;width:151px;height:1px;background:linear-gradient(90deg,#0000ff 0px,#0000ff 6px,#6e00ff 151px)"></i><i style="top:411px;left:190px;width:149px;height:1px;background:linear-gradient(90deg,#0000ff 0px,#0700ff 14px,#6d00ff 149px)"></i><i style="top:412px;left:191px;width:147px;height:1px;background:linear-gradient(90deg,#0000ff 0px,#0000ff 4px,#0f00ff 24px,#6c00ff 147px)"></i><i style="top:413px;left:192px;width:145px;height:1px;background:linear-gradient(90deg,#0000ff 0px,#1600ff 34px,#6b00ff 145px)"></i><i style="top:414px;left:193px;width:143px;height:1px;background:linear-gradient(90deg,#0000ff 0px,#6a00ff 143px)"></i><i style="top:415px;left:194px;width:141px;height:1px;background:linear-gradient(90deg,#0000ff 0px,#6800ff 141px)"></i><i style="top:416px;left:195px;width:139px;height:1px;background:linear-gradient(90deg,#0000ff 0px,#6700ff 139px)"></i><i style="top:417px;left:196px;width:137px;height:1px;background:linear-gradient(90deg,#0000ff 0px,#6600ff 137px)"></i><i style="top:418px;left:197px;width:135px;height:1px;background:linear-gradient(90deg,#0100ff 0px,#6500ff 135px)"></i><i style="top:419px;left:198px;width:133px;height:1px;background:linear-gradient(90deg,#0100ff 0px,#6400ff 133px)"></i><i style="top:420px;left:199px;width:131px;height:1px;background:linear-gradient(90deg,#0200ff 0px,#6300ff 131px)"></i><i style="top:421px;left:200px;width:130px;height:1px;background:linear-gradient(90deg,#0300ff 0px,#6200ff 130px)"></i><i style="top:422px;left:201px;width:128px;height:1px;background:linear-gradient(90deg,#0300ff 0px,#6100ff 128px)"></i><i style="top:423px;left:202px;width:126px;height:1px;background:linear-gradient(90deg,#0400ff 0px,#6000ff 126px)"></i><i style="top:424px;left:203px;width:124px;height:1px;background:linear-gradient(90deg,#0400ff 0px,#5f00ff 124px)"></i><i style="top:425px;left:204px;width:122px;height:1px;background:linear-gradient(90deg,#0500ff 0px,#5e00ff 122px)"></i><i style="top:426px;left:205px;width:120px;height:1px;background:linear-gradient(90deg,#0600ff 0px,#5d00ff 120px)"></i><i style="top:427px;left:207px;width:117px;height:1px;background:linear-gradient(90deg,#0700ff 0px,#5b00ff 117px)"></i><i style="top:428px;left:208px;width:115px;height:1px;background:linear-gradient(90deg,#0700ff 0px,#5a00ff 115px)"></i><i style="top:429px;left:209px;width:113px;height:1px;background:linear-gradient(90deg,#0800ff 0px,#5900ff 113px)"></i><i style="top:430px;left:210px;width:111px;height:1px;background:linear-gradient(90deg,#0900ff 0px,#5800ff 111px)"></i><i style="top:431px;left:211px;width:109px;height:1px;background:linear-gradient(90deg,#0900ff 0px,#5700ff 109px)"></i><i style="top:432px;left:212px;width:107px;height:1px;background:linear-gradient(90deg,#0a00ff 0px,#5600ff 107px)"></i><i style="top:433px;left:213px;width:105px;height:1px;background:linear-gradient(90deg,#0a00ff 0px,#5500ff 105px)"></i><i style="top:434px;left:215px;width:102px;height:1px;background:linear-gradient(90deg,#0b00ff 0px,#5400ff 102px)"></i><i style="top:435px;left:216px;width:100px;height:1px;background:linear-gradient(90deg,#0c00ff 0px,#5300ff 100px)"></i><i style="top:436px;left:217px;width:98px;height:1px;background:linear-gradient(90deg,#0d00ff 0px,#5200ff 98px)"></i><i style="top:437px;left:218px;width:96px;height:1px;background:linear-gradient(90deg,#0d00ff 0px,#5100ff 96px)"></i><i style="top:438px;left:219px;width:94px;height:1px;background:linear-gradient(90deg,#0e00ff 0px,#5000ff 94px)"></i><i style="top:439px;left:220px;width:92px;height:1px;background:linear-gradient(90deg,#0e00ff 0px,#4f00ff 92px)"></i><i style="top:440px;left:222px;width:89px;height:1px;background:linear-gradient(90deg,#0f00ff 0px,#4e00ff 89px)"></i><i style="top:441px;left:223px;width:87px;height:1px;background:linear-gradient(90deg,#1000ff 0px,#4d00ff 87px)"></i><i style="top:442px;left:224px;width:85px;height:1px;background:linear-gradient(90deg,#1000ff 0px,#4c00ff 85px)"></i><i style="top:443px;left:225px;width:83px;height:1px;background:linear-gradient(90deg,#1100ff 0px,#4b00ff 83px)"></i><i style="top:444px;left:227px;width:80px;height:1px;background:linear-gradient(90deg,#1200ff 0px,#4a00ff 80px)"></i><i style="top:445px;left:228px;width:78px;height:1px;background:linear-gradient(90deg,#1300ff 0px,#4900ff 78px)"></i><i style="top:446px;left:229px;width:76px;height:1px;background:linear-gradient(90deg,#1300ff 0px,#4800ff 76px)"></i><i style="top:447px;left:230px;width:74px;height:1px;background:linear-gradient(90deg,#1400ff 0px,#4700ff 74px)"></i><i style="top:448px;left:231px;width:72px;height:1px;background:linear-gradient(90deg,#1400ff 0px,#4600ff 72px)"></i><i style="top:449px;left:233px;width:69px;height:1px;background:linear-gradient(90deg,#1500ff 0px,#4500ff 69px)"></i><i style="top:450px;left:234px;width:67px;height:1px;background:linear-gradient(90deg,#1600ff 0px,#4400ff 67px)"></i><i style="top:451px;left:235px;width:65px;height:1px;background:linear-gradient(90deg,#1600ff 0px,#4300ff 65px)"></i><i style="top:452px;left:236px;width:63px;height:1px;background:linear-gradient(90deg,#1700ff 0px,#4200ff 63px)"></i><i style="top:453px;left:237px;width:61px;height:1px;background:linear-gradient(90deg,#1800ff 0px,#4100ff 61px)"></i><i style="top:454px;left:239px;width:58px;height:1px;background:linear-gradient(90deg,#1900ff 0px,#4000ff 58px)"></i><i style="top:455px;left:240px;width:56px;height:1px;background:linear-gradient(90deg,#1900ff 0px,#3f00ff 56px)"></i><i style="top:456px;left:241px;width:54px;height:1px;background:linear-gradient(90deg,#1a00ff 0px,#3e00ff 54px)"></i><i style="top:457px;left:242px;width:52px;height:1px;background:linear-gradient(90deg,#1a00ff 0px,#3d00ff 52px)"></i><i style="top:458px;left:243px;width:50px;height:1px;background:linear-gradient(90deg,#1b00ff 0px,#3c00ff 50px)"></i><i style="top:459px;left:245px;width:48px;height:1px;background:linear-gradient(90deg,#1c00ff 0px,#3c00ff 48px)"></i><i style="top:460px;left:246px;width:46px;height:1px;background:linear-gradient(90deg,#1c00ff 0px,#3b00ff 46px)"></i><i style="top:461px;left:247px;width:44px;height:1px;background:linear-gradient(90deg,#1d00ff 0px,#3a00ff 44px)"></i><i style="top:462px;left:248px;width:42px;height:1px;background:linear-gradient(90deg,#1d00ff 0px,#3900ff 42px)"></i><i style="top:463px;left:249px;width:40px;height:1px;background:linear-gradient(90deg,#1e00ff 0px,#3800ff 40px)"></i><i style="top:464px;left:251px;width:37px;height:1px;background:linear-gradient(90deg,#1f00ff 0px,#3700ff 37px)"></i><i style="top:465px;left:252px;width:35px;height:1px;background:linear-gradient(90deg,#1f00ff 0px,#3600ff 35px)"></i><i style="top:466px;left:253px;width:33px;height:1px;background:linear-gradient(90deg,#2000ff 0px,#3500ff 33px)"></i><i style="top:467px;left:254px;width:31px;height:1px;background:linear-gradient(90deg,#2000ff 0px,#3500ff 31px)"></i><i style="top:468px;left:255px;width:29px;height:1px;background:linear-gradient(90deg,#2100ff 0px,#3400ff 29px)"></i><i style="top:469px;left:257px;width:26px;height:1px;background:linear-gradient(90deg,#2200ff 0px,#3300ff 26px)"></i><i style="top:470px;left:258px;width:24px;height:1px;background:linear-gradient(90deg,#2200ff 0px,#3200ff 24px)"></i><i style="top:471px;left:259px;width:22px;height:1px;background:linear-gradient(90deg,#2300ff 0px,#3100ff 22px)"></i><i style="top:472px;left:260px;width:20px;height:1px;background:linear-gradient(90deg,#2300ff 0px,#3000ff 20px)"></i><i style="top:473px;left:262px;width:17px;height:1px;background:linear-gradient(90deg,#2400ff 0px,#2f00ff 17px)"></i><i style="top:474px;left:263px;width:15px;height:1px;background:linear-gradient(90deg,#2500ff 0px,#2e00ff 15px)"></i><i style="top:475px;left:264px;width:13px;height:1px;background:linear-gradient(90deg,#2500ff 0px,#2e00ff 13px)"></i><i style="top:476px;left:266px;width:10px;height:1px;background:linear-gradient(90deg,#2600ff 0px,#2d00ff 10px)"></i><i style="top:477px;left:267px;width:8px;height:1px;background:linear-gradient(90deg,#2700ff 0px,#2c00ff 8px)"></i></div><svg class="cieov" width="639" height="491" viewBox="0 0 639 491"><path fill="#000" fill-opacity="0.40" fill-rule="evenodd" d="M273.4 477.6 L273.3 477.6 L273.3 477.6 L273.3 477.6 L273.2 477.6 L273.2 477.6 L273.1 477.6 L273.1 477.7 L273.0 477.7 L273.0 477.7 L272.9 477.7 L272.8 477.7 L272.7 477.7 L272.6 477.7 L272.5 477.7 L272.5 477.7 L272.4 477.8 L272.4 477.9 L272.3 478.0 L272.3 478.0 L272.2 478.1 L272.1 478.1 L272.1 478.1 L272.0 478.1 L271.8 478.1 L271.7 478.1 L271.5 478.1 L271.3 478.1 L271.2 478.1 L271.0 478.1 L270.9 478.1 L270.7 478.1 L270.5 478.1 L270.4 478.1 L270.2 478.0 L270.0 478.0 L269.7 477.9 L269.5 477.8 L269.2 477.7 L268.9 477.5 L268.4 477.3 L268.0 477.0 L267.4 476.7 L266.9 476.3 L266.3 475.9 L265.7 475.5 L265.0 475.0 L264.3 474.5 L263.6 473.9 L262.8 473.3 L261.9 472.6 L261.0 471.9 L260.0 471.1 L258.9 470.2 L257.8 469.3 L256.6 468.3 L255.4 467.3 L254.1 466.2 L252.7 465.0 L251.3 463.8 L249.8 462.5 L248.3 461.2 L246.6 459.9 L244.9 458.5 L243.1 457.0 L241.2 455.4 L239.2 453.7 L237.0 451.9 L234.8 450.1 L232.4 448.1 L230.0 446.1 L227.4 444.0 L224.8 441.9 L222.1 439.6 L219.3 437.2 L216.3 434.7 L213.2 432.1 L210.0 429.2 L206.7 426.3 L203.2 423.1 L199.7 419.8 L196.0 416.3 L192.2 412.6 L188.3 408.6 L184.1 404.3 L179.7 399.5 L175.0 394.2 L170.0 388.3 L164.7 381.9 L159.0 374.9 L153.2 367.5 L147.3 359.7 L141.2 351.4 L134.9 342.7 L128.5 333.4 L121.9 323.8 L115.2 313.6 L108.4 303.0 L101.6 292.1 L94.8 280.9 L87.9 269.4 L81.1 257.8 L74.4 246.1 L67.8 234.3 L61.4 222.4 L55.3 210.6 L49.5 198.9 L44.0 187.3 L38.9 176.0 L34.2 164.9 L29.7 154.2 L25.5 143.7 L21.7 133.7 L18.2 124.2 L15.1 115.1 L12.3 106.5 L9.9 98.5 L7.8 91.0 L6.1 83.9 L4.6 77.3 L3.4 71.2 L2.4 65.4 L1.8 60.1 L1.3 55.2 L1.2 50.7 L1.2 46.5 L1.5 42.6 L2.0 39.0 L2.6 35.6 L3.5 32.5 L4.6 29.6 L5.9 27.0 L7.4 24.6 L9.0 22.4 L10.8 20.5 L12.8 18.9 L14.9 17.4 L17.1 16.1 L19.4 15.0 L21.8 14.1 L24.3 13.4 L26.9 12.8 L29.6 12.3 L32.4 11.9 L35.2 11.6 L38.1 11.3 L41.0 11.2 L44.0 11.0 L47.0 10.9 L50.0 10.9 L53.0 10.8 L56.1 10.8 L59.1 10.9 L62.1 10.9 L65.2 10.9 L68.2 11.0 L71.3 11.1 L74.5 11.3 L77.6 11.4 L80.9 11.6 L84.1 11.8 L87.4 12.0 L90.8 12.2 L94.2 12.5 L97.7 12.7 L101.2 13.0 L104.8 13.3 L108.4 13.6 L112.1 14.0 L115.9 14.3 L119.8 14.7 L123.7 15.1 L127.7 15.5 L131.8 15.9 L136.0 16.3 L140.2 16.7 L144.6 17.2 L149.0 17.7 L153.5 18.2 L158.1 18.7 L162.8 19.2 L167.6 19.7 L172.5 20.2 L177.6 20.8 L182.7 21.4 L187.9 21.9 L193.2 22.5 L198.6 23.2 L204.1 23.8 L209.8 24.4 L215.5 25.1 L221.4 25.7 L227.4 26.4 L233.5 27.1 L239.7 27.8 L246.0 28.6 L252.4 29.3 L259.0 30.1 L265.6 30.8 L272.4 31.6 L279.2 32.4 L286.2 33.2 L293.2 34.0 L300.4 34.8 L307.7 35.6 L315.0 36.5 L322.4 37.3 L329.9 38.2 L337.5 39.1 L345.2 39.9 L352.9 40.8 L360.7 41.7 L368.5 42.6 L376.3 43.5 L384.1 44.4 L391.9 45.3 L399.6 46.2 L407.1 47.1 L414.7 47.9 L422.2 48.8 L429.6 49.7 L437.1 50.5 L444.6 51.4 L452.0 52.2 L459.2 53.0 L466.4 53.9 L473.3 54.7 L480.1 55.4 L486.7 56.2 L493.2 56.9 L499.6 57.7 L505.8 58.4 L511.8 59.1 L517.7 59.7 L523.4 60.4 L528.9 61.0 L534.3 61.6 L539.5 62.2 L544.5 62.8 L549.3 63.4 L554.0 63.9 L558.5 64.4 L562.8 64.9 L567.0 65.4 L571.1 65.9 L575.0 66.3 L578.8 66.7 L582.4 67.2 L585.9 67.6 L589.3 68.0 L592.6 68.3 L595.9 68.7 L599.0 69.1 L602.1 69.4 L605.1 69.8 L608.0 70.1 L610.7 70.4 L613.4 70.7 L616.0 71.0 L618.5 71.3 L620.9 71.6 L623.2 71.9 L625.4 72.1 L627.6 72.4 L629.6 72.6 L631.5 72.8 L633.3 73.0 L635.0 73.2 L636.6 73.4 L638.1 73.6 L639.5 73.7 L640.9 73.9 L642.2 74.0 L643.5 74.2 L644.7 74.3 L645.8 74.4 L646.8 74.6 L647.9 74.7 L648.8 74.8 L649.7 74.9 L650.5 75.0 L651.2 75.1 L651.9 75.2 L652.5 75.2 L653.1 75.3 L653.6 75.4 L654.2 75.4 L654.7 75.5 L655.2 75.5 L655.7 75.6 L656.2 75.6 L656.6 75.7 L657.1 75.7 L657.5 75.8 L657.9 75.8 L658.3 75.9 L658.7 75.9 L659.1 76.0 L659.5 76.0 L659.9 76.1 L660.2 76.1 L660.6 76.2 L661.0 76.2 L661.4 76.2 L661.7 76.3 L662.1 76.3 L662.3 76.4 L662.6 76.4 L662.7 76.4 L662.9 76.4 L663.0 76.4 L663.2 76.5 L663.3 76.5 L663.4 76.5 L663.5 76.5 L663.6 76.5 L663.7 76.5 L663.8 76.5 L663.8 76.5 L663.9 76.5 L663.9 76.5 Z M479.9 63.1 L132.9 30.7 L186.6 361.9 Z"/></svg>
<svg class="a" style="left:0;top:0" width="639" height="491"><rect x="126.0" y="22.9" width="13.1" height="13.1" fill="none" stroke="#fff" stroke-width="1.9" stroke-opacity="0.9"/><rect x="149.9" y="46.9" width="13.1" height="13.1" fill="none" stroke="#fff" stroke-width="1.9" stroke-opacity="0.9"/><rect x="189.9" y="39.0" width="13.1" height="13.1" fill="none" stroke="#fff" stroke-width="1.9" stroke-opacity="0.9"/><rect x="209.9" y="30.9" width="13.1" height="13.1" fill="none" stroke="#fff" stroke-width="1.9" stroke-opacity="0.9"/><rect x="236.9" y="35.0" width="13.1" height="13.1" fill="none" stroke="#fff" stroke-width="1.9" stroke-opacity="0.9"/><rect x="268.9" y="42.0" width="13.1" height="13.1" fill="none" stroke="#fff" stroke-width="1.9" stroke-opacity="0.9"/><rect x="312.0" y="46.0" width="13.1" height="13.1" fill="none" stroke="#fff" stroke-width="1.9" stroke-opacity="0.9"/><rect x="186.9" y="60.9" width="13.1" height="13.1" fill="none" stroke="#fff" stroke-width="1.9" stroke-opacity="0.9"/><rect x="252.0" y="75.0" width="13.1" height="13.1" fill="none" stroke="#fff" stroke-width="1.9" stroke-opacity="0.9"/><rect x="240.9" y="81.0" width="13.1" height="13.1" fill="none" stroke="#fff" stroke-width="1.9" stroke-opacity="0.9"/><rect x="156.9" y="91.8" width="13.1" height="13.1" fill="none" stroke="#fff" stroke-width="1.9" stroke-opacity="0.9"/><rect x="140.7" y="111.0" width="13.1" height="13.1" fill="none" stroke="#fff" stroke-width="1.9" stroke-opacity="0.9"/><rect x="145.9" y="142.8" width="13.1" height="13.1" fill="none" stroke="#fff" stroke-width="1.9" stroke-opacity="0.9"/><rect x="179.9" y="139.8" width="13.1" height="13.1" fill="none" stroke="#fff" stroke-width="1.9" stroke-opacity="0.9"/><rect x="200.4" y="145.1" width="13.1" height="13.1" fill="none" stroke="#fff" stroke-width="1.9" stroke-opacity="0.9"/><rect x="235.9" y="162.8" width="13.1" height="13.1" fill="none" stroke="#fff" stroke-width="1.9" stroke-opacity="0.9"/><rect x="298.4" y="133.9" width="13.1" height="13.1" fill="none" stroke="#fff" stroke-width="1.9" stroke-opacity="0.9"/><rect x="182.9" y="192.8" width="13.1" height="13.1" fill="none" stroke="#fff" stroke-width="1.9" stroke-opacity="0.9"/><rect x="317.7" y="212.6" width="13.1" height="13.1" fill="none" stroke="#fff" stroke-width="1.9" stroke-opacity="0.9"/><rect x="182.9" y="242.9" width="13.1" height="13.1" fill="none" stroke="#fff" stroke-width="1.9" stroke-opacity="0.9"/><rect x="179.9" y="354.9" width="13.1" height="13.1" fill="none" stroke="#fff" stroke-width="1.9" stroke-opacity="0.9"/><rect x="472.9" y="55.3" width="13.1" height="13.1" fill="none" stroke="#fff" stroke-width="1.9" stroke-opacity="0.9"/><rect x="392.0" y="76.0" width="13.1" height="13.1" fill="none" stroke="#fff" stroke-width="1.9" stroke-opacity="0.9"/><rect x="330.9" y="87.9" width="13.1" height="13.1" fill="none" stroke="#fff" stroke-width="1.9" stroke-opacity="0.9"/><rect x="202.9" y="99.8" width="13.1" height="13.1" fill="none" stroke="#000" stroke-width="1.9" stroke-opacity="1"/><circle cx="132.1" cy="29.5" r="4.23" fill="#00ff00" stroke="#0a0a14" stroke-width="1.45"/><circle cx="153.8" cy="53.8" r="4.23" fill="#5a9050" stroke="#0a0a14" stroke-width="1.45"/><circle cx="193.7" cy="44.6" r="4.23" fill="#a0b850" stroke="#0a0a14" stroke-width="1.45"/><circle cx="212.5" cy="35.8" r="4.23" fill="#ffff00" stroke="#0a0a14" stroke-width="1.45"/><circle cx="238.5" cy="40.0" r="4.23" fill="#e6c030" stroke="#0a0a14" stroke-width="1.45"/><circle cx="271.0" cy="45.5" r="4.23" fill="#e0a040" stroke="#0a0a14" stroke-width="1.45"/><circle cx="316.0" cy="50.8" r="4.23" fill="#d08040" stroke="#0a0a14" stroke-width="1.45"/><circle cx="190.5" cy="67.4" r="4.23" fill="#5a6e45" stroke="#0a0a14" stroke-width="1.45"/><circle cx="258.4" cy="82.4" r="4.23" fill="#745040" stroke="#0a0a14" stroke-width="1.45"/><circle cx="244.1" cy="90.5" r="4.23" fill="#c09080" stroke="#0a0a14" stroke-width="1.45"/><circle cx="162.1" cy="103.9" r="4.23" fill="#70b0a0" stroke="#0a0a14" stroke-width="1.45"/><circle cx="147.0" cy="123.3" r="4.23" fill="#00ffff" stroke="#0a0a14" stroke-width="1.45"/><circle cx="150.9" cy="155.9" r="4.23" fill="#2090a0" stroke="#0a0a14" stroke-width="1.45"/><circle cx="183.9" cy="155.9" r="4.23" fill="#7080a0" stroke="#0a0a14" stroke-width="1.45"/><circle cx="204.6" cy="159.9" r="4.23" fill="#9090c0" stroke="#0a0a14" stroke-width="1.45"/><circle cx="240.8" cy="184.5" r="4.23" fill="#604060" stroke="#0a0a14" stroke-width="1.45"/><circle cx="301.0" cy="150.4" r="4.23" fill="#c06080" stroke="#0a0a14" stroke-width="1.45"/><circle cx="185.0" cy="212.9" r="4.23" fill="#6070b0" stroke="#0a0a14" stroke-width="1.45"/><circle cx="313.0" cy="232.0" r="4.23" fill="#ff00ff" stroke="#0a0a14" stroke-width="1.45"/><circle cx="185.0" cy="270.3" r="4.23" fill="#4050a0" stroke="#0a0a14" stroke-width="1.45"/><circle cx="182.8" cy="363.4" r="3.70" fill="#0000ff" stroke="#000070" stroke-width="1.2"/><circle cx="481.8" cy="60.7" r="4.23" fill="#ff0000" stroke="#0a0a14" stroke-width="1.45"/><circle cx="408.5" cy="82.4" r="4.23" fill="#b04050" stroke="#0a0a14" stroke-width="1.45"/><circle cx="336.5" cy="98.9" r="4.23" fill="#c06070" stroke="#0a0a14" stroke-width="1.45"/><circle cx="317.0" cy="126.0" r="4.23" fill="#000" stroke="#0a0a14" stroke-width="1.45"/><circle cx="206.0" cy="112.2" r="4.08" fill="#2a2a2a" stroke="#111" stroke-width="1.45"/><circle cx="207.3" cy="110.9" r="4.08" fill="#a8a8a8" stroke="#1a1a1a" stroke-width="1.45"/></svg>
</div>
<div class="a" style="left:1454px;top:437.6px;width:199px;height:131.6px;border:2px solid #87877c;overflow:hidden;background:linear-gradient(128deg,#b4ff00 0%,#d4ff00 18%,#ffff00 50%,#ffd000 80%,#ffb400 100%)"><svg class="a" style="left:-1px;top:-0.6px" width="200" height="130"><path d="M0 12.5L200 115.5V0H0Z" fill="#000" fill-opacity=".4"/></svg><svg class="a" style="left:-1px;top:-0.6px" width="200" height="130"><rect x="91.3" y="56.8" width="13.4" height="13.4" fill="none" stroke="#fff" stroke-opacity=".9" stroke-width="1.6"/><circle cx="81.8" cy="49.3" r="4.6" fill="#ffee10" stroke="#111" stroke-width="1.3"/><circle cx="192.8" cy="125.3" r="4.6" fill="#f0c830" stroke="#111" stroke-width="1.3"/></svg></div>
<div class="a" style="left:1403px;top:578px;width:252px;height:27px;background:#333"></div>
<span class="t" style="left:1403.8px;top:582.7px;font-size:20px;color:#f0f0f0;transform:scaleX(0.986);">RGB Triplet: 255, 255, 0</span>
<span class="t" style="left:1279.8px;top:100.6px;font-size:14px;color:#dcdcdc;transform:scaleX(1.026);">CIE 1976 u'v'</span>
<div class="a" style="left:1013px;top:609.5px;width:5px;height:1.3px;background:#d0d0d0"></div>
<span class="t" style="left:1003.7px;top:606.2px;font-size:14px;color:#dcdcdc;">0</span>
<div class="a" style="left:1013px;top:568.5px;width:5px;height:1.3px;background:#d0d0d0"></div>
<span class="t" style="left:984.3px;top:563.7px;font-size:14px;color:#dcdcdc;">0,05</span>
<div class="a" style="left:1013px;top:527.5px;width:5px;height:1.3px;background:#d0d0d0"></div>
<span class="t" style="left:992.0px;top:522.8px;font-size:14px;color:#dcdcdc;">0,1</span>
<div class="a" style="left:1013px;top:486.5px;width:5px;height:1.3px;background:#d0d0d0"></div>
<span class="t" style="left:984.3px;top:481.9px;font-size:14px;color:#dcdcdc;">0,15</span>
<div class="a" style="left:1013px;top:445.5px;width:5px;height:1.3px;background:#d0d0d0"></div>
<span class="t" style="left:992.0px;top:440.9px;font-size:14px;color:#dcdcdc;">0,2</span>
<div class="a" style="left:1013px;top:404.5px;width:5px;height:1.3px;background:#d0d0d0"></div>
<span class="t" style="left:984.3px;top:400.0px;font-size:14px;color:#dcdcdc;">0,25</span>
<div class="a" style="left:1013px;top:364.5px;width:5px;height:1.3px;background:#d0d0d0"></div>
<span class="t" style="left:992.0px;top:359.1px;font-size:14px;color:#dcdcdc;">0,3</span>
<div class="a" style="left:1013px;top:323.5px;width:5px;height:1.3px;background:#d0d0d0"></div>
<span class="t" style="left:984.3px;top:318.2px;font-size:14px;color:#dcdcdc;">0,35</span>
<div class="a" style="left:1013px;top:282.5px;width:5px;height:1.3px;background:#d0d0d0"></div>
<span class="t" style="left:992.0px;top:277.2px;font-size:14px;color:#dcdcdc;">0,4</span>
<div class="a" style="left:1013px;top:241.5px;width:5px;height:1.3px;background:#d0d0d0"></div>
<span class="t" style="left:984.3px;top:236.3px;font-size:14px;color:#dcdcdc;">0,45</span>
<div class="a" style="left:1013px;top:200.5px;width:5px;height:1.3px;background:#d0d0d0"></div>
<span class="t" style="left:992.0px;top:195.4px;font-size:14px;color:#dcdcdc;">0,5</span>
<div class="a" style="left:1013px;top:159.5px;width:5px;height:1.3px;background:#d0d0d0"></div>
<span class="t" style="left:984.3px;top:154.5px;font-size:14px;color:#dcdcdc;">0,55</span>
<div class="a" style="left:1018.7px;top:611px;width:1.3px;height:5px;background:#d0d0d0"></div>
<span class="t" style="left:1014.8px;top:619.9px;font-size:14px;color:#dcdcdc;">0</span>
<div class="a" style="left:1071.7px;top:611px;width:1.3px;height:5px;background:#d0d0d0"></div>
<span class="t" style="left:1058.4px;top:619.9px;font-size:14px;color:#dcdcdc;">0,05</span>
<div class="a" style="left:1124.7px;top:611px;width:1.3px;height:5px;background:#d0d0d0"></div>
<span class="t" style="left:1115.5px;top:619.9px;font-size:14px;color:#dcdcdc;">0,1</span>
<div class="a" style="left:1178.7px;top:611px;width:1.3px;height:5px;background:#d0d0d0"></div>
<span class="t" style="left:1164.9px;top:619.9px;font-size:14px;color:#dcdcdc;">0,15</span>
<div class="a" style="left:1231.7px;top:611px;width:1.3px;height:5px;background:#d0d0d0"></div>
<span class="t" style="left:1222.1px;top:619.9px;font-size:14px;color:#dcdcdc;">0,2</span>
<div class="a" style="left:1284.7px;top:611px;width:1.3px;height:5px;background:#d0d0d0"></div>
<span class="t" style="left:1271.5px;top:619.9px;font-size:14px;color:#dcdcdc;">0,25</span>
<div class="a" style="left:1337.7px;top:611px;width:1.3px;height:5px;background:#d0d0d0"></div>
<span class="t" style="left:1328.6px;top:619.9px;font-size:14px;color:#dcdcdc;">0,3</span>
<div class="a" style="left:1391.7px;top:611px;width:1.3px;height:5px;background:#d0d0d0"></div>
<span class="t" style="left:1378.0px;top:619.9px;font-size:14px;color:#dcdcdc;">0,35</span>
<div class="a" style="left:1444.7px;top:611px;width:1.3px;height:5px;background:#d0d0d0"></div>
<span class="t" style="left:1435.2px;top:619.9px;font-size:14px;color:#dcdcdc;">0,4</span>
<div class="a" style="left:1497.7px;top:611px;width:1.3px;height:5px;background:#d0d0d0"></div>
<span class="t" style="left:1484.6px;top:619.9px;font-size:14px;color:#dcdcdc;">0,45</span>
<div class="a" style="left:1550.7px;top:611px;width:1.3px;height:5px;background:#d0d0d0"></div>
<span class="t" style="left:1541.7px;top:619.9px;font-size:14px;color:#dcdcdc;">0,5</span>
<div class="a" style="left:1604.7px;top:611px;width:1.3px;height:5px;background:#d0d0d0"></div>
<span class="t" style="left:1591.1px;top:619.9px;font-size:14px;color:#dcdcdc;">0,55</span>
<span class="t" style="left:51.0px;top:652.8px;font-size:28.5px;color:#f2f2f2;transform:scaleX(1.029);">Avg dE2000: 2,22</span>
<span class="t" style="left:47.0px;top:693.8px;font-size:28.5px;color:#f2f2f2;transform:scaleX(1.047);">Max dE2000: 5,18</span>
<span class="t" style="left:15.1px;top:741.7px;font-size:28.5px;color:#f2f2f2;transform:scaleX(1.048);">Current Reading</span>
<span class="t" style="left:15.1px;top:780.5px;font-size:25px;color:#f2f2f2;transform:scaleX(0.995);">x: 0,4151</span>
<span class="t" style="left:171.8px;top:780.5px;font-size:25px;color:#f2f2f2;transform:scaleX(1.005);">y: 0,5108</span>
<span class="t" style="left:15.1px;top:821.1px;font-size:25px;color:#f2f2f2;">fL: 208,25</span>
<span class="t" style="left:15.1px;top:855.4px;font-size:25px;color:#f2f2f2;transform:scaleX(1.135);">cd/m</span>
<span class="t" style="left:72.3px;top:851.5px;font-size:27.7px;color:#f2f2f2;transform:scaleX(1.190);">²</span>
<span class="t" style="left:85.2px;top:855.4px;font-size:25px;color:#f2f2f2;transform:scaleX(0.988);">: 713,52</span>
<div class="a" style="left:320.5px;top:658.6px;width:1348.5px;height:229.6px;background:#0e0e0e"></div>
<div class="a" style="left:322px;top:661px;width:1345px;height:225px;overflow:hidden">
<div class="a" style="left:0;top:0;width:1400px;height:25px;background:linear-gradient(#2c2c2c,#2a2a2a 48%,#161616 52%,#1c1c1c)"></div>
<div class="a" style="left:0;top:24.6px;width:1400px;height:24.2px;background:#434343"></div>
<div class="a" style="left:0;top:48.5px;width:1400px;height:23.5px;background:#808080"></div>
<div class="a" style="left:0;top:71.7px;width:1400px;height:23.5px;background:#434343"></div>
<div class="a" style="left:0;top:94.9px;width:1400px;height:23.4px;background:#808080"></div>
<div class="a" style="left:0;top:118.0px;width:1400px;height:23.7px;background:#434343"></div>
<div class="a" style="left:0;top:141.4px;width:1400px;height:23.4px;background:#808080"></div>
<div class="a" style="left:0;top:164.5px;width:1400px;height:23.5px;background:#434343"></div>
<div class="a" style="left:0;top:187.7px;width:1400px;height:23.5px;background:#808080"></div>
<span class="t" style="left:171.5px;top:6.9px;font-size:14.2px;color:#fff;transform:scaleX(1.309);-webkit-text-stroke:0.2px #fff;">White</span>
<span class="t" style="left:167.0px;top:30.5px;font-size:14.2px;color:#eee;transform:scaleX(1.310);">0,30</span>
<span class="t" style="left:167.0px;top:54.1px;font-size:14.2px;color:#eee;transform:scaleX(1.310);">0,32</span>
<span class="t" style="left:167.0px;top:77.3px;font-size:14.2px;color:#eee;transform:scaleX(1.310);">743,53</span>
<span class="t" style="left:167.0px;top:100.4px;font-size:14.2px;color:#eee;transform:scaleX(1.310);">0,31</span>
<span class="t" style="left:167.0px;top:123.7px;font-size:14.2px;color:#eee;transform:scaleX(1.310);">0,33</span>
<span class="t" style="left:167.0px;top:146.9px;font-size:14.2px;color:#eee;transform:scaleX(1.310);">743,53</span>
<span class="t" style="left:167.0px;top:170.1px;font-size:14.2px;color:#eee;transform:scaleX(1.310);">5,18</span>
<span class="t" style="left:167.0px;top:193.3px;font-size:14.2px;color:#eee;transform:scaleX(1.310);">6,52</span>
<span class="t" style="left:233.7px;top:6.9px;font-size:14.2px;color:#fff;transform:scaleX(1.198);-webkit-text-stroke:0.2px #fff;">Gray 80</span>
<span class="t" style="left:233.7px;top:30.5px;font-size:14.2px;color:#eee;transform:scaleX(1.310);">0,30</span>
<span class="t" style="left:233.7px;top:54.1px;font-size:14.2px;color:#eee;transform:scaleX(1.310);">0,32</span>
<span class="t" style="left:233.7px;top:77.3px;font-size:14.2px;color:#eee;transform:scaleX(1.310);">585,54</span>
<span class="t" style="left:233.7px;top:100.4px;font-size:14.2px;color:#eee;transform:scaleX(1.310);">0,31</span>
<span class="t" style="left:233.7px;top:123.7px;font-size:14.2px;color:#eee;transform:scaleX(1.310);">0,33</span>
<span class="t" style="left:233.7px;top:146.9px;font-size:14.2px;color:#eee;transform:scaleX(1.310);">588,35</span>
<span class="t" style="left:233.7px;top:170.1px;font-size:14.2px;color:#eee;transform:scaleX(1.310);">4,67</span>
<span class="t" style="left:233.7px;top:193.3px;font-size:14.2px;color:#eee;transform:scaleX(1.310);">6,32</span>
<span class="t" style="left:304.5px;top:6.9px;font-size:14.2px;color:#fff;transform:scaleX(1.198);-webkit-text-stroke:0.2px #fff;">Gray 65</span>
<span class="t" style="left:304.5px;top:30.5px;font-size:14.2px;color:#eee;transform:scaleX(1.310);">0,30</span>
<span class="t" style="left:304.5px;top:54.1px;font-size:14.2px;color:#eee;transform:scaleX(1.310);">0,32</span>
<span class="t" style="left:304.5px;top:77.3px;font-size:14.2px;color:#eee;transform:scaleX(1.310);">472,99</span>
<span class="t" style="left:304.5px;top:100.4px;font-size:14.2px;color:#eee;transform:scaleX(1.310);">0,31</span>
<span class="t" style="left:304.5px;top:123.7px;font-size:14.2px;color:#eee;transform:scaleX(1.310);">0,33</span>
<span class="t" style="left:304.5px;top:146.9px;font-size:14.2px;color:#eee;transform:scaleX(1.310);">474,07</span>
<span class="t" style="left:304.5px;top:170.1px;font-size:14.2px;color:#eee;transform:scaleX(1.310);">4,23</span>
<span class="t" style="left:304.5px;top:193.3px;font-size:14.2px;color:#eee;transform:scaleX(1.310);">6,04</span>
<span class="t" style="left:375.4px;top:6.9px;font-size:14.2px;color:#fff;transform:scaleX(1.198);-webkit-text-stroke:0.2px #fff;">Gray 50</span>
<span class="t" style="left:375.4px;top:30.5px;font-size:14.2px;color:#eee;transform:scaleX(1.310);">0,30</span>
<span class="t" style="left:375.4px;top:54.1px;font-size:14.2px;color:#eee;transform:scaleX(1.310);">0,32</span>
<span class="t" style="left:375.4px;top:77.3px;font-size:14.2px;color:#eee;transform:scaleX(1.310);">364,52</span>
<span class="t" style="left:375.4px;top:100.4px;font-size:14.2px;color:#eee;transform:scaleX(1.310);">0,31</span>
<span class="t" style="left:375.4px;top:123.7px;font-size:14.2px;color:#eee;transform:scaleX(1.310);">0,33</span>
<span class="t" style="left:375.4px;top:146.9px;font-size:14.2px;color:#eee;transform:scaleX(1.310);">365,09</span>
<span class="t" style="left:375.4px;top:170.1px;font-size:14.2px;color:#eee;transform:scaleX(1.310);">4,06</span>
<span class="t" style="left:375.4px;top:193.3px;font-size:14.2px;color:#eee;transform:scaleX(1.310);">6,28</span>
<span class="t" style="left:446.2px;top:6.9px;font-size:14.2px;color:#fff;transform:scaleX(1.198);-webkit-text-stroke:0.2px #fff;">Gray 35</span>
<span class="t" style="left:446.2px;top:30.5px;font-size:14.2px;color:#eee;transform:scaleX(1.310);">0,30</span>
<span class="t" style="left:446.2px;top:54.1px;font-size:14.2px;color:#eee;transform:scaleX(1.310);">0,32</span>
<span class="t" style="left:446.2px;top:77.3px;font-size:14.2px;color:#eee;transform:scaleX(1.310);">255,64</span>
<span class="t" style="left:446.2px;top:100.4px;font-size:14.2px;color:#eee;transform:scaleX(1.310);">0,31</span>
<span class="t" style="left:446.2px;top:123.7px;font-size:14.2px;color:#eee;transform:scaleX(1.310);">0,33</span>
<span class="t" style="left:446.2px;top:146.9px;font-size:14.2px;color:#eee;transform:scaleX(1.310);">254,22</span>
<span class="t" style="left:446.2px;top:170.1px;font-size:14.2px;color:#eee;transform:scaleX(1.310);">3,41</span>
<span class="t" style="left:446.2px;top:193.3px;font-size:14.2px;color:#eee;transform:scaleX(1.310);">5,79</span>
<span class="t" style="left:519.5px;top:6.9px;font-size:14.2px;color:#fff;transform:scaleX(1.195);-webkit-text-stroke:0.2px #fff;">Black</span>
<span class="t" style="left:516.8px;top:30.5px;font-size:14.2px;color:#eee;transform:scaleX(1.310);">0,40</span>
<span class="t" style="left:516.8px;top:54.1px;font-size:14.2px;color:#eee;transform:scaleX(1.310);">0,27</span>
<span class="t" style="left:516.8px;top:77.3px;font-size:14.2px;color:#eee;transform:scaleX(1.310);">0,02</span>
<span class="t" style="left:516.8px;top:100.4px;font-size:14.2px;color:#eee;transform:scaleX(1.310);">0,31</span>
<span class="t" style="left:516.8px;top:123.7px;font-size:14.2px;color:#eee;transform:scaleX(1.310);">0,33</span>
<span class="t" style="left:516.8px;top:146.9px;font-size:14.2px;color:#eee;transform:scaleX(1.310);">0,00</span>
<span class="t" style="left:516.8px;top:170.1px;font-size:14.2px;color:#eee;transform:scaleX(1.310);">0,08</span>
<span class="t" style="left:516.8px;top:193.3px;font-size:14.2px;color:#eee;transform:scaleX(1.310);">24,09</span>
<span class="t" style="left:573.3px;top:6.9px;font-size:14.2px;color:#fff;transform:scaleX(1.194);-webkit-text-stroke:0.2px #fff;">Dark Skin</span>
<span class="t" style="left:573.3px;top:30.5px;font-size:14.2px;color:#eee;transform:scaleX(1.310);">0,40</span>
<span class="t" style="left:573.3px;top:54.1px;font-size:14.2px;color:#eee;transform:scaleX(1.310);">0,36</span>
<span class="t" style="left:573.3px;top:77.3px;font-size:14.2px;color:#eee;transform:scaleX(1.310);">74,73</span>
<span class="t" style="left:573.3px;top:100.4px;font-size:14.2px;color:#eee;transform:scaleX(1.310);">0,40</span>
<span class="t" style="left:573.3px;top:123.7px;font-size:14.2px;color:#eee;transform:scaleX(1.310);">0,36</span>
<span class="t" style="left:573.3px;top:146.9px;font-size:14.2px;color:#eee;transform:scaleX(1.310);">74,90</span>
<span class="t" style="left:573.3px;top:170.1px;font-size:14.2px;color:#eee;transform:scaleX(1.310);">0,19</span>
<span class="t" style="left:573.3px;top:193.3px;font-size:14.2px;color:#eee;transform:scaleX(1.310);">0,77</span>
<span class="t" style="left:657.5px;top:6.9px;font-size:14.2px;color:#fff;transform:scaleX(1.199);-webkit-text-stroke:0.2px #fff;">Light Skin</span>
<span class="t" style="left:657.5px;top:30.5px;font-size:14.2px;color:#eee;transform:scaleX(1.310);">0,37</span>
<span class="t" style="left:657.5px;top:54.1px;font-size:14.2px;color:#eee;transform:scaleX(1.310);">0,35</span>
<span class="t" style="left:657.5px;top:77.3px;font-size:14.2px;color:#eee;transform:scaleX(1.310);">265,32</span>
<span class="t" style="left:657.5px;top:100.4px;font-size:14.2px;color:#eee;transform:scaleX(1.310);">0,38</span>
<span class="t" style="left:657.5px;top:123.7px;font-size:14.2px;color:#eee;transform:scaleX(1.310);">0,36</span>
<span class="t" style="left:657.5px;top:146.9px;font-size:14.2px;color:#eee;transform:scaleX(1.310);">259,46</span>
<span class="t" style="left:657.5px;top:170.1px;font-size:14.2px;color:#eee;transform:scaleX(1.310);">1,95</span>
<span class="t" style="left:657.5px;top:193.3px;font-size:14.2px;color:#eee;transform:scaleX(1.310);">5,74</span>
<span class="t" style="left:742.9px;top:6.9px;font-size:14.2px;color:#fff;transform:scaleX(1.176);-webkit-text-stroke:0.2px #fff;">Blue Sky</span>
<span class="t" style="left:742.9px;top:30.5px;font-size:14.2px;color:#eee;transform:scaleX(1.310);">0,24</span>
<span class="t" style="left:742.9px;top:54.1px;font-size:14.2px;color:#eee;transform:scaleX(1.310);">0,25</span>
<span class="t" style="left:742.9px;top:77.3px;font-size:14.2px;color:#eee;transform:scaleX(1.310);">141,87</span>
<span class="t" style="left:742.9px;top:100.4px;font-size:14.2px;color:#eee;transform:scaleX(1.310);">0,25</span>
<span class="t" style="left:742.9px;top:123.7px;font-size:14.2px;color:#eee;transform:scaleX(1.310);">0,27</span>
<span class="t" style="left:742.9px;top:146.9px;font-size:14.2px;color:#eee;transform:scaleX(1.310);">139,03</span>
<span class="t" style="left:742.9px;top:170.1px;font-size:14.2px;color:#eee;transform:scaleX(1.310);">2,01</span>
<span class="t" style="left:742.9px;top:193.3px;font-size:14.2px;color:#eee;transform:scaleX(1.310);">7,76</span>
<span class="t" style="left:819.4px;top:6.9px;font-size:14.2px;color:#fff;transform:scaleX(1.185);-webkit-text-stroke:0.2px #fff;">Foliage</span>
<span class="t" style="left:819.4px;top:30.5px;font-size:14.2px;color:#eee;transform:scaleX(1.310);">0,34</span>
<span class="t" style="left:819.4px;top:54.1px;font-size:14.2px;color:#eee;transform:scaleX(1.310);">0,43</span>
<span class="t" style="left:819.4px;top:77.3px;font-size:14.2px;color:#eee;transform:scaleX(1.310);">98,36</span>
<span class="t" style="left:819.4px;top:100.4px;font-size:14.2px;color:#eee;transform:scaleX(1.310);">0,34</span>
<span class="t" style="left:819.4px;top:123.7px;font-size:14.2px;color:#eee;transform:scaleX(1.310);">0,43</span>
<span class="t" style="left:819.4px;top:146.9px;font-size:14.2px;color:#eee;transform:scaleX(1.310);">96,90</span>
<span class="t" style="left:819.4px;top:170.1px;font-size:14.2px;color:#eee;transform:scaleX(1.310);">0,96</span>
<span class="t" style="left:819.4px;top:193.3px;font-size:14.2px;color:#eee;transform:scaleX(1.310);">2,66</span>
<span class="t" style="left:885.7px;top:6.9px;font-size:14.2px;color:#fff;transform:scaleX(1.240);-webkit-text-stroke:0.2px #fff;">Blue Flower</span>
<span class="t" style="left:885.7px;top:30.5px;font-size:14.2px;color:#eee;transform:scaleX(1.310);">0,26</span>
<span class="t" style="left:885.7px;top:54.1px;font-size:14.2px;color:#eee;transform:scaleX(1.310);">0,24</span>
<span class="t" style="left:885.7px;top:77.3px;font-size:14.2px;color:#eee;transform:scaleX(1.310);">177,03</span>
<span class="t" style="left:885.7px;top:100.4px;font-size:14.2px;color:#eee;transform:scaleX(1.310);">0,27</span>
<span class="t" style="left:885.7px;top:123.7px;font-size:14.2px;color:#eee;transform:scaleX(1.310);">0,25</span>
<span class="t" style="left:885.7px;top:146.9px;font-size:14.2px;color:#eee;transform:scaleX(1.310);">173,38</span>
<span class="t" style="left:885.7px;top:170.1px;font-size:14.2px;color:#eee;transform:scaleX(1.310);">2,63</span>
<span class="t" style="left:885.7px;top:193.3px;font-size:14.2px;color:#eee;transform:scaleX(1.310);">7,21</span>
<span class="t" style="left:989.3px;top:6.9px;font-size:14.2px;color:#fff;transform:scaleX(1.215);-webkit-text-stroke:0.2px #fff;">Bluish Green</span>
<span class="t" style="left:989.3px;top:30.5px;font-size:14.2px;color:#eee;transform:scaleX(1.310);">0,26</span>
<span class="t" style="left:989.3px;top:54.1px;font-size:14.2px;color:#eee;transform:scaleX(1.310);">0,35</span>
<span class="t" style="left:989.3px;top:77.3px;font-size:14.2px;color:#eee;transform:scaleX(1.310);">321,23</span>
<span class="t" style="left:989.3px;top:100.4px;font-size:14.2px;color:#eee;transform:scaleX(1.310);">0,26</span>
<span class="t" style="left:989.3px;top:123.7px;font-size:14.2px;color:#eee;transform:scaleX(1.310);">0,36</span>
<span class="t" style="left:989.3px;top:146.9px;font-size:14.2px;color:#eee;transform:scaleX(1.310);">311,34</span>
<span class="t" style="left:989.3px;top:170.1px;font-size:14.2px;color:#eee;transform:scaleX(1.310);">2,55</span>
<span class="t" style="left:989.3px;top:193.3px;font-size:14.2px;color:#eee;transform:scaleX(1.310);">5,59</span>
<span class="t" style="left:1099.8px;top:6.9px;font-size:14.2px;color:#fff;transform:scaleX(1.208);-webkit-text-stroke:0.2px #fff;">Orange</span>
<span class="t" style="left:1099.8px;top:30.5px;font-size:14.2px;color:#eee;transform:scaleX(1.310);">0,51</span>
<span class="t" style="left:1099.8px;top:54.1px;font-size:14.2px;color:#eee;transform:scaleX(1.310);">0,41</span>
<span class="t" style="left:1099.8px;top:77.3px;font-size:14.2px;color:#eee;transform:scaleX(1.310);">210,54</span>
<span class="t" style="left:1099.8px;top:100.4px;font-size:14.2px;color:#eee;transform:scaleX(1.310);">0,51</span>
<span class="t" style="left:1099.8px;top:123.7px;font-size:14.2px;color:#eee;transform:scaleX(1.310);">0,41</span>
<span class="t" style="left:1099.8px;top:146.9px;font-size:14.2px;color:#eee;transform:scaleX(1.310);">210,77</span>
<span class="t" style="left:1099.8px;top:170.1px;font-size:14.2px;color:#eee;transform:scaleX(1.310);">1,58</span>
<span class="t" style="left:1099.8px;top:193.3px;font-size:14.2px;color:#eee;transform:scaleX(1.310);">4,83</span>
<span class="t" style="left:1167.7px;top:6.9px;font-size:14.2px;color:#fff;transform:scaleX(1.235);-webkit-text-stroke:0.2px #fff;">Purplish Blue</span>
<span class="t" style="left:1167.7px;top:30.5px;font-size:14.2px;color:#eee;transform:scaleX(1.310);">0,21</span>
<span class="t" style="left:1167.7px;top:54.1px;font-size:14.2px;color:#eee;transform:scaleX(1.310);">0,18</span>
<span class="t" style="left:1167.7px;top:77.3px;font-size:14.2px;color:#eee;transform:scaleX(1.310);">87,52</span>
<span class="t" style="left:1167.7px;top:100.4px;font-size:14.2px;color:#eee;transform:scaleX(1.310);">0,22</span>
<span class="t" style="left:1167.7px;top:123.7px;font-size:14.2px;color:#eee;transform:scaleX(1.310);">0,19</span>
<span class="t" style="left:1167.7px;top:146.9px;font-size:14.2px;color:#eee;transform:scaleX(1.310);">87,39</span>
<span class="t" style="left:1167.7px;top:170.1px;font-size:14.2px;color:#eee;transform:scaleX(1.310);">1,96</span>
<span class="t" style="left:1167.7px;top:193.3px;font-size:14.2px;color:#eee;transform:scaleX(1.310);">10,46</span>
<span class="t" style="left:1282.0px;top:6.9px;font-size:14.2px;color:#fff;transform:scaleX(1.330);">Moderate Red</span>
<span class="t" style="left:1282.0px;top:30.5px;font-size:14.2px;color:#eee;transform:scaleX(1.310);">0,46</span>
<span class="t" style="left:1282.0px;top:54.1px;font-size:14.2px;color:#eee;transform:scaleX(1.310);">0,31</span>
<span class="t" style="left:1282.0px;top:77.3px;font-size:14.2px;color:#eee;transform:scaleX(1.310);">136,83</span>
<span class="t" style="left:1282.0px;top:100.4px;font-size:14.2px;color:#eee;transform:scaleX(1.310);">0,46</span>
<span class="t" style="left:1282.0px;top:123.7px;font-size:14.2px;color:#eee;transform:scaleX(1.310);">0,31</span>
<span class="t" style="left:1282.0px;top:146.9px;font-size:14.2px;color:#eee;transform:scaleX(1.310);">138,86</span>
<span class="t" style="left:1282.0px;top:170.1px;font-size:14.2px;color:#eee;transform:scaleX(1.310);">1,45</span>
<span class="t" style="left:1282.0px;top:193.3px;font-size:14.2px;color:#eee;transform:scaleX(1.310);">3,84</span>
<span class="t" style="left:16.0px;top:30.5px;font-size:14.2px;color:#fff;font-weight:bold;transform:scaleX(1.258);">x: CIE31</span>
<span class="t" style="left:16.0px;top:54.1px;font-size:14.2px;color:#fff;font-weight:bold;transform:scaleX(1.258);">y: CIE31</span>
<span class="t" style="left:16.0px;top:77.3px;font-size:14.2px;color:#fff;font-weight:bold;transform:scaleX(1.109);">Y</span>
<span class="t" style="left:16.0px;top:100.4px;font-size:14.2px;color:#fff;font-weight:bold;transform:scaleX(1.315);">Target x:CIE31</span>
<span class="t" style="left:16.0px;top:123.7px;font-size:14.2px;color:#fff;font-weight:bold;transform:scaleX(1.315);">Target y:CIE31</span>
<span class="t" style="left:16.0px;top:146.9px;font-size:14.2px;color:#fff;font-weight:bold;transform:scaleX(1.342);">Target Y</span>
<span class="t" style="left:16.0px;top:170.1px;font-size:14.2px;color:#fff;font-weight:bold;transform:scaleX(1.340);">ΔE 2000</span>
<span class="t" style="left:16.0px;top:193.3px;font-size:14.2px;color:#fff;font-weight:bold;transform:scaleX(1.291);">ΔE ITP</span>
</div>
<div class="a" style="left:322px;top:872px;width:1345px;height:15px;background:#5c5c5c"></div>
<div class="a" style="left:344px;top:873.5px;width:643px;height:12px;background:#404040;border-radius:6px"></div>
<div class="a" style="left:323px;top:873px;width:13px;height:13px;background:#8a8a8a;border:1px solid #aaa;border-radius:3px"></div>
<svg class="a" style="left:326px;top:874.5px" width="7" height="10"><path d="M7 0V10L0 5Z" fill="#444"/></svg>
<div class="a" style="left:1652px;top:873px;width:14px;height:13px;background:#8a8a8a;border:1px solid #aaa;border-radius:3px"></div>
<svg class="a" style="left:1656px;top:874.5px" width="7" height="10"><path d="M0 0V10L7 5Z" fill="#444"/></svg>
<div class="a" style="left:0px;top:927px;width:1266px;height:63px;background:#414141"></div>
<div class="a" style="left:-31.77px;top:928.5px;width:62px;height:61.3px;background:linear-gradient(#aeaeae,#909090 45%,#6a6a6a);border-radius:6px 6px 4px 4px;overflow:hidden"><div class="a" style="left:6px;top:6.6px;width:50px;height:14.6px;border-radius:5px;background:#8a86c8;box-shadow:inset 1px 1px 2px rgba(0,0,0,.45)"></div></div>
<span class="t" style="left:-20.9px;top:957.7px;font-size:13px;color:#242424;font-weight:bold;transform:scaleX(0.951);">Blue</span>
<span class="t" style="left:-20.9px;top:972.5px;font-size:13px;color:#242424;font-weight:bold;transform:scaleX(0.960);">Flower</span>
<div class="a" style="left:33.2px;top:928.5px;width:62px;height:61.3px;background:linear-gradient(#aeaeae,#909090 45%,#6a6a6a);border-radius:6px 6px 4px 4px;overflow:hidden"><div class="a" style="left:6px;top:6.6px;width:50px;height:14.6px;border-radius:5px;background:#66cdb4;box-shadow:inset 1px 1px 2px rgba(0,0,0,.45)"></div></div>
<span class="t" style="left:45.7px;top:957.7px;font-size:13px;color:#242424;font-weight:bold;transform:scaleX(0.914);">Bluish</span>
<span class="t" style="left:45.7px;top:972.5px;font-size:13px;color:#242424;font-weight:bold;transform:scaleX(0.985);">Green</span>
<div class="a" style="left:98.17px;top:928.5px;width:62px;height:61.3px;background:linear-gradient(#aeaeae,#909090 45%,#6a6a6a);border-radius:6px 6px 4px 4px;overflow:hidden"><div class="a" style="left:6px;top:6.6px;width:50px;height:30px;border-radius:5px;background:#e07b28;box-shadow:inset 1px 1px 2px rgba(0,0,0,.45)"></div></div>
<span class="t" style="left:107.2px;top:972.5px;font-size:13px;color:#242424;font-weight:bold;transform:scaleX(0.967);">Orange</span>
<div class="a" style="left:163.14px;top:928.5px;width:62px;height:61.3px;background:linear-gradient(#aeaeae,#909090 45%,#6a6a6a);border-radius:6px 6px 4px 4px;overflow:hidden"><div class="a" style="left:6px;top:6.6px;width:50px;height:14.6px;border-radius:5px;background:#4a5daf;box-shadow:inset 1px 1px 2px rgba(0,0,0,.45)"></div></div>
<span class="t" style="left:169.1px;top:957.7px;font-size:13px;color:#242424;font-weight:bold;transform:scaleX(0.961);">Purplish</span>
<span class="t" style="left:169.1px;top:972.5px;font-size:13px;color:#242424;font-weight:bold;transform:scaleX(0.951);">Blue</span>
<div class="a" style="left:228.11px;top:928.5px;width:62px;height:61.3px;background:linear-gradient(#aeaeae,#909090 45%,#6a6a6a);border-radius:6px 6px 4px 4px;overflow:hidden"><div class="a" style="left:6px;top:6.6px;width:50px;height:14.6px;border-radius:5px;background:#d0566a;box-shadow:inset 1px 1px 2px rgba(0,0,0,.45)"></div></div>
<span class="t" style="left:228.9px;top:957.7px;font-size:13px;color:#242424;font-weight:bold;transform:scaleX(1.045);">Moderate</span>
<span class="t" style="left:228.9px;top:972.5px;font-size:13px;color:#242424;font-weight:bold;transform:scaleX(0.936);">Red</span>
<div class="a" style="left:293.08px;top:928.5px;width:62px;height:61.3px;background:linear-gradient(#aeaeae,#909090 45%,#6a6a6a);border-radius:6px 6px 4px 4px;overflow:hidden"><div class="a" style="left:6px;top:6.6px;width:50px;height:30px;border-radius:5px;background:#5f3c6e;box-shadow:inset 1px 1px 2px rgba(0,0,0,.45)"></div></div>
<span class="t" style="left:304.1px;top:972.5px;font-size:13px;color:#242424;font-weight:bold;transform:scaleX(0.986);">Purple</span>
<div class="a" style="left:358.05px;top:928.5px;width:62px;height:61.3px;background:linear-gradient(#aeaeae,#909090 45%,#6a6a6a);border-radius:6px 6px 4px 4px;overflow:hidden"><div class="a" style="left:6px;top:6.6px;width:50px;height:14.6px;border-radius:5px;background:#a6c844;box-shadow:inset 1px 1px 2px rgba(0,0,0,.45)"></div></div>
<span class="t" style="left:368.9px;top:957.7px;font-size:13px;color:#242424;font-weight:bold;transform:scaleX(0.994);">Yellow</span>
<span class="t" style="left:368.9px;top:972.5px;font-size:13px;color:#242424;font-weight:bold;transform:scaleX(0.985);">Green</span>
<div class="a" style="left:423.02px;top:928.5px;width:62px;height:61.3px;background:linear-gradient(#aeaeae,#909090 45%,#6a6a6a);border-radius:6px 6px 4px 4px;overflow:hidden"><div class="a" style="left:6px;top:6.6px;width:50px;height:14.6px;border-radius:5px;background:#f0a832;box-shadow:inset 1px 1px 2px rgba(0,0,0,.45)"></div></div>
<span class="t" style="left:432.0px;top:957.7px;font-size:13px;color:#242424;font-weight:bold;transform:scaleX(0.967);">Orange</span>
<span class="t" style="left:432.0px;top:972.5px;font-size:13px;color:#242424;font-weight:bold;transform:scaleX(0.994);">Yellow</span>
<div class="a" style="left:487.99px;top:928.5px;width:62px;height:61.3px;background:linear-gradient(#aeaeae,#909090 45%,#6a6a6a);border-radius:6px 6px 4px 4px;overflow:hidden"><div class="a" style="left:6px;top:6.6px;width:50px;height:30px;border-radius:5px;background:#303c9e;box-shadow:inset 1px 1px 2px rgba(0,0,0,.45)"></div></div>
<span class="t" style="left:505.6px;top:972.5px;font-size:13px;color:#242424;font-weight:bold;transform:scaleX(0.951);">Blue</span>
<div class="a" style="left:552.96px;top:928.5px;width:62px;height:61.3px;background:linear-gradient(#aeaeae,#909090 45%,#6a6a6a);border-radius:6px 6px 4px 4px;overflow:hidden"><div class="a" style="left:6px;top:6.6px;width:50px;height:30px;border-radius:5px;background:#44a04e;box-shadow:inset 1px 1px 2px rgba(0,0,0,.45)"></div></div>
<span class="t" style="left:565.5px;top:972.5px;font-size:13px;color:#242424;font-weight:bold;transform:scaleX(0.985);">Green</span>
<div class="a" style="left:617.93px;top:928.5px;width:62px;height:61.3px;background:linear-gradient(#aeaeae,#909090 45%,#6a6a6a);border-radius:6px 6px 4px 4px;overflow:hidden"><div class="a" style="left:6px;top:6.6px;width:50px;height:30px;border-radius:5px;background:#b8303a;box-shadow:inset 1px 1px 2px rgba(0,0,0,.45)"></div></div>
<span class="t" style="left:637.4px;top:972.5px;font-size:13px;color:#242424;font-weight:bold;transform:scaleX(0.936);">Red</span>
<div class="a" style="left:682.9px;top:928.5px;width:62px;height:61.3px;background:linear-gradient(#aeaeae,#909090 45%,#6a6a6a);border-radius:6px 6px 4px 4px;overflow:hidden"><div class="a" style="left:6px;top:6.6px;width:50px;height:30px;border-radius:5px;background:#f0c820;box-shadow:inset 1px 1px 2px rgba(0,0,0,.45)"></div></div>
<span class="t" style="left:693.8px;top:972.5px;font-size:13px;color:#242424;font-weight:bold;transform:scaleX(0.994);">Yellow</span>
<div class="a" style="left:747.87px;top:928.5px;width:62px;height:61.3px;background:linear-gradient(#aeaeae,#909090 45%,#6a6a6a);border-radius:6px 6px 4px 4px;overflow:hidden"><div class="a" style="left:6px;top:6.6px;width:50px;height:30px;border-radius:5px;background:#c0589c;box-shadow:inset 1px 1px 2px rgba(0,0,0,.45)"></div></div>
<span class="t" style="left:751.7px;top:972.5px;font-size:13px;color:#242424;font-weight:bold;transform:scaleX(1.030);">Magenta</span>
<div class="a" style="left:812.84px;top:928.5px;width:62px;height:61.3px;background:linear-gradient(#aeaeae,#909090 45%,#6a6a6a);border-radius:6px 6px 4px 4px;overflow:hidden"><div class="a" style="left:6px;top:6.6px;width:50px;height:30px;border-radius:5px;background:#0a8cb4;box-shadow:inset 1px 1px 2px rgba(0,0,0,.45)"></div></div>
<span class="t" style="left:829.5px;top:972.5px;font-size:13px;color:#242424;font-weight:bold;transform:scaleX(0.903);">Cyan</span>
<div class="a" style="left:877.81px;top:928.5px;width:62px;height:61.3px;background:linear-gradient(#aeaeae,#909090 45%,#6a6a6a);border-radius:6px 6px 4px 4px;overflow:hidden"><div class="a" style="left:6px;top:6.6px;width:50px;height:30px;border-radius:5px;background:#ff0000;box-shadow:inset 1px 1px 2px rgba(0,0,0,.45)"></div></div>
<span class="t" style="left:878.7px;top:972.5px;font-size:13px;color:#242424;font-weight:bold;transform:scaleX(0.982);">100% Red</span>
<div class="a" style="left:942.78px;top:928.5px;width:62px;height:61.3px;background:linear-gradient(#aeaeae,#909090 45%,#6a6a6a);border-radius:6px 6px 4px 4px;overflow:hidden"><div class="a" style="left:6px;top:6.6px;width:50px;height:14.6px;border-radius:5px;background:#00ff00;box-shadow:inset 1px 1px 2px rgba(0,0,0,.45)"></div></div>
<span class="t" style="left:955.3px;top:957.7px;font-size:13px;color:#242424;font-weight:bold;">100%</span>
<span class="t" style="left:955.3px;top:972.5px;font-size:13px;color:#242424;font-weight:bold;transform:scaleX(0.985);">Green</span>
<div class="a" style="left:1007.75px;top:928.5px;width:62px;height:61.3px;background:linear-gradient(#aeaeae,#909090 45%,#6a6a6a);border-radius:6px 6px 4px 4px;overflow:hidden"><div class="a" style="left:6px;top:6.6px;width:50px;height:14.6px;border-radius:5px;background:#0000ff;box-shadow:inset 1px 1px 2px rgba(0,0,0,.45)"></div></div>
<span class="t" style="left:1022.1px;top:957.7px;font-size:13px;color:#242424;font-weight:bold;">100%</span>
<span class="t" style="left:1022.1px;top:972.5px;font-size:13px;color:#242424;font-weight:bold;transform:scaleX(0.951);">Blue</span>
<div class="a" style="left:1072.72px;top:928.5px;width:62px;height:61.3px;background:linear-gradient(#aeaeae,#909090 45%,#6a6a6a);border-radius:6px 6px 4px 4px;overflow:hidden"><div class="a" style="left:6px;top:6.6px;width:50px;height:14.6px;border-radius:5px;background:#00ffff;box-shadow:inset 1px 1px 2px rgba(0,0,0,.45)"></div></div>
<span class="t" style="left:1087.1px;top:957.7px;font-size:13px;color:#242424;font-weight:bold;">100%</span>
<span class="t" style="left:1087.1px;top:972.5px;font-size:13px;color:#242424;font-weight:bold;transform:scaleX(0.903);">Cyan</span>
<div class="a" style="left:1137.69px;top:928.5px;width:62px;height:61.3px;background:linear-gradient(#aeaeae,#909090 45%,#6a6a6a);border-radius:6px 6px 4px 4px;overflow:hidden"><div class="a" style="left:6px;top:6.6px;width:50px;height:14.6px;border-radius:5px;background:#ff00ff;box-shadow:inset 1px 1px 2px rgba(0,0,0,.45)"></div></div>
<span class="t" style="left:1141.5px;top:957.7px;font-size:13px;color:#242424;font-weight:bold;">100%</span>
<span class="t" style="left:1141.5px;top:972.5px;font-size:13px;color:#242424;font-weight:bold;transform:scaleX(1.030);">Magenta</span>
<div class="a" style="left:1202.66px;top:928.5px;width:62px;height:61.3px;background:linear-gradient(#1e1e1e,#2a2a2a 50%,#444);border-radius:6px 6px 4px 4px;overflow:hidden"><div class="a" style="left:6px;top:6.6px;width:50px;height:14.6px;border-radius:5px;background:#ffff00;box-shadow:inset 1px 1px 2px rgba(0,0,0,.45)"></div></div>
<span class="t" style="left:1213.6px;top:957.7px;font-size:13px;color:#fff;font-weight:bold;">100%</span>
<span class="t" style="left:1213.6px;top:972.5px;font-size:13px;color:#fff;font-weight:bold;transform:scaleX(0.994);">Yellow</span>
<div class="a" style="left:0px;top:990px;width:1266px;height:15px;background:#666"></div>
<div class="a" style="left:450.4px;top:991.5px;width:796px;height:12px;background:#484848;border-radius:6px"></div>
<div class="a" style="left:3px;top:991px;width:13px;height:13px;background:#8a8a8a;border:1px solid #aaa;border-radius:3px"></div>
<svg class="a" style="left:6px;top:992.5px" width="7" height="10"><path d="M7 0V10L0 5Z" fill="#444"/></svg>
<div class="a" style="left:1251px;top:991px;width:14px;height:13px;background:#8a8a8a;border:1px solid #aaa;border-radius:3px"></div>
<svg class="a" style="left:1255px;top:992.5px" width="7" height="10"><path d="M0 0V10L7 5Z" fill="#444"/></svg>
<div class="a" style="left:1266.5px;top:928.5px;width:60px;height:77px;background:linear-gradient(#8a8a8a,#6a6a6a)"></div>
<div class="a" style="left:1266.5px;top:928.5px;width:60px;height:23px;background:linear-gradient(#a8a8a8,#7c7c7c);border-radius:6px 6px 0 0;border-bottom:1px solid #555"></div>
<div class="a" style="left:1287px;top:930px;width:20px;height:20px;border-radius:50%;background:linear-gradient(#777,#999)"></div>
<svg class="a" style="left:1291px;top:935px" width="12" height="8"><path d="M0 7H12L6 0Z" fill="#333"/></svg>
<div class="a" style="left:1276.5px;top:959.5px;width:38.5px;height:37.5px;border:3px solid #222;border-radius:6px;background:linear-gradient(#b4b4b4,#a4a4a4 49%,#8a8a8a 51%,#929292)"></div>
<div class="a" style="left:1288px;top:970px;width:17px;height:17px;background:#000"></div>
<div class="a" style="left:1326.8px;top:928px;width:59px;height:38px;background:linear-gradient(#b0b0b0,#747474);border-right:1px solid #4a4a4a"></div>
<div class="a" style="left:1343.8px;top:934.5px;width:25px;height:25px;border-radius:50%;background:linear-gradient(#8a8a8a,#a8a8a8)"></div>
<div class="a" style="left:1385.8px;top:928px;width:56.1px;height:38px;background:linear-gradient(#b0b0b0,#747474);border-right:1px solid #4a4a4a"></div>
<div class="a" style="left:1401.35px;top:934.5px;width:25px;height:25px;border-radius:50%;background:linear-gradient(#8a8a8a,#a8a8a8)"></div>
<div class="a" style="left:1441.9px;top:928px;width:57.3px;height:38px;background:linear-gradient(#8a8a8a,#505050);border-right:1px solid #4a4a4a"></div>
<div class="a" style="left:1458.05px;top:934.5px;width:25px;height:25px;border-radius:50%;background:linear-gradient(#5a5a5a,#777)"></div>
<div class="a" style="left:1499.2px;top:928px;width:55.6px;height:38px;background:linear-gradient(#b0b0b0,#747474);border-right:1px solid #4a4a4a"></div>
<div class="a" style="left:1514.5px;top:934.5px;width:25px;height:25px;border-radius:50%;background:linear-gradient(#8a8a8a,#a8a8a8)"></div>
<div class="a" style="left:1554.8px;top:928px;width:56.4px;height:38px;background:linear-gradient(#3c3c3c,#282828);border-right:1px solid #4a4a4a"></div>
<div class="a" style="left:1570.5px;top:934.5px;width:25px;height:25px;border-radius:50%;background:linear-gradient(#2a2a2a,#3a3a3a)"></div>
<div class="a" style="left:1611.2px;top:928px;width:57.8px;height:38px;background:linear-gradient(#b0b0b0,#747474);border-right:1px solid #4a4a4a"></div>
<div class="a" style="left:1627.6px;top:934.5px;width:25px;height:25px;border-radius:50%;background:linear-gradient(#8a8a8a,#a4a4a4)"></div>
<div class="a" style="left:1326.8px;top:965.8px;width:343px;height:1.3px;background:#3a3a3a"></div>
<div class="a" style="left:1351.3px;top:942.3px;width:9.7px;height:9.7px;background:#303030"></div>
<svg class="a" style="left:1410px;top:942px" width="11" height="13"><path d="M0 0V12L10.2 6Z" fill="#2c2c2c"/></svg>
<svg class="a" style="left:1461px;top:940px" width="17" height="14" viewBox="0 0 17 14"><path d="M4 1H1.5V13H4M13 1H15.5V13H13" fill="none" stroke="#2a2a2a" stroke-width="2.4"/><path d="M5.2 7H7.7M9.300 7H11.800" stroke="#2a2a2a" stroke-width="2"/></svg>
<svg class="a" style="left:1517.5px;top:942.3px" width="18" height="9.2" viewBox="0 0 18 10" preserveAspectRatio="none"><path d="M9 5C7 1.5 5.5 1 4.2 1A3.4 3.8 0 0 0 4.2 9C5.5 9 7 8.500 9 5C11 1.5 12.500 1 13.800 1A3.4 3.8 0 0 1 13.800 9C12.500 9 11 8.500 9 5Z" fill="none" stroke="#333" stroke-width="2.2"/></svg>
<svg class="a" style="left:1574px;top:939px" width="17" height="17" viewBox="0 0 17 17"><path d="M2.500 7A6 6 0 0 1 13 4.500M14.500 10A6 6 0 0 1 4 12.500" fill="none" stroke="#151515" stroke-width="2.3"/><path d="M10.500 5.500L15 6V1.500ZM6.500 11.500L2 11V15.500Z" fill="#151515"/></svg>
<div class="a" style="left:1326.8px;top:967px;width:171.6px;height:38px;background:linear-gradient(#a8a8a8,#7a7a7a);border-right:1.5px solid #3c3c3c;border-radius:3px 0 0 0"></div>
<div class="a" style="left:1498.9px;top:967px;width:171px;height:38px;background:linear-gradient(#a8a8a8,#7a7a7a)"></div>
<div class="a" style="left:1352px;top:973px;width:26px;height:26px;border-radius:50%;background:linear-gradient(#858585,#a2a2a2)"></div>
<div class="a" style="left:1620px;top:973px;width:26px;height:26px;border-radius:50%;background:linear-gradient(#858585,#a2a2a2)"></div>
<svg class="a" style="left:1359px;top:980.3px" width="12" height="11.5" viewBox="0 0 14 14"><path d="M6.500 1L1.500 7L6.500 13M12.500 1L7.500 7L12.500 13" fill="none" stroke="#333" stroke-width="2.3"/></svg>
<svg class="a" style="left:1627.3px;top:980.3px" width="12" height="11.5" viewBox="0 0 14 14"><path d="M1.500 1L6.500 7L1.500 13M7.500 1L12.500 7L7.500 13" fill="none" stroke="#333" stroke-width="2.3"/></svg>
<span class="t" style="left:1399.3px;top:972.4px;font-size:27px;color:#333;transform:scaleX(1.053);-webkit-text-stroke:0.45px #333;">Back</span>
<span class="t" style="left:1533.3px;top:972.4px;font-size:27px;color:#333;transform:scaleX(1.153);-webkit-text-stroke:0.45px #333;">Next</span>
<div class="a" style="left:0;top:37px;width:1px;height:891px;background:#282828"></div><div class="a" style="left:0;top:928px;width:1.2px;height:77px;background:#12121a"></div><div class="a" style="left:1662px;top:0;width:7px;height:1005px;background:linear-gradient(90deg,rgba(24,24,24,0),rgba(24,24,24,.55) 50%,rgba(22,22,22,.92))"></div></div></body></html>
